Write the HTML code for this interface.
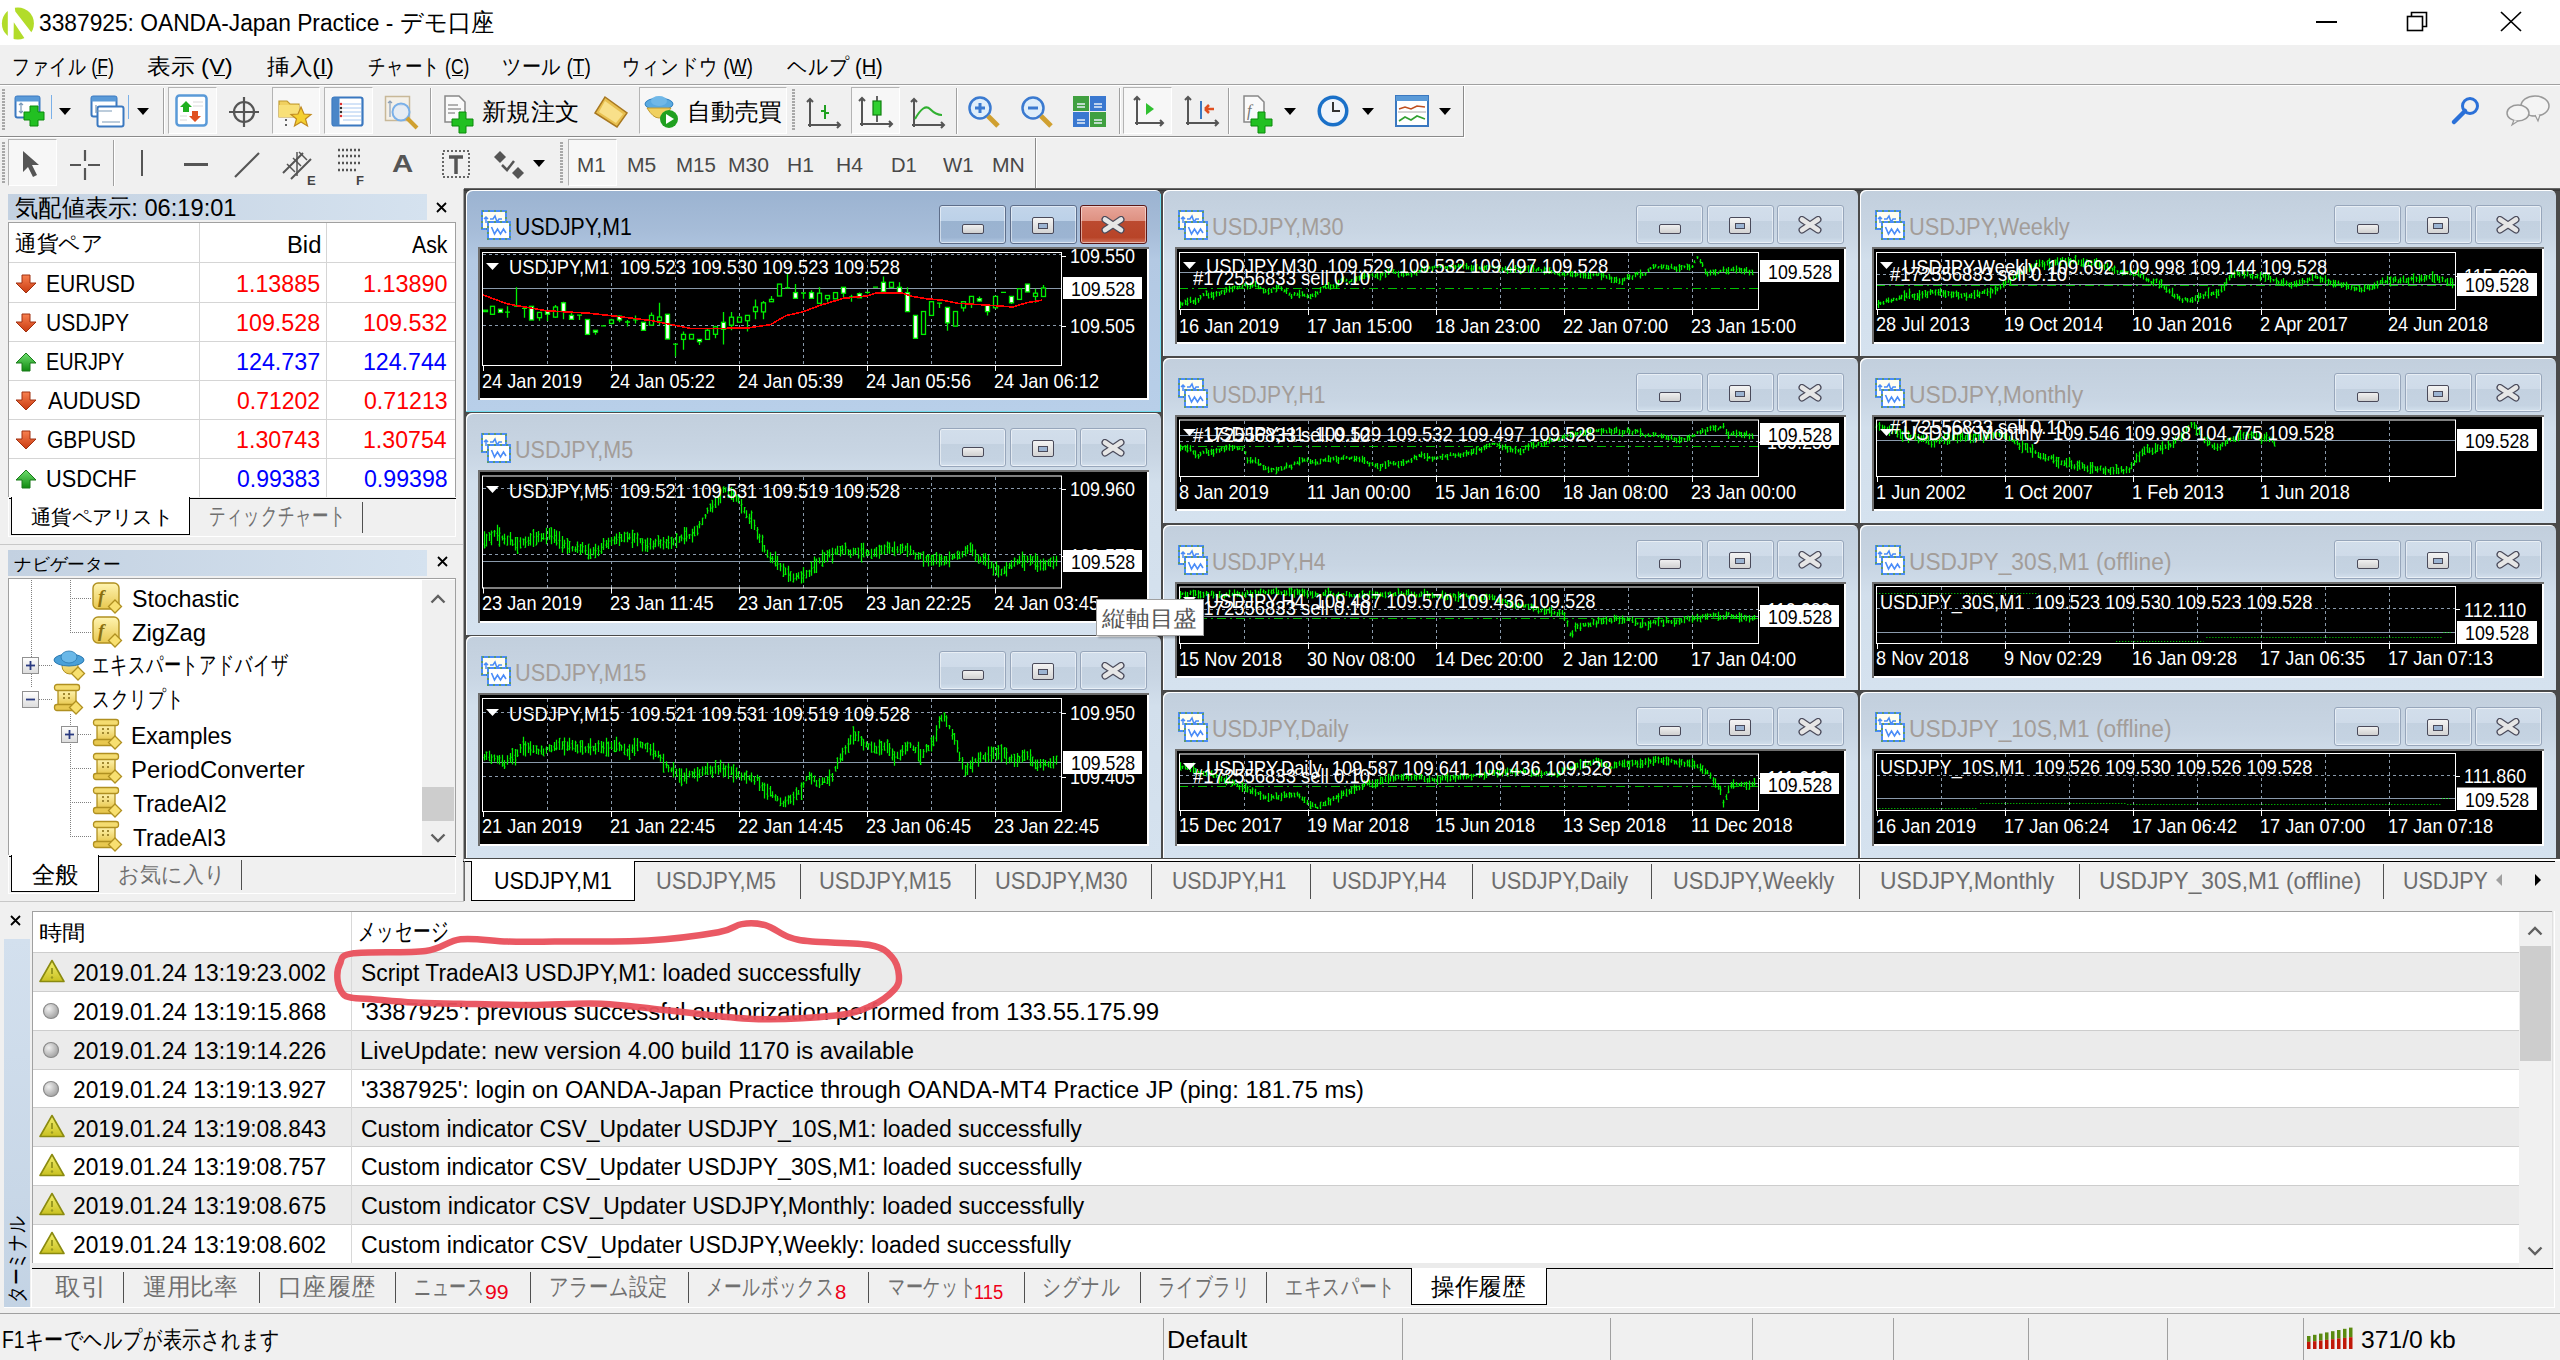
<!DOCTYPE html><html><head><meta charset="utf-8"><style>html,body{margin:0;padding:0;}body{width:2560px;height:1360px;position:relative;overflow:hidden;background:#f0f0f0;font-family:'Liberation Sans',sans-serif;}body>div,body>span,body>svg{position:absolute;}.t{position:absolute;white-space:pre;line-height:1;transform-origin:0 0;}</style></head><body><div style="left:0px;top:0px;width:2560px;height:45px;background:#fff"></div><svg style="left:0px;top:2px" width="40" height="40" viewBox="0 0 40 40"><circle cx="17.9" cy="21.4" r="16" fill="#b2dc2a"/><path d="M7.8 -1L14 -1L15.3 9.4L40 41.5L28 41.5L13.8 20.2L13.5 41L7.8 41Z" fill="#fff"/></svg><span class="t" style="left:38.77px;top:11.42px;font-size:24.56px;color:#000;transform:scaleX(0.9274);">3387925: OANDA-Japan Practice - デモ口座</span><div style="left:2316px;top:21px;width:21px;height:2px;background:#000"></div><svg style="left:2405px;top:10px" width="24" height="22" viewBox="0 0 24 22"><rect x="2.5" y="6.5" width="15" height="14" fill="none" stroke="#000" stroke-width="1.6"/><path d="M6.5 6.5V2.5H21.5V16.5H17.5" fill="none" stroke="#000" stroke-width="1.6"/></svg><svg style="left:2500px;top:11px" width="22" height="21" viewBox="0 0 22 21"><path d="M1 1L21 20M21 1L1 20" stroke="#000" stroke-width="1.7"/></svg><div style="left:0px;top:45px;width:2560px;height:39px;background:#f0f0f0"></div><div style="left:0px;top:84px;width:2560px;height:1px;background:#a0a0a0"></div><div style="left:0px;top:85px;width:2560px;height:1px;background:#fff"></div><span class="t" style="left:12.09px;top:55.52px;font-size:22.09px;color:#000;transform:scaleX(0.8073);">ファイル (F)</span><div style="left:96px;top:75px;width:11px;height:1px;background:#000"></div><span class="t" style="left:146.92px;top:55.52px;font-size:22.09px;color:#000;transform:scaleX(1.0779);">表示 (V)</span><div style="left:214px;top:75px;width:11px;height:1px;background:#000"></div><span class="t" style="left:267.00px;top:55.52px;font-size:22.09px;color:#000;transform:scaleX(1.0312);">挿入(I)</span><div style="left:316px;top:75px;width:11px;height:1px;background:#000"></div><span class="t" style="left:368.21px;top:55.52px;font-size:22.09px;color:#000;transform:scaleX(0.7937);">チャート (C)</span><div style="left:452px;top:75px;width:11px;height:1px;background:#000"></div><span class="t" style="left:502.26px;top:55.52px;font-size:22.09px;color:#000;transform:scaleX(0.8687);">ツール (T)</span><div style="left:573px;top:75px;width:11px;height:1px;background:#000"></div><span class="t" style="left:622.49px;top:55.52px;font-size:22.09px;color:#000;transform:scaleX(0.8355);">ウィンドウ (W)</span><div style="left:735px;top:75px;width:11px;height:1px;background:#000"></div><span class="t" style="left:787.00px;top:55.52px;font-size:22.09px;color:#000;transform:scaleX(0.9048);">ヘルプ (H)</span><div style="left:865px;top:75px;width:11px;height:1px;background:#000"></div><div style="left:0px;top:136px;width:1464px;height:1px;background:#8a8a8a"></div><div style="left:0px;top:137px;width:1465px;height:1px;background:#fff"></div><svg style="left:2px;top:89px" width="3" height="44"><rect x="0" y="0" width="3" height="2" fill="#a8a8a8"/><rect x="0" y="3" width="3" height="2" fill="#a8a8a8"/><rect x="0" y="6" width="3" height="2" fill="#a8a8a8"/><rect x="0" y="9" width="3" height="2" fill="#a8a8a8"/><rect x="0" y="12" width="3" height="2" fill="#a8a8a8"/><rect x="0" y="15" width="3" height="2" fill="#a8a8a8"/><rect x="0" y="18" width="3" height="2" fill="#a8a8a8"/><rect x="0" y="21" width="3" height="2" fill="#a8a8a8"/><rect x="0" y="24" width="3" height="2" fill="#a8a8a8"/><rect x="0" y="27" width="3" height="2" fill="#a8a8a8"/><rect x="0" y="30" width="3" height="2" fill="#a8a8a8"/><rect x="0" y="33" width="3" height="2" fill="#a8a8a8"/><rect x="0" y="36" width="3" height="2" fill="#a8a8a8"/><rect x="0" y="39" width="3" height="2" fill="#a8a8a8"/></svg><svg style="left:2px;top:142px" width="3" height="44"><rect x="0" y="0" width="3" height="2" fill="#a8a8a8"/><rect x="0" y="3" width="3" height="2" fill="#a8a8a8"/><rect x="0" y="6" width="3" height="2" fill="#a8a8a8"/><rect x="0" y="9" width="3" height="2" fill="#a8a8a8"/><rect x="0" y="12" width="3" height="2" fill="#a8a8a8"/><rect x="0" y="15" width="3" height="2" fill="#a8a8a8"/><rect x="0" y="18" width="3" height="2" fill="#a8a8a8"/><rect x="0" y="21" width="3" height="2" fill="#a8a8a8"/><rect x="0" y="24" width="3" height="2" fill="#a8a8a8"/><rect x="0" y="27" width="3" height="2" fill="#a8a8a8"/><rect x="0" y="30" width="3" height="2" fill="#a8a8a8"/><rect x="0" y="33" width="3" height="2" fill="#a8a8a8"/><rect x="0" y="36" width="3" height="2" fill="#a8a8a8"/><rect x="0" y="39" width="3" height="2" fill="#a8a8a8"/></svg><svg style="left:14px;top:95px" width="36" height="34" viewBox="0 0 36 34"><rect x="1.5" y="1.5" width="24" height="21" rx="2" fill="#fff" stroke="#3a78c0" stroke-width="2"/><rect x="1.5" y="1.5" width="24" height="5" fill="#5a9ad8"/><path d="M7 8V18M5 10L7 8L9 10M5 16L7 18L9 16" stroke="#7a9ab8" stroke-width="1.2" fill="none"/><path d="M16 11H24V17H30V25H24V31H16V25H10V17H16Z" fill="#22c022" stroke="#0a8a0a" stroke-width="1"/></svg><div style="left:51px;top:95px;width:1px;height:24px;background:#7ab0e8"></div><svg style="left:59px;top:108px" width="12" height="7" viewBox="0 0 12 7"><path d="M0 0H12L6 7Z" fill="#000"/></svg><svg style="left:90px;top:95px" width="36" height="36" viewBox="0 0 36 36"><rect x="1.5" y="1.5" width="25" height="20" rx="2" fill="#fff" stroke="#3a78c0" stroke-width="2"/><rect x="1.5" y="1.5" width="25" height="5" fill="#5a9ad8"/><rect x="7.5" y="11.5" width="26" height="20" rx="2" fill="#fff" stroke="#3a78c0" stroke-width="2"/><path d="M6 10V18M6 16H22M12 27H30" stroke="#7a9ab8" stroke-width="1.2"/></svg><div style="left:128px;top:95px;width:1px;height:24px;background:#7ab0e8"></div><svg style="left:137px;top:108px" width="12" height="7" viewBox="0 0 12 7"><path d="M0 0H12L6 7Z" fill="#000"/></svg><div style="left:163px;top:88px;width:1px;height:46px;background:#a0a0a0;box-shadow:1px 0 0 #fff"></div><div style="left:168px;top:87px;width:49px;height:47px;background:#f7f7f7;box-sizing:border-box;border-left:1px solid #b4b4b4;border-top:1px solid #b4b4b4;border-right:1px solid #fff;border-bottom:1px solid #fff"></div><svg style="left:175px;top:94px" width="34" height="34" viewBox="0 0 34 34"><rect x="1.5" y="1.5" width="30" height="30" rx="3" fill="#fff" stroke="#5a9ad8" stroke-width="2.5"/><path d="M8 5L14 11H11V16H5V11H2Z" fill="#20b020" transform="translate(3,2)"/><path d="M20 30L26 24H23V19H17V24H14Z" fill="#e05020" transform="translate(0,-2)"/><path d="M18 8H28M18 12H28M5 22H12M5 26H12" stroke="#d8d8d8" stroke-width="1"/></svg><svg style="left:228px;top:96px" width="32" height="32" viewBox="0 0 32 32"><circle cx="16" cy="16" r="10" fill="none" stroke="#555" stroke-width="2.2"/><path d="M16 1V31M1 16H31" stroke="#555" stroke-width="2.2"/></svg><div style="left:272px;top:87px;width:48px;height:47px;background:#f7f7f7;box-sizing:border-box;border-left:1px solid #b4b4b4;border-top:1px solid #b4b4b4;border-right:1px solid #fff;border-bottom:1px solid #fff"></div><svg style="left:277px;top:93px" width="40" height="38" viewBox="0 0 40 38"><path d="M2 8H10L13 11H22V24H2Z" fill="#f0d060" stroke="#c09a30" stroke-width="1.2"/><path d="M2 12H22V24H2Z" fill="#f8e078"/><path d="M24 14L27 21L34 21.5L28.5 26L30.5 33L24 29L17.5 33L19.5 26L14 21.5L21 21Z" fill="#f5d030" stroke="#c08a20" stroke-width="1.2"/><path d="M9 26V36" stroke="#333" stroke-width="1.5" stroke-dasharray="2 3"/></svg><div style="left:324px;top:87px;width:49px;height:47px;background:#f7f7f7;box-sizing:border-box;border-left:1px solid #b4b4b4;border-top:1px solid #b4b4b4;border-right:1px solid #fff;border-bottom:1px solid #fff"></div><svg style="left:331px;top:96px" width="34" height="32" viewBox="0 0 34 32"><rect x="1.5" y="1.5" width="30" height="28" rx="2" fill="#fff" stroke="#3a78c0" stroke-width="2.2"/><rect x="1.5" y="1.5" width="7" height="28" fill="#4a86c8"/><path d="M12 8H30M12 12H30M12 16H30M12 20H30M12 24H30" stroke="#a8c8f0" stroke-width="1"/><circle cx="10" cy="8" r="1.3" fill="#e03030"/><circle cx="10" cy="12" r="1.3" fill="#333"/><circle cx="10" cy="16" r="1.3" fill="#333"/><circle cx="10" cy="20" r="1.3" fill="#e03030"/></svg><svg style="left:384px;top:95px" width="38" height="36" viewBox="0 0 38 36"><rect x="1.5" y="1.5" width="24" height="24" fill="#f4f0e8" stroke="#c8b898" stroke-width="1.5"/><path d="M6 6V22M4 8L6 6L8 8M12 10H22" stroke="#8aa0b8" stroke-width="1.2" fill="none"/><circle cx="17" cy="17" r="8.5" fill="#dfeaf8" fill-opacity="0.7" stroke="#7ab0e8" stroke-width="2"/><path d="M23 23L33 33" stroke="#d0a030" stroke-width="4"/></svg><div style="left:430px;top:88px;width:1px;height:46px;background:#a0a0a0;box-shadow:1px 0 0 #fff"></div><svg style="left:443px;top:94px" width="40" height="40" viewBox="0 0 40 40"><path d="M2 2H16L22 8V28H2Z" fill="#fafafa" stroke="#888" stroke-width="1.5"/><path d="M5 11H15M5 15H18M5 19H12" stroke="#999" stroke-width="1.5"/><path d="M16 18H23V25H30V32H23V39H16V32H9V25H16Z" fill="#22c022" stroke="#0a8a0a" stroke-width="1"/></svg><span class="t" style="left:482.39px;top:99.50px;font-size:23.81px;color:#000;transform:scaleX(1.0108);">新規注文</span><svg style="left:593px;top:95px" width="36" height="34" viewBox="0 0 36 34"><path d="M12 2L34 18L24 32L2 18Z" fill="#e8c050" stroke="#a87820" stroke-width="1.5"/><path d="M12 6L30 19L23 28L6 17Z" fill="#f8e08a"/></svg><div style="left:639px;top:87px;width:148px;height:47px;background:#f7f7f7;box-sizing:border-box;border-left:1px solid #b4b4b4;border-top:1px solid #b4b4b4;border-right:1px solid #fff;border-bottom:1px solid #fff"></div><svg style="left:644px;top:94px" width="38" height="36" viewBox="0 0 38 36"><ellipse cx="15" cy="10" rx="14" ry="6" fill="#5aaae0" stroke="#3080c0" stroke-width="1"/><ellipse cx="15" cy="7" rx="8" ry="5" fill="#70b8e8"/><path d="M3 14Q15 34 27 14Z" fill="#f0d060" stroke="#c09a30" stroke-width="1"/><circle cx="25" cy="25" r="9" fill="#20a020"/><path d="M22 20V30L30 25Z" fill="#fff"/></svg><span class="t" style="left:686.83px;top:99.50px;font-size:23.81px;color:#000;transform:scaleX(0.9913);">自動売買</span><svg style="left:792px;top:89px" width="3" height="44"><rect x="0" y="0" width="3" height="2" fill="#a8a8a8"/><rect x="0" y="3" width="3" height="2" fill="#a8a8a8"/><rect x="0" y="6" width="3" height="2" fill="#a8a8a8"/><rect x="0" y="9" width="3" height="2" fill="#a8a8a8"/><rect x="0" y="12" width="3" height="2" fill="#a8a8a8"/><rect x="0" y="15" width="3" height="2" fill="#a8a8a8"/><rect x="0" y="18" width="3" height="2" fill="#a8a8a8"/><rect x="0" y="21" width="3" height="2" fill="#a8a8a8"/><rect x="0" y="24" width="3" height="2" fill="#a8a8a8"/><rect x="0" y="27" width="3" height="2" fill="#a8a8a8"/><rect x="0" y="30" width="3" height="2" fill="#a8a8a8"/><rect x="0" y="33" width="3" height="2" fill="#a8a8a8"/><rect x="0" y="36" width="3" height="2" fill="#a8a8a8"/><rect x="0" y="39" width="3" height="2" fill="#a8a8a8"/></svg><svg style="left:806px;top:97px" width="36" height="34" viewBox="0 0 36 34"><path d="M4 2V30M1 5L4 2L7 5M2 28H34M31 25L34 28L31 31" stroke="#555" stroke-width="2" fill="none"/><path d="M19 8V22M15 14H19M19 16H23" stroke="#20a020" stroke-width="2"/></svg><div style="left:851px;top:87px;width:49px;height:47px;background:#f7f7f7;box-sizing:border-box;border-left:1px solid #b4b4b4;border-top:1px solid #b4b4b4;border-right:1px solid #fff;border-bottom:1px solid #fff"></div><svg style="left:858px;top:94px" width="36" height="36" viewBox="0 0 36 36"><path d="M4 4V32M1 7L4 4L7 7M2 30H34M31 27L34 30L31 33" stroke="#555" stroke-width="2" fill="none"/><path d="M19 2V28" stroke="#333" stroke-width="1.5"/><rect x="15" y="7" width="8" height="14" fill="#30d030" stroke="#108010" stroke-width="1.2"/></svg><svg style="left:910px;top:97px" width="36" height="34" viewBox="0 0 36 34"><path d="M4 2V30M1 5L4 2L7 5M2 28H34M31 25L34 28L31 31" stroke="#555" stroke-width="2" fill="none"/><path d="M5 22Q14 6 20 12T32 18" stroke="#30b030" stroke-width="2" fill="none"/></svg><div style="left:956px;top:88px;width:1px;height:46px;background:#a0a0a0;box-shadow:1px 0 0 #fff"></div><svg style="left:967px;top:95px" width="34" height="34" viewBox="0 0 34 34"><circle cx="13" cy="13" r="10.5" fill="#dfeefa" stroke="#3a7ad0" stroke-width="2.5"/><path d="M21 21L31 31" stroke="#d0a030" stroke-width="5"/><path d="M8 13H18M13 8V18" stroke="#3a7ad0" stroke-width="3"/></svg><svg style="left:1020px;top:95px" width="34" height="34" viewBox="0 0 34 34"><circle cx="13" cy="13" r="10.5" fill="#dfeefa" stroke="#3a7ad0" stroke-width="2.5"/><path d="M21 21L31 31" stroke="#d0a030" stroke-width="5"/><path d="M8 13H18" stroke="#3a7ad0" stroke-width="3"/></svg><svg style="left:1072px;top:95px" width="36" height="34" viewBox="0 0 36 34"><rect x="1" y="1" width="16" height="15" fill="#40a040"/><rect x="18" y="1" width="16" height="15" fill="#3a78d0"/><rect x="1" y="17" width="16" height="15" fill="#3a78d0"/><rect x="18" y="17" width="16" height="15" fill="#40a040"/><path d="M5 9H13M5 12H13M22 9H30M22 12H30M5 25H13M5 28H13M22 25H30M22 28H30" stroke="#e8f0f8" stroke-width="1.5"/></svg><div style="left:1119px;top:88px;width:1px;height:46px;background:#a0a0a0;box-shadow:1px 0 0 #fff"></div><div style="left:1123px;top:87px;width:49px;height:47px;background:#f7f7f7;box-sizing:border-box;border-left:1px solid #b4b4b4;border-top:1px solid #b4b4b4;border-right:1px solid #fff;border-bottom:1px solid #fff"></div><svg style="left:1130px;top:95px" width="36" height="34" viewBox="0 0 36 34"><path d="M7 2V30M4 5L7 2L10 5M5 28H33M30 25L33 28L30 31" stroke="#555" stroke-width="2" fill="none"/><path d="M16 8V20L24 14Z" fill="#30c030"/></svg><svg style="left:1184px;top:95px" width="36" height="34" viewBox="0 0 36 34"><path d="M4 2V30M1 5L4 2L7 5M2 28H34M31 25L34 28L31 31" stroke="#555" stroke-width="2" fill="none"/><path d="M17 6V24" stroke="#3a78c0" stroke-width="2"/><path d="M21 14H30M21 14L25 10M21 14L25 18" stroke="#e05020" stroke-width="2.5"/></svg><div style="left:1228px;top:88px;width:1px;height:46px;background:#a0a0a0;box-shadow:1px 0 0 #fff"></div><svg style="left:1242px;top:94px" width="38" height="40" viewBox="0 0 38 40"><path d="M2 2H16L22 8V28H2Z" fill="#fafafa" stroke="#888" stroke-width="1.5"/><text x="5" y="22" font-size="16" fill="#777" font-family="Liberation Serif" font-style="italic">f</text><path d="M16 18H23V25H30V32H23V39H16V32H9V25H16Z" fill="#22c022" stroke="#0a8a0a" stroke-width="1"/></svg><svg style="left:1284px;top:108px" width="12" height="7" viewBox="0 0 12 7"><path d="M0 0H12L6 7Z" fill="#000"/></svg><svg style="left:1316px;top:94px" width="36" height="36" viewBox="0 0 36 36"><circle cx="17" cy="17" r="15.5" fill="#1a70c8"/><circle cx="17" cy="17" r="12" fill="#f0f4fa"/><path d="M17 8V17H24" stroke="#333" stroke-width="2" fill="none"/></svg><svg style="left:1362px;top:108px" width="12" height="7" viewBox="0 0 12 7"><path d="M0 0H12L6 7Z" fill="#000"/></svg><svg style="left:1395px;top:95px" width="36" height="34" viewBox="0 0 36 34"><rect x="1" y="1" width="32" height="30" fill="#fff" stroke="#3a78c0" stroke-width="2"/><rect x="1" y="1" width="32" height="5" fill="#5a9ad8"/><path d="M4 14L10 12L16 14L22 11L30 12" stroke="#c05020" stroke-width="1.6" fill="none"/><path d="M3 17H31" stroke="#aaa" stroke-width="1"/><path d="M4 26L10 22L16 25L22 21L30 24" stroke="#30a030" stroke-width="1.6" fill="none"/></svg><svg style="left:1439px;top:108px" width="12" height="7" viewBox="0 0 12 7"><path d="M0 0H12L6 7Z" fill="#000"/></svg><div style="left:1463px;top:86px;width:1px;height:51px;background:#8a8a8a"></div><div style="left:1464px;top:86px;width:1px;height:52px;background:#fff"></div><svg style="left:2450px;top:96px" width="32" height="30" viewBox="0 0 32 30"><circle cx="20" cy="10" r="7.5" fill="none" stroke="#2a70d8" stroke-width="3"/><path d="M15 15L4 26" stroke="#2a70d8" stroke-width="4.5" stroke-linecap="round"/></svg><svg style="left:2504px;top:94px" width="48" height="34" viewBox="0 0 48 34"><ellipse cx="31" cy="12" rx="14" ry="10" fill="#f4f4f4" stroke="#999" stroke-width="1.5"/><path d="M31 21L34 27L36 21" fill="#f4f4f4" stroke="#999" stroke-width="1.2"/><ellipse cx="14" cy="19" rx="11" ry="8" fill="#f4f4f4" stroke="#999" stroke-width="1.5"/><path d="M10 26L8 31L14 27" fill="#f4f4f4" stroke="#999" stroke-width="1.2"/></svg><div style="left:8px;top:139px;width:49px;height:47px;background:#f7f7f7;box-sizing:border-box;border-left:1px solid #b4b4b4;border-top:1px solid #b4b4b4;border-right:1px solid #fff;border-bottom:1px solid #fff"></div><svg style="left:20px;top:150px" width="22" height="30" viewBox="0 0 22 30"><path d="M3 1L3 22L8 17L13 27L17 25L12 15L19 15Z" fill="#555"/></svg><svg style="left:68px;top:148px" width="34" height="34" viewBox="0 0 34 34"><path d="M17 2V13M17 20V32M2 17H13M20 17H32" stroke="#555" stroke-width="2.2"/></svg><div style="left:113px;top:140px;width:1px;height:46px;background:#a0a0a0;box-shadow:1px 0 0 #fff"></div><div style="left:141px;top:150px;width:2px;height:26px;background:#555"></div><div style="left:184px;top:163px;width:24px;height:3px;background:#555"></div><svg style="left:232px;top:150px" width="30" height="30" viewBox="0 0 30 30"><path d="M3 27L27 3" stroke="#555" stroke-width="2.2"/></svg><svg style="left:281px;top:148px" width="40" height="38" viewBox="0 0 40 38"><path d="M2 25L22 5M10 31L30 11" stroke="#555" stroke-width="2"/><path d="M6 16L14 24M12 10L20 18M18 4L26 12" stroke="#555" stroke-width="1.5"/><path d="M16 4V28" stroke="#555" stroke-width="1.5"/><text x="26" y="37" font-size="13" font-weight="bold" fill="#444" font-family="Liberation Sans">E</text></svg><svg style="left:336px;top:148px" width="34" height="38" viewBox="0 0 34 38"><path d="M2 2H26M2 8H26M2 15H26M2 22H22" stroke="#555" stroke-width="2.5" stroke-dasharray="2 2"/><text x="20" y="37" font-size="13" font-weight="bold" fill="#444" font-family="Liberation Sans">F</text></svg><span class="t" style="left:392.23px;top:152.93px;font-size:23.26px;color:#555;font-weight:700;transform:scaleX(1.2667);">A</span><svg style="left:441px;top:149px" width="32" height="32" viewBox="0 0 32 32"><rect x="2" y="2" width="26" height="26" fill="none" stroke="#666" stroke-width="2" stroke-dasharray="2 2"/><path d="M8 8H22M15 8V25" stroke="#555" stroke-width="3.5"/></svg><svg style="left:492px;top:149px" width="36" height="32" viewBox="0 0 36 32"><path d="M2 8L8 2L14 8L8 14Z" fill="#555"/><path d="M20 24L26 18L32 24L26 30Z" fill="#555"/><path d="M10 16L15 21L22 12" stroke="#555" stroke-width="2.5" fill="none"/></svg><svg style="left:533px;top:160px" width="12" height="7" viewBox="0 0 12 7"><path d="M0 0H12L6 7Z" fill="#000"/></svg><svg style="left:560px;top:142px" width="3" height="44"><rect x="0" y="0" width="3" height="2" fill="#a8a8a8"/><rect x="0" y="3" width="3" height="2" fill="#a8a8a8"/><rect x="0" y="6" width="3" height="2" fill="#a8a8a8"/><rect x="0" y="9" width="3" height="2" fill="#a8a8a8"/><rect x="0" y="12" width="3" height="2" fill="#a8a8a8"/><rect x="0" y="15" width="3" height="2" fill="#a8a8a8"/><rect x="0" y="18" width="3" height="2" fill="#a8a8a8"/><rect x="0" y="21" width="3" height="2" fill="#a8a8a8"/><rect x="0" y="24" width="3" height="2" fill="#a8a8a8"/><rect x="0" y="27" width="3" height="2" fill="#a8a8a8"/><rect x="0" y="30" width="3" height="2" fill="#a8a8a8"/><rect x="0" y="33" width="3" height="2" fill="#a8a8a8"/><rect x="0" y="36" width="3" height="2" fill="#a8a8a8"/><rect x="0" y="39" width="3" height="2" fill="#a8a8a8"/></svg><div style="left:568px;top:139px;width:49px;height:47px;background:#f7f7f7;box-sizing:border-box;border-left:1px solid #b4b4b4;border-top:1px solid #b4b4b4;border-right:1px solid #fff;border-bottom:1px solid #fff"></div><span class="t" style="left:576.54px;top:154.28px;font-size:21.08px;color:#484848;transform:scaleX(0.9808);">M1</span><span class="t" style="left:627.00px;top:154.28px;font-size:21.08px;color:#484848;">M5</span><span class="t" style="left:676.05px;top:154.28px;font-size:21.08px;color:#484848;transform:scaleX(0.9737);">M15</span><span class="t" style="left:728.00px;top:154.28px;font-size:21.08px;color:#484848;">M30</span><span class="t" style="left:787.00px;top:154.28px;font-size:21.08px;color:#484848;">H1</span><span class="t" style="left:836.00px;top:154.28px;font-size:21.08px;color:#484848;">H4</span><span class="t" style="left:891.08px;top:154.28px;font-size:21.08px;color:#484848;transform:scaleX(0.9583);">D1</span><span class="t" style="left:943.00px;top:154.28px;font-size:21.08px;color:#484848;transform:scaleX(0.9677);">W1</span><span class="t" style="left:992.00px;top:154.28px;font-size:21.08px;color:#484848;">MN</span><div style="left:1035px;top:138px;width:1px;height:50px;background:#8a8a8a"></div><div style="left:1036px;top:138px;width:1px;height:50px;background:#fff"></div><svg style="left:0;top:0" width="0" height="0"><defs><linearGradient id="gu" x1="0" y1="0" x2="0" y2="1"><stop offset="0" stop-color="#70e070"/><stop offset="1" stop-color="#108a10"/></linearGradient><linearGradient id="gd" x1="0" y1="0" x2="0" y2="1"><stop offset="0" stop-color="#f88050"/><stop offset="1" stop-color="#c83a10"/></linearGradient><linearGradient id="gy" x1="0" y1="0" x2="0" y2="1"><stop offset="0" stop-color="#fff4b0"/><stop offset="1" stop-color="#e8c850"/></linearGradient><linearGradient id="gb" x1="0" y1="0" x2="0" y2="1"><stop offset="0" stop-color="#fff"/><stop offset="1" stop-color="#dcdcdc"/></linearGradient></defs></svg><div style="left:0px;top:189px;width:464px;height:712px;background:#f0f0f0"></div><div style="left:8px;top:194px;width:419px;height:26px;background:linear-gradient(90deg,#c3d1e1,#d5e2ef)"></div><span class="t" style="left:15.03px;top:195.94px;font-size:24.42px;color:#000;transform:scaleX(0.9692);">気配値表示: 06:19:01</span><svg style="left:436px;top:202px" width="11" height="11" viewBox="0 0 11 11"><path d="M1 1L10 10M10 1L1 10" stroke="#000" stroke-width="1.8"/></svg><div style="left:8px;top:222px;width:448px;height:275px;background:#fff;box-sizing:border-box;border:1px solid #a0a0a0;border-bottom:none"></div><div style="left:9px;top:262px;width:446px;height:1px;background:#d5d5d5"></div><div style="left:9px;top:302px;width:446px;height:1px;background:#d5d5d5"></div><div style="left:9px;top:341px;width:446px;height:1px;background:#d5d5d5"></div><div style="left:9px;top:380px;width:446px;height:1px;background:#d5d5d5"></div><div style="left:9px;top:419px;width:446px;height:1px;background:#d5d5d5"></div><div style="left:9px;top:458px;width:446px;height:1px;background:#d5d5d5"></div><div style="left:199px;top:223px;width:1px;height:274px;background:#d5d5d5"></div><div style="left:326px;top:223px;width:1px;height:274px;background:#d5d5d5"></div><span class="t" style="left:15.02px;top:233.00px;font-size:22.39px;color:#000;transform:scaleX(0.9837);">通貨ペア</span><span class="t" style="left:287.45px;top:232.94px;font-size:24.42px;color:#000;transform:scaleX(0.9750);">Bid</span><span class="t" style="left:412.40px;top:232.94px;font-size:24.42px;color:#000;transform:scaleX(0.8683);">Ask</span><svg style="left:15px;top:274px" width="23" height="22" viewBox="0 0 23 22"><path d="M11 19L21 9H15V1H7V9H1Z" fill="url(#gd)" stroke="#a03010" stroke-width="1"/></svg><span class="t" style="left:45.95px;top:272.19px;font-size:24.13px;color:#000;transform:scaleX(0.8737);">EURUSD</span><span class="t" style="left:236.07px;top:272.19px;font-size:24.13px;color:#ff0000;transform:scaleX(0.9643);">1.13885</span><span class="t" style="left:362.76px;top:272.19px;font-size:24.13px;color:#ff0000;transform:scaleX(0.9702);">1.13890</span><svg style="left:15px;top:313px" width="23" height="22" viewBox="0 0 23 22"><path d="M11 19L21 9H15V1H7V9H1Z" fill="url(#gd)" stroke="#a03010" stroke-width="1"/></svg><span class="t" style="left:45.95px;top:311.19px;font-size:24.13px;color:#000;transform:scaleX(0.8728);">USDJPY</span><span class="t" style="left:236.07px;top:311.19px;font-size:24.13px;color:#ff0000;transform:scaleX(0.9643);">109.528</span><span class="t" style="left:362.76px;top:311.19px;font-size:24.13px;color:#ff0000;transform:scaleX(0.9702);">109.532</span><svg style="left:15px;top:352px" width="23" height="22" viewBox="0 0 23 22"><path d="M11 1L21 11H15V19H7V11H1Z" fill="url(#gu)" stroke="#1a7a1a" stroke-width="1"/></svg><span class="t" style="left:46.05px;top:350.19px;font-size:24.13px;color:#000;transform:scaleX(0.8228);">EURJPY</span><span class="t" style="left:236.07px;top:350.19px;font-size:24.13px;color:#0000ff;transform:scaleX(0.9643);">124.737</span><span class="t" style="left:362.78px;top:350.19px;font-size:24.13px;color:#0000ff;transform:scaleX(0.9588);">124.744</span><svg style="left:15px;top:391px" width="23" height="22" viewBox="0 0 23 22"><path d="M11 19L21 9H15V1H7V9H1Z" fill="url(#gd)" stroke="#a03010" stroke-width="1"/></svg><span class="t" style="left:47.70px;top:389.19px;font-size:24.13px;color:#000;transform:scaleX(0.9099);">AUDUSD</span><span class="t" style="left:237.05px;top:389.19px;font-size:24.13px;color:#ff0000;transform:scaleX(0.9529);">0.71202</span><span class="t" style="left:363.74px;top:389.19px;font-size:24.13px;color:#ff0000;transform:scaleX(0.9588);">0.71213</span><svg style="left:15px;top:430px" width="23" height="22" viewBox="0 0 23 22"><path d="M11 19L21 9H15V1H7V9H1Z" fill="url(#gd)" stroke="#a03010" stroke-width="1"/></svg><span class="t" style="left:46.83px;top:428.19px;font-size:24.13px;color:#000;transform:scaleX(0.8710);">GBPUSD</span><span class="t" style="left:236.07px;top:428.19px;font-size:24.13px;color:#ff0000;transform:scaleX(0.9643);">1.30743</span><span class="t" style="left:362.78px;top:428.19px;font-size:24.13px;color:#ff0000;transform:scaleX(0.9588);">1.30754</span><svg style="left:15px;top:469px" width="23" height="22" viewBox="0 0 23 22"><path d="M11 1L21 11H15V19H7V11H1Z" fill="url(#gu)" stroke="#1a7a1a" stroke-width="1"/></svg><span class="t" style="left:45.90px;top:467.19px;font-size:24.13px;color:#000;transform:scaleX(0.9010);">USDCHF</span><span class="t" style="left:237.05px;top:467.19px;font-size:24.13px;color:#0000ff;transform:scaleX(0.9529);">0.99383</span><span class="t" style="left:363.74px;top:467.19px;font-size:24.13px;color:#0000ff;transform:scaleX(0.9588);">0.99398</span><div style="left:8px;top:497px;width:448px;height:40px;background:#f0f0f0;box-sizing:border-box;border-left:1px solid #fff;border-right:1px solid #fff;border-bottom:1px solid #fff"></div><div style="left:9px;top:498px;width:447px;height:1px;background:#000"></div><div style="left:11px;top:497px;width:179px;height:38px;background:#fff;box-sizing:border-box;border:1px solid #000;border-top:none"></div><span class="t" style="left:30.99px;top:507.00px;font-size:20.11px;color:#000;transform:scaleX(1.0149);">通貨ペアリスト</span><span class="t" style="left:208.63px;top:504.00px;font-size:24.13px;color:#707070;transform:scaleX(0.6868);">ティックチャート</span><div style="left:362px;top:502px;width:1px;height:31px;background:#505050"></div><div style="left:0px;top:544px;width:464px;height:1px;background:#c8c8c8"></div><div style="left:8px;top:550px;width:419px;height:26px;background:linear-gradient(90deg,#c3d1e1,#d5e2ef)"></div><span class="t" style="left:13.65px;top:555.50px;font-size:17.21px;color:#000;transform:scaleX(1.0460);">ナビゲーター</span><svg style="left:437px;top:556px" width="11" height="11" viewBox="0 0 11 11"><path d="M1 1L10 10M10 1L1 10" stroke="#000" stroke-width="1.8"/></svg><div style="left:8px;top:578px;width:448px;height:278px;background:#fff;box-sizing:border-box;border:1px solid #a0a0a0;border-bottom:none"></div><div style="left:422px;top:580px;width:33px;height:275px;background:#f0f0f0"></div><div style="left:422px;top:787px;width:32px;height:34px;background:#cdcdcd"></div><svg style="left:430px;top:594px" width="16" height="10" viewBox="0 0 16 10"><path d="M1.5 8.5L8 2L14.5 8.5" stroke="#606060" stroke-width="2.4" fill="none"/></svg><svg style="left:430px;top:833px" width="16" height="10" viewBox="0 0 16 10"><path d="M1.5 1.5L8 8L14.5 1.5" stroke="#606060" stroke-width="2.4" fill="none"/></svg><div style="left:31px;top:580px;width:1px;height:108px;background:repeating-linear-gradient(180deg,#808080 0 1px,transparent 1px 2px)"></div><div style="left:70px;top:580px;width:1px;height:52px;background:repeating-linear-gradient(180deg,#808080 0 1px,transparent 1px 2px)"></div><div style="left:70px;top:598px;width:22px;height:1px;background:repeating-linear-gradient(90deg,#808080 0 1px,transparent 1px 2px)"></div><div style="left:70px;top:632px;width:22px;height:1px;background:repeating-linear-gradient(90deg,#808080 0 1px,transparent 1px 2px)"></div><div style="left:31px;top:665px;width:22px;height:1px;background:repeating-linear-gradient(90deg,#808080 0 1px,transparent 1px 2px)"></div><div style="left:31px;top:699px;width:22px;height:1px;background:repeating-linear-gradient(90deg,#808080 0 1px,transparent 1px 2px)"></div><div style="left:70px;top:714px;width:1px;height:122px;background:repeating-linear-gradient(180deg,#808080 0 1px,transparent 1px 2px)"></div><div style="left:78px;top:734px;width:14px;height:1px;background:repeating-linear-gradient(90deg,#808080 0 1px,transparent 1px 2px)"></div><div style="left:70px;top:768px;width:22px;height:1px;background:repeating-linear-gradient(90deg,#808080 0 1px,transparent 1px 2px)"></div><div style="left:70px;top:802px;width:22px;height:1px;background:repeating-linear-gradient(90deg,#808080 0 1px,transparent 1px 2px)"></div><div style="left:70px;top:836px;width:22px;height:1px;background:repeating-linear-gradient(90deg,#808080 0 1px,transparent 1px 2px)"></div><svg style="left:92px;top:582px" width="32" height="32" viewBox="0 0 32 32"><rect x="1" y="1" width="26" height="26" rx="5" fill="url(#gy)" stroke="#b09020" stroke-width="1.4"/><text x="6" y="21" font-size="19" font-weight="bold" font-style="italic" font-family="Liberation Serif" fill="#8a7010">f</text><path d="M23 18L29.5 24.5L23 31L16.5 24.5Z" fill="#f8e070" stroke="#b09020" stroke-width="1.3"/></svg><span class="t" style="left:131.74px;top:587.19px;font-size:24.13px;color:#000;transform:scaleX(0.9636);">Stochastic</span><svg style="left:92px;top:616px" width="32" height="32" viewBox="0 0 32 32"><rect x="1" y="1" width="26" height="26" rx="5" fill="url(#gy)" stroke="#b09020" stroke-width="1.4"/><text x="6" y="21" font-size="19" font-weight="bold" font-style="italic" font-family="Liberation Serif" fill="#8a7010">f</text><path d="M23 18L29.5 24.5L23 31L16.5 24.5Z" fill="#f8e070" stroke="#b09020" stroke-width="1.3"/></svg><span class="t" style="left:131.71px;top:621.19px;font-size:24.13px;color:#000;transform:scaleX(0.9863);">ZigZag</span><svg style="left:22px;top:657px" width="18" height="18" viewBox="0 0 18 18"><rect x="0.5" y="0.5" width="16" height="16" fill="url(#gb)" stroke="#919191" stroke-width="1"/><path d="M4 8.5H13" stroke="#2a3a80" stroke-width="1.8"/><path d="M8.5 4V13" stroke="#2a3a80" stroke-width="1.8"/></svg><svg style="left:53px;top:649px" width="34" height="32" viewBox="0 0 34 32"><circle cx="17" cy="17" r="8" fill="url(#gy)" stroke="#b09020" stroke-width="1"/><ellipse cx="16" cy="11" rx="15" ry="6" fill="#4aa0d8" stroke="#2a78b0" stroke-width="1"/><ellipse cx="16" cy="8" rx="8" ry="6" fill="#6ab8e8" stroke="#2a78b0" stroke-width="0.8"/><path d="M25 18L31.5 24.5L25 31L18.5 24.5Z" fill="#f8e070" stroke="#b09020" stroke-width="1.3"/></svg><span class="t" style="left:92.36px;top:653.00px;font-size:24.13px;color:#000;transform:scaleX(0.7177);">エキスパートアドバイザ</span><svg style="left:22px;top:691px" width="18" height="18" viewBox="0 0 18 18"><rect x="0.5" y="0.5" width="16" height="16" fill="url(#gb)" stroke="#919191" stroke-width="1"/><path d="M4 8.5H13" stroke="#2a3a80" stroke-width="1.8"/></svg><svg style="left:53px;top:683px" width="32" height="32" viewBox="0 0 32 32"><path d="M5 7H23V22H5Z" fill="url(#gy)" stroke="#b09020" stroke-width="1.3"/><rect x="1.5" y="1.5" width="25" height="6" rx="2.5" fill="#f4dc70" stroke="#b09020" stroke-width="1.3"/><rect x="1.5" y="21.5" width="25" height="6" rx="2.5" fill="#e8c850" stroke="#b09020" stroke-width="1.3"/><path d="M10 11H12M15 11H17M10 15H12M15 15H17" stroke="#a08830" stroke-width="1.8"/><path d="M23 18L29.5 24.5L23 31L16.5 24.5Z" fill="#f8e070" stroke="#b09020" stroke-width="1.3"/></svg><span class="t" style="left:92.26px;top:688.00px;font-size:23.08px;color:#000;transform:scaleX(0.7721);">スクリプト</span><svg style="left:61px;top:726px" width="18" height="18" viewBox="0 0 18 18"><rect x="0.5" y="0.5" width="16" height="16" fill="url(#gb)" stroke="#919191" stroke-width="1"/><path d="M4 8.5H13" stroke="#2a3a80" stroke-width="1.8"/><path d="M8.5 4V13" stroke="#2a3a80" stroke-width="1.8"/></svg><svg style="left:92px;top:718px" width="32" height="32" viewBox="0 0 32 32"><path d="M5 7H23V22H5Z" fill="url(#gy)" stroke="#b09020" stroke-width="1.3"/><rect x="1.5" y="1.5" width="25" height="6" rx="2.5" fill="#f4dc70" stroke="#b09020" stroke-width="1.3"/><rect x="1.5" y="21.5" width="25" height="6" rx="2.5" fill="#e8c850" stroke="#b09020" stroke-width="1.3"/><path d="M10 11H12M15 11H17M10 15H12M15 15H17" stroke="#a08830" stroke-width="1.8"/><path d="M23 18L29.5 24.5L23 31L16.5 24.5Z" fill="#f8e070" stroke="#b09020" stroke-width="1.3"/></svg><span class="t" style="left:130.80px;top:724.19px;font-size:24.13px;color:#000;transform:scaleX(0.9515);">Examples</span><svg style="left:92px;top:752px" width="32" height="32" viewBox="0 0 32 32"><path d="M5 7H23V22H5Z" fill="url(#gy)" stroke="#b09020" stroke-width="1.3"/><rect x="1.5" y="1.5" width="25" height="6" rx="2.5" fill="#f4dc70" stroke="#b09020" stroke-width="1.3"/><rect x="1.5" y="21.5" width="25" height="6" rx="2.5" fill="#e8c850" stroke="#b09020" stroke-width="1.3"/><path d="M10 11H12M15 11H17M10 15H12M15 15H17" stroke="#a08830" stroke-width="1.8"/><path d="M23 18L29.5 24.5L23 31L16.5 24.5Z" fill="#f8e070" stroke="#b09020" stroke-width="1.3"/></svg><span class="t" style="left:130.72px;top:758.19px;font-size:24.13px;color:#000;transform:scaleX(0.9885);">PeriodConverter</span><svg style="left:92px;top:786px" width="32" height="32" viewBox="0 0 32 32"><path d="M5 7H23V22H5Z" fill="url(#gy)" stroke="#b09020" stroke-width="1.3"/><rect x="1.5" y="1.5" width="25" height="6" rx="2.5" fill="#f4dc70" stroke="#b09020" stroke-width="1.3"/><rect x="1.5" y="21.5" width="25" height="6" rx="2.5" fill="#e8c850" stroke="#b09020" stroke-width="1.3"/><path d="M10 11H12M15 11H17M10 15H12M15 15H17" stroke="#a08830" stroke-width="1.8"/><path d="M23 18L29.5 24.5L23 31L16.5 24.5Z" fill="#f8e070" stroke="#b09020" stroke-width="1.3"/></svg><span class="t" style="left:132.70px;top:792.19px;font-size:24.13px;color:#000;transform:scaleX(0.9536);">TradeAI2</span><svg style="left:92px;top:820px" width="32" height="32" viewBox="0 0 32 32"><path d="M5 7H23V22H5Z" fill="url(#gy)" stroke="#b09020" stroke-width="1.3"/><rect x="1.5" y="1.5" width="25" height="6" rx="2.5" fill="#f4dc70" stroke="#b09020" stroke-width="1.3"/><rect x="1.5" y="21.5" width="25" height="6" rx="2.5" fill="#e8c850" stroke="#b09020" stroke-width="1.3"/><path d="M10 11H12M15 11H17M10 15H12M15 15H17" stroke="#a08830" stroke-width="1.8"/><path d="M23 18L29.5 24.5L23 31L16.5 24.5Z" fill="#f8e070" stroke="#b09020" stroke-width="1.3"/></svg><span class="t" style="left:132.70px;top:826.19px;font-size:24.13px;color:#000;transform:scaleX(0.9439);">TradeAI3</span><div style="left:8px;top:855px;width:448px;height:39px;background:#f0f0f0;box-sizing:border-box;border-left:1px solid #fff;border-right:1px solid #fff;border-bottom:1px solid #fff"></div><div style="left:9px;top:856px;width:447px;height:1px;background:#000"></div><div style="left:11px;top:855px;width:88px;height:37px;background:#fff;box-sizing:border-box;border:1px solid #000;border-top:none"></div><span class="t" style="left:31.62px;top:862.60px;font-size:23.91px;color:#000;transform:scaleX(0.9761);">全般</span><span class="t" style="left:117.79px;top:863.60px;font-size:21.92px;color:#707070;transform:scaleX(0.9552);">お気に入り</span><div style="left:241px;top:860px;width:1px;height:30px;background:#505050"></div><div style="left:0px;top:901px;width:464px;height:1px;background:#c8c8c8"></div><div style="left:463px;top:189px;width:1px;height:712px;background:#a0a0a0"></div><div style="left:464px;top:188px;width:2096px;height:671px;background:linear-gradient(180deg,#7a7a7a 0,#555 1px,#2a2a2a 2px,#4a4a4a 3px)"></div><div style="left:466px;top:190px;width:695px;height:222px;background:linear-gradient(180deg,#9bb3d1 0px,#a6bcd8 40px,#b3c9e3 70px,#b8cfe9 100%);border-top-left-radius:6px;border-top-right-radius:6px;box-shadow:inset 1px 1px 0 #fff"></div><div style="left:1160px;top:194px;width:1px;height:218px;background:#70dcf0"></div><div style="left:466px;top:411px;width:695px;height:1px;background:#70dcf0"></div><svg style="left:481px;top:210px" width="31" height="31" viewBox="0 0 31 31"><rect x="1" y="1" width="24" height="18" fill="#fffdf0" stroke="#4a8cf8" stroke-width="2"/><rect x="1" y="1" width="24" height="18" fill="none" stroke="#5a9a70" stroke-width="2" stroke-dasharray="2 4"/><path d="M5 7V13M3 9L5 7L7 9M9 9H12L14 6L16 12L18 9H21" stroke="#4a8cf8" stroke-width="1.5" fill="none"/><rect x="7" y="12" width="22" height="17" fill="#fff" stroke="#4a8cf8" stroke-width="2"/><rect x="7" y="12" width="22" height="17" fill="none" stroke="#5a9a70" stroke-width="2" stroke-dasharray="2 4"/><path d="M10.5 17L13.5 24L16.5 19L19.5 24L22.5 19L25 23" stroke="#4a8cf8" stroke-width="1.6" fill="none"/></svg><span class="t" style="left:515.25px;top:214.94px;font-size:24.42px;color:#000;transform:scaleX(0.8725);">USDJPY,M1</span><div style="left:939px;top:205px;width:67px;height:39px;background:linear-gradient(180deg,#c2d5ea 0,#bcd1e8 40%,#9ab3d0 40%,#9cb4d2 85%,#b4cae4 100%);border:1px solid #5e6e8a;box-sizing:border-box;border-radius:3px;box-shadow:inset 0 0 0 1px rgba(255,255,255,0.5)"></div><div style="left:962px;top:224px;width:21.5px;height:9.5px;background:linear-gradient(180deg,#f0f0f0,#d0d0d0);border:1px solid #4a4a5a;box-sizing:border-box;border-radius:2px"></div><div style="left:1009.5px;top:205px;width:67px;height:39px;background:linear-gradient(180deg,#c2d5ea 0,#bcd1e8 40%,#9ab3d0 40%,#9cb4d2 85%,#b4cae4 100%);border:1px solid #5e6e8a;box-sizing:border-box;border-radius:3px;box-shadow:inset 0 0 0 1px rgba(255,255,255,0.5)"></div><div style="left:1032.0px;top:217px;width:21.5px;height:16.5px;background:linear-gradient(180deg,#f4f4f4,#d4d4d4);border:1px solid #4a4a5a;box-sizing:border-box;border-radius:2px"></div><div style="left:1038.0px;top:222.5px;width:9.5px;height:6px;background:#9cb4d2;border:1px solid #4a4a5a;box-sizing:border-box"></div><div style="left:1080px;top:205px;width:67px;height:39px;background:linear-gradient(180deg,#e8a69a 0,#de9182 40%,#bc4a30 40%,#b84428 85%,#cf6f58 100%);border:1px solid #5a1818;box-sizing:border-box;border-radius:3px;box-shadow:inset 0 0 0 1px rgba(255,255,255,0.5)"></div><svg style="left:1101px;top:215.5px" width="24" height="18" viewBox="0 0 24 18"><path d="M4 3.5L12 8.8L20 3.5M4 14L12 8.8L20 14" stroke="#4a4a5a" stroke-width="7" stroke-linecap="round" stroke-linejoin="round" fill="none"/><path d="M4 3.5L12 8.8L20 3.5M4 14L12 8.8L20 14" stroke="#e6e6e6" stroke-width="4.6" stroke-linecap="round" stroke-linejoin="round" fill="none"/></svg><div style="left:478px;top:247px;width:671px;height:153px;background:#fff;box-shadow:inset 2px 2px 0 #6e6e6e"></div><div style="left:480px;top:249px;width:667px;height:149px;background:#000"></div><svg style="left:0;top:0;clip-path:inset(175px 1413px 962px 480px)" width="2560" height="1360"><path d="M547.5 253V365" stroke="#8a9aab" stroke-width="1.2" stroke-dasharray="3 3" shape-rendering="crispEdges"/><path d="M611.5 253V365" stroke="#8a9aab" stroke-width="1.2" stroke-dasharray="3 3" shape-rendering="crispEdges"/><path d="M675.5 253V365" stroke="#8a9aab" stroke-width="1.2" stroke-dasharray="3 3" shape-rendering="crispEdges"/><path d="M739.5 253V365" stroke="#8a9aab" stroke-width="1.2" stroke-dasharray="3 3" shape-rendering="crispEdges"/><path d="M803.5 253V365" stroke="#8a9aab" stroke-width="1.2" stroke-dasharray="3 3" shape-rendering="crispEdges"/><path d="M867.5 253V365" stroke="#8a9aab" stroke-width="1.2" stroke-dasharray="3 3" shape-rendering="crispEdges"/><path d="M931.5 253V365" stroke="#8a9aab" stroke-width="1.2" stroke-dasharray="3 3" shape-rendering="crispEdges"/><path d="M995.5 253V365" stroke="#8a9aab" stroke-width="1.2" stroke-dasharray="3 3" shape-rendering="crispEdges"/><path d="M483 254.5H1061" stroke="#8a9aab" stroke-width="1.2" stroke-dasharray="3 3" shape-rendering="crispEdges"/><path d="M483 325.5H1061" stroke="#8a9aab" stroke-width="1.2" stroke-dasharray="3 3" shape-rendering="crispEdges"/><path d="M482 288.5H1061" stroke="#8a9aab" stroke-width="1.2" shape-rendering="crispEdges"/><path d="M485.5 310.2V311.5M492.5 306.3V314.3M500.5 309.2V312.4M507.5 306.3V317.7M505.0 312.2h5M516.5 287.3V307.0M514.0 306.0h5M524.5 307.0V317.7M522.0 308.3h5M531.5 306.3V320.0M539.5 312.4V320.7M547.5 309.7V321.1M555.5 305.1V317.7M563.5 301.7V319.3M571.5 312.0V319.3M579.5 315.4V320.0M577.0 315.2h5M587.5 319.5V334.4M595.5 330.3V334.8M601.0 325.9h5M611.5 318.8V324.6M619.5 315.4V322.3M627.5 320.0V326.4M625.0 322.0h5M635.5 315.4V323.4M633.0 319.8h5M643.5 322.3V330.3M651.5 312.4V325.2M659.5 302.8V325.2M667.5 314.3V339.0M675.5 344.4V356.5M673.0 344.2h5M683.5 331.4V349.7M691.5 334.4V339.0M699.5 339.4V345.1M707.5 328.0V339.4M715.5 325.7V338.3M723.5 312.0V344.4M731.5 312.0V330.3M739.5 317.2V322.3M747.5 315.4V331.4M755.5 299.4V319.3M763.5 301.0V319.3M771.5 296.0V301.7M779.5 284.1V296.0M787.5 273.6V288.7M785.0 287.8h5M795.5 284.1V298.3M803.5 292.6V298.7M801.0 293.0h5M811.5 290.3V298.3M819.5 287.3V303.3M827.5 295.5V301.7M835.5 292.6V298.7M843.5 287.3V297.1M851.5 294.8V301.7M849.0 296.9h5M859.5 292.6V297.8M867.5 291.9V293.7M865.0 292.3h5M873.0 287.1h5M883.5 276.6V291.9M891.5 282.3V287.3M899.5 282.3V293.2M907.5 287.3V311.5M915.5 315.4V338.3M923.5 311.5V334.4M931.5 301.7V315.4M939.5 303.3V307.9M937.0 303.1h5M947.5 307.4V330.7M955.5 311.5V326.2M963.5 301.7V311.5M971.5 296.4V307.9M979.5 296.4V301.7M987.5 304.7V315.4M995.5 296.4V307.9M1001.0 292.3h5M1011.5 296.4V304.0M1019.5 288.7V299.4M1027.5 284.1V291.9M1035.5 288.7V302.8M1043.5 285.0V296.4" stroke="#00f000" stroke-width="1.3"/><rect x="483.5" y="310.2" width="4" height="1.4" fill="#000" stroke="#00f000" stroke-width="1.3"/><rect x="490.5" y="306.3" width="4" height="8.0" fill="#000" stroke="#00f000" stroke-width="1.3"/><rect x="498.5" y="309.2" width="4" height="3.2" fill="#fff" stroke="#00f000" stroke-width="1.3"/><rect x="529.5" y="306.3" width="4" height="13.7" fill="#fff" stroke="#00f000" stroke-width="1.3"/><rect x="537.5" y="312.4" width="4" height="5.3" fill="#000" stroke="#00f000" stroke-width="1.3"/><rect x="545.5" y="311.5" width="4" height="2.7" fill="#fff" stroke="#00f000" stroke-width="1.3"/><rect x="553.5" y="307.0" width="4" height="10.1" fill="#000" stroke="#00f000" stroke-width="1.3"/><rect x="561.5" y="302.8" width="4" height="8.7" fill="#fff" stroke="#00f000" stroke-width="1.3"/><rect x="569.5" y="315.4" width="4" height="3.9" fill="#fff" stroke="#00f000" stroke-width="1.3"/><rect x="585.5" y="319.5" width="4" height="14.9" fill="#fff" stroke="#00f000" stroke-width="1.3"/><rect x="593.5" y="330.3" width="4" height="1.8" fill="#fff" stroke="#00f000" stroke-width="1.3"/><rect x="609.5" y="320.0" width="4" height="3.4" fill="#000" stroke="#00f000" stroke-width="1.3"/><rect x="617.5" y="316.1" width="4" height="3.9" fill="#fff" stroke="#00f000" stroke-width="1.3"/><rect x="641.5" y="322.3" width="4" height="8.0" fill="#fff" stroke="#00f000" stroke-width="1.3"/><rect x="649.5" y="315.4" width="4" height="9.8" fill="#000" stroke="#00f000" stroke-width="1.3"/><rect x="657.5" y="317.0" width="4" height="3.7" fill="#000" stroke="#00f000" stroke-width="1.3"/><rect x="665.5" y="314.3" width="4" height="24.7" fill="#fff" stroke="#00f000" stroke-width="1.3"/><rect x="681.5" y="334.4" width="4" height="5.0" fill="#000" stroke="#00f000" stroke-width="1.3"/><rect x="689.5" y="334.4" width="4" height="4.6" fill="#000" stroke="#00f000" stroke-width="1.3"/><rect x="697.5" y="339.4" width="4" height="2.3" fill="#fff" stroke="#00f000" stroke-width="1.3"/><rect x="705.5" y="330.3" width="4" height="9.1" fill="#000" stroke="#00f000" stroke-width="1.3"/><rect x="713.5" y="326.8" width="4" height="7.5" fill="#000" stroke="#00f000" stroke-width="1.3"/><rect x="721.5" y="322.3" width="4" height="6.9" fill="#fff" stroke="#00f000" stroke-width="1.3"/><rect x="729.5" y="317.2" width="4" height="8.0" fill="#000" stroke="#00f000" stroke-width="1.3"/><rect x="737.5" y="317.2" width="4" height="5.0" fill="#000" stroke="#00f000" stroke-width="1.3"/><rect x="745.5" y="315.4" width="4" height="5.3" fill="#000" stroke="#00f000" stroke-width="1.3"/><rect x="753.5" y="307.0" width="4" height="4.6" fill="#000" stroke="#00f000" stroke-width="1.3"/><rect x="761.5" y="302.8" width="4" height="9.1" fill="#000" stroke="#00f000" stroke-width="1.3"/><rect x="769.5" y="299.4" width="4" height="2.3" fill="#000" stroke="#00f000" stroke-width="1.3"/><rect x="777.5" y="284.1" width="4" height="11.9" fill="#000" stroke="#00f000" stroke-width="1.3"/><rect x="793.5" y="292.6" width="4" height="5.7" fill="#fff" stroke="#00f000" stroke-width="1.3"/><rect x="809.5" y="292.6" width="4" height="5.7" fill="#fff" stroke="#00f000" stroke-width="1.3"/><rect x="817.5" y="293.2" width="4" height="10.1" fill="#000" stroke="#00f000" stroke-width="1.3"/><rect x="825.5" y="295.5" width="4" height="3.2" fill="#000" stroke="#00f000" stroke-width="1.3"/><rect x="833.5" y="292.6" width="4" height="6.2" fill="#000" stroke="#00f000" stroke-width="1.3"/><rect x="841.5" y="287.3" width="4" height="5.9" fill="#fff" stroke="#00f000" stroke-width="1.3"/><rect x="857.5" y="293.7" width="4" height="4.1" fill="#fff" stroke="#00f000" stroke-width="1.3"/><rect x="881.5" y="282.3" width="4" height="9.6" fill="#fff" stroke="#00f000" stroke-width="1.3"/><rect x="889.5" y="282.3" width="4" height="5.0" fill="#000" stroke="#00f000" stroke-width="1.3"/><rect x="897.5" y="287.3" width="4" height="5.9" fill="#fff" stroke="#00f000" stroke-width="1.3"/><rect x="905.5" y="292.6" width="4" height="19.0" fill="#fff" stroke="#00f000" stroke-width="1.3"/><rect x="913.5" y="315.4" width="4" height="22.9" fill="#fff" stroke="#00f000" stroke-width="1.3"/><rect x="921.5" y="311.5" width="4" height="22.9" fill="#000" stroke="#00f000" stroke-width="1.3"/><rect x="929.5" y="301.7" width="4" height="13.7" fill="#000" stroke="#00f000" stroke-width="1.3"/><rect x="945.5" y="307.4" width="4" height="15.5" fill="#fff" stroke="#00f000" stroke-width="1.3"/><rect x="953.5" y="311.5" width="4" height="14.6" fill="#000" stroke="#00f000" stroke-width="1.3"/><rect x="961.5" y="301.7" width="4" height="6.2" fill="#000" stroke="#00f000" stroke-width="1.3"/><rect x="969.5" y="296.4" width="4" height="7.5" fill="#000" stroke="#00f000" stroke-width="1.3"/><rect x="977.5" y="298.7" width="4" height="2.3" fill="#fff" stroke="#00f000" stroke-width="1.3"/><rect x="985.5" y="304.7" width="4" height="6.9" fill="#fff" stroke="#00f000" stroke-width="1.3"/><rect x="993.5" y="296.4" width="4" height="11.4" fill="#000" stroke="#00f000" stroke-width="1.3"/><rect x="1009.5" y="296.4" width="4" height="6.4" fill="#fff" stroke="#00f000" stroke-width="1.3"/><rect x="1017.5" y="288.7" width="4" height="10.7" fill="#000" stroke="#00f000" stroke-width="1.3"/><rect x="1025.5" y="284.1" width="4" height="7.8" fill="#fff" stroke="#00f000" stroke-width="1.3"/><rect x="1033.5" y="293.2" width="4" height="3.2" fill="#000" stroke="#00f000" stroke-width="1.3"/><rect x="1041.5" y="288.0" width="4" height="8.5" fill="#000" stroke="#00f000" stroke-width="1.3"/><polyline points="482.6,294.8 507.7,304.0 546.6,310.8 587.7,313.1 619.7,316.6 651.7,320.7 690.5,328.4 720.2,328.4 747.7,328.0 770.5,324.6 786.5,315.4 802.5,312.0 820.8,305.1 843.6,298.3 866.5,296.0 875.6,293.2 903.0,293.2 912.2,296.4 925.9,298.7 941.9,300.1 957.9,303.3 987.6,305.1 1012.7,307.0 1026.4,302.8 1042.4,300.1" stroke="#ff0000" stroke-width="1.6" fill="none" shape-rendering="crispEdges"/><rect x="482.5" y="252.5" width="579" height="113" fill="none" stroke="#fff" stroke-width="1"/><path d="M483.5 365V371" stroke="#fff" stroke-width="1"/><path d="M611.5 365V371" stroke="#fff" stroke-width="1"/><path d="M739.5 365V371" stroke="#fff" stroke-width="1"/><path d="M867.5 365V371" stroke="#fff" stroke-width="1"/><path d="M995.5 365V371" stroke="#fff" stroke-width="1"/><path d="M1061 256.5H1066" stroke="#fff" stroke-width="1"/><path d="M1061 326.5H1066" stroke="#fff" stroke-width="1"/><rect x="1063" y="277" width="79" height="22" fill="#fff"/></svg><div style="left:0;top:0;width:2560px;height:1360px;clip-path:inset(175px 1413px 962px 480px)"><span class="t" style="left:1070.00px;top:246.43px;font-size:20.2px;color:#fff;transform:scaleX(0.8900);">109.550</span><span class="t" style="left:1070.00px;top:316.43px;font-size:20.2px;color:#fff;transform:scaleX(0.8900);">109.505</span></div><div style="left:1063px;top:277px;width:79px;height:22px;background:#fff"></div><span class="t" style="left:1071.00px;top:279.03px;font-size:20.2px;color:#000;transform:scaleX(0.8800);">109.528</span><svg style="left:486px;top:262.7px" width="14" height="8" viewBox="0 0 14 8"><path d="M0 0H13L6.5 7Z" fill="#fff"/></svg><span class="t" style="left:509.09px;top:257.23px;font-size:20.2px;color:#fff;transform:scaleX(0.9079);">USDJPY,M1  109.523 109.530 109.523 109.528</span><span class="t" style="left:482.00px;top:370.93px;font-size:20.2px;color:#fff;transform:scaleX(0.9000);">24 Jan 2019</span><span class="t" style="left:610.00px;top:370.93px;font-size:20.2px;color:#fff;transform:scaleX(0.9000);">24 Jan 05:22</span><span class="t" style="left:738.00px;top:370.93px;font-size:20.2px;color:#fff;transform:scaleX(0.9000);">24 Jan 05:39</span><span class="t" style="left:866.00px;top:370.93px;font-size:20.2px;color:#fff;transform:scaleX(0.9000);">24 Jan 05:56</span><span class="t" style="left:994.00px;top:370.93px;font-size:20.2px;color:#fff;transform:scaleX(0.9000);">24 Jan 06:12</span><div style="left:466px;top:413px;width:695px;height:222px;background:linear-gradient(180deg,#c2cfdd 0px,#c8d5e3 40px,#d2dfec 70px,#d5e2ef 100%);border-top-left-radius:6px;border-top-right-radius:6px;box-shadow:inset 1px 1px 0 #fff"></div><svg style="left:481px;top:433px" width="31" height="31" viewBox="0 0 31 31"><rect x="1" y="1" width="24" height="18" fill="#fffdf0" stroke="#4a8cf8" stroke-width="2"/><rect x="1" y="1" width="24" height="18" fill="none" stroke="#5a9a70" stroke-width="2" stroke-dasharray="2 4"/><path d="M5 7V13M3 9L5 7L7 9M9 9H12L14 6L16 12L18 9H21" stroke="#4a8cf8" stroke-width="1.5" fill="none"/><rect x="7" y="12" width="22" height="17" fill="#fff" stroke="#4a8cf8" stroke-width="2"/><rect x="7" y="12" width="22" height="17" fill="none" stroke="#5a9a70" stroke-width="2" stroke-dasharray="2 4"/><path d="M10.5 17L13.5 24L16.5 19L19.5 24L22.5 19L25 23" stroke="#4a8cf8" stroke-width="1.6" fill="none"/></svg><span class="t" style="left:515.23px;top:437.94px;font-size:24.42px;color:#a39d99;transform:scaleX(0.8832);">USDJPY,M5</span><div style="left:939px;top:428px;width:67px;height:39px;background:linear-gradient(180deg,#d2deeb 0,#cfdbe9 40%,#c3d1e0 40%,#c5d3e2 85%,#d3e0ed 100%);border:1px solid #97a6bb;box-sizing:border-box;border-radius:3px;box-shadow:inset 0 0 0 1px rgba(255,255,255,0.5)"></div><div style="left:962px;top:447px;width:21.5px;height:9.5px;background:linear-gradient(180deg,#f0f0f0,#d0d0d0);border:1px solid #4a4a5a;box-sizing:border-box;border-radius:2px"></div><div style="left:1009.5px;top:428px;width:67px;height:39px;background:linear-gradient(180deg,#d2deeb 0,#cfdbe9 40%,#c3d1e0 40%,#c5d3e2 85%,#d3e0ed 100%);border:1px solid #97a6bb;box-sizing:border-box;border-radius:3px;box-shadow:inset 0 0 0 1px rgba(255,255,255,0.5)"></div><div style="left:1032.0px;top:440px;width:21.5px;height:16.5px;background:linear-gradient(180deg,#f4f4f4,#d4d4d4);border:1px solid #4a4a5a;box-sizing:border-box;border-radius:2px"></div><div style="left:1038.0px;top:445.5px;width:9.5px;height:6px;background:#9cb4d2;border:1px solid #4a4a5a;box-sizing:border-box"></div><div style="left:1080px;top:428px;width:67px;height:39px;background:linear-gradient(180deg,#d2deeb 0,#cfdbe9 40%,#c3d1e0 40%,#c5d3e2 85%,#d3e0ed 100%);border:1px solid #97a6bb;box-sizing:border-box;border-radius:3px;box-shadow:inset 0 0 0 1px rgba(255,255,255,0.5)"></div><svg style="left:1101px;top:438.5px" width="24" height="18" viewBox="0 0 24 18"><path d="M4 3.5L12 8.8L20 3.5M4 14L12 8.8L20 14" stroke="#4a4a5a" stroke-width="7" stroke-linecap="round" stroke-linejoin="round" fill="none"/><path d="M4 3.5L12 8.8L20 3.5M4 14L12 8.8L20 14" stroke="#e6e6e6" stroke-width="4.6" stroke-linecap="round" stroke-linejoin="round" fill="none"/></svg><div style="left:478px;top:470px;width:671px;height:153px;background:#fff;box-shadow:inset 2px 2px 0 #6e6e6e"></div><div style="left:480px;top:472px;width:667px;height:149px;background:#000"></div><svg style="left:0;top:0;clip-path:inset(472px 1413px 739px 480px)" width="2560" height="1360"><path d="M547.5 476.5V587.5" stroke="#8a9aab" stroke-width="1.2" stroke-dasharray="3 3" shape-rendering="crispEdges"/><path d="M611.5 476.5V587.5" stroke="#8a9aab" stroke-width="1.2" stroke-dasharray="3 3" shape-rendering="crispEdges"/><path d="M675.5 476.5V587.5" stroke="#8a9aab" stroke-width="1.2" stroke-dasharray="3 3" shape-rendering="crispEdges"/><path d="M739.5 476.5V587.5" stroke="#8a9aab" stroke-width="1.2" stroke-dasharray="3 3" shape-rendering="crispEdges"/><path d="M803.5 476.5V587.5" stroke="#8a9aab" stroke-width="1.2" stroke-dasharray="3 3" shape-rendering="crispEdges"/><path d="M867.5 476.5V587.5" stroke="#8a9aab" stroke-width="1.2" stroke-dasharray="3 3" shape-rendering="crispEdges"/><path d="M931.5 476.5V587.5" stroke="#8a9aab" stroke-width="1.2" stroke-dasharray="3 3" shape-rendering="crispEdges"/><path d="M995.5 476.5V587.5" stroke="#8a9aab" stroke-width="1.2" stroke-dasharray="3 3" shape-rendering="crispEdges"/><path d="M483 488.5H1061" stroke="#8a9aab" stroke-width="1.2" stroke-dasharray="3 3" shape-rendering="crispEdges"/><path d="M483 554.5H1061" stroke="#8a9aab" stroke-width="1.2" stroke-dasharray="3 3" shape-rendering="crispEdges"/><path d="M482 561.5H1061" stroke="#8a9aab" stroke-width="1.2" shape-rendering="crispEdges"/><path d="M484.5 531.3V548.6M483.5 544.1h1M484.5 547.2h1M486.5 533.7V546.6M485.5 545.3h1M486.5 535.2h1M489.5 532.5V541.1M488.5 532.6h1M489.5 534.4h1M491.5 530.6V545.2M490.5 542.3h1M491.5 532.6h1M494.5 530.1V536.7M493.5 531.5h1M494.5 531.5h1M497.5 524.7V540.9M496.5 533.4h1M497.5 535.7h1M499.5 527.3V546.7M498.5 544.6h1M499.5 533.1h1M502.5 535.5V540.5M501.5 537.0h1M502.5 538.6h1M504.5 533.7V544.6M503.5 542.6h1M504.5 538.9h1M507.5 535.8V545.4M506.5 545.2h1M507.5 536.0h1M510.5 532.0V545.3M509.5 536.9h1M510.5 539.7h1M512.5 539.6V546.0M511.5 540.9h1M512.5 544.5h1M515.5 537.1V550.6M514.5 544.2h1M515.5 547.6h1M517.5 537.0V553.9M516.5 537.6h1M517.5 552.9h1M520.5 537.3V548.4M519.5 541.1h1M520.5 547.5h1M523.5 538.4V545.5M522.5 539.0h1M523.5 539.5h1M525.5 536.6V547.5M524.5 547.4h1M525.5 542.4h1M528.5 536.7V546.1M527.5 541.0h1M528.5 540.7h1M530.5 533.1V545.4M529.5 543.4h1M530.5 534.7h1M533.5 529.0V547.1M532.5 530.9h1M533.5 536.9h1M536.5 532.1V545.0M535.5 545.0h1M536.5 543.1h1M538.5 531.0V542.2M537.5 536.4h1M538.5 534.3h1M541.5 533.2V541.4M540.5 541.1h1M541.5 538.3h1M543.5 533.0V539.8M542.5 538.3h1M543.5 538.9h1M546.5 527.8V544.2M545.5 538.7h1M546.5 540.3h1M549.5 528.1V539.8M548.5 537.1h1M549.5 536.2h1M551.5 527.5V544.3M550.5 527.7h1M551.5 536.7h1M554.5 529.1V543.0M553.5 538.1h1M554.5 540.2h1M556.5 530.5V545.5M555.5 535.7h1M556.5 543.2h1M559.5 531.2V548.7M558.5 540.3h1M559.5 540.5h1M562.5 536.1V552.8M561.5 547.7h1M562.5 548.1h1M564.5 539.7V548.2M563.5 545.3h1M564.5 543.3h1M567.5 538.2V553.9M566.5 538.7h1M567.5 540.7h1M569.5 541.1V553.0M568.5 548.6h1M569.5 541.6h1M572.5 546.1V551.5M571.5 547.8h1M572.5 547.1h1M575.5 546.4V552.0M574.5 549.8h1M575.5 549.7h1M577.5 541.6V553.0M576.5 544.8h1M577.5 546.3h1M580.5 543.9V554.8M579.5 550.6h1M580.5 545.0h1M582.5 541.9V553.0M581.5 551.0h1M582.5 546.5h1M585.5 545.0V554.9M584.5 550.9h1M585.5 550.6h1M588.5 544.2V559.6M587.5 557.9h1M588.5 544.2h1M590.5 548.5V558.9M589.5 555.1h1M590.5 557.8h1M593.5 546.9V555.1M592.5 554.9h1M593.5 550.0h1M595.5 543.7V557.9M594.5 557.6h1M595.5 550.7h1M598.5 545.6V556.3M597.5 548.7h1M598.5 550.7h1M601.5 543.1V553.9M600.5 551.5h1M601.5 552.0h1M603.5 538.0V550.1M602.5 547.4h1M603.5 541.0h1M606.5 540.1V548.1M605.5 545.0h1M606.5 543.9h1M608.5 537.8V549.0M607.5 546.3h1M608.5 541.2h1M611.5 537.1V545.6M610.5 541.1h1M611.5 540.2h1M614.5 536.2V544.6M613.5 540.0h1M614.5 543.9h1M616.5 533.6V543.9M615.5 538.0h1M616.5 539.5h1M619.5 532.0V546.1M618.5 537.4h1M619.5 537.5h1M621.5 534.0V542.0M620.5 534.5h1M621.5 540.7h1M624.5 531.8V542.2M623.5 541.2h1M624.5 533.3h1M627.5 531.8V542.3M626.5 533.4h1M627.5 537.9h1M629.5 533.2V539.7M628.5 538.3h1M629.5 537.5h1M632.5 529.8V548.1M631.5 542.6h1M632.5 530.7h1M634.5 532.9V542.7M633.5 539.9h1M634.5 534.2h1M637.5 532.6V546.3M636.5 538.2h1M637.5 534.8h1M640.5 538.5V543.3M639.5 538.8h1M640.5 538.7h1M642.5 538.2V551.6M641.5 544.0h1M642.5 542.4h1M645.5 539.6V551.6M644.5 540.2h1M645.5 547.9h1M647.5 537.7V551.9M646.5 545.6h1M647.5 546.5h1M650.5 538.1V549.4M649.5 543.9h1M650.5 539.6h1M653.5 540.4V549.6M652.5 546.9h1M653.5 546.4h1M655.5 538.7V547.3M654.5 543.8h1M655.5 540.7h1M658.5 535.4V546.5M657.5 535.7h1M658.5 543.4h1M660.5 539.3V548.3M659.5 541.3h1M660.5 540.3h1M663.5 537.1V549.4M662.5 544.8h1M663.5 541.5h1M666.5 539.1V548.0M665.5 542.5h1M666.5 540.3h1M668.5 535.7V549.2M667.5 547.2h1M668.5 542.7h1M671.5 536.9V549.1M670.5 538.0h1M671.5 537.3h1M673.5 538.7V545.6M672.5 543.9h1M673.5 538.7h1M676.5 532.9V548.1M675.5 540.0h1M676.5 534.4h1M679.5 536.2V542.8M678.5 542.0h1M679.5 537.2h1M681.5 534.6V541.2M680.5 536.1h1M681.5 537.8h1M684.5 527.1V544.2M683.5 538.8h1M684.5 538.6h1M686.5 527.3V541.4M685.5 531.4h1M686.5 536.8h1M689.5 534.1V539.1M688.5 535.2h1M689.5 534.5h1M692.5 528.7V542.4M691.5 535.1h1M692.5 532.6h1M694.5 526.3V536.2M693.5 533.0h1M694.5 535.6h1M697.5 525.5V535.5M696.5 526.1h1M697.5 533.3h1M699.5 520.9V528.3M698.5 524.7h1M699.5 523.5h1M702.5 517.7V525.0M701.5 524.6h1M702.5 518.1h1M705.5 513.9V518.7M704.5 515.1h1M705.5 515.8h1M707.5 507.6V513.8M706.5 508.7h1M707.5 510.7h1M710.5 503.4V511.8M709.5 504.3h1M710.5 508.0h1M712.5 500.2V512.4M711.5 500.4h1M712.5 506.8h1M715.5 496.5V508.1M714.5 504.9h1M715.5 507.1h1M718.5 494.9V505.4M717.5 496.2h1M718.5 498.2h1M720.5 488.8V503.2M719.5 490.7h1M720.5 490.0h1M723.5 486.5V492.9M722.5 488.1h1M723.5 486.9h1M725.5 487.4V492.2M724.5 489.2h1M725.5 487.9h1M728.5 488.1V498.1M727.5 497.0h1M728.5 494.6h1M731.5 487.0V499.7M730.5 495.3h1M731.5 499.2h1M733.5 488.7V502.0M732.5 493.8h1M733.5 490.4h1M736.5 494.6V501.8M735.5 496.6h1M736.5 495.1h1M738.5 496.1V503.3M737.5 497.1h1M738.5 498.7h1M741.5 499.1V513.6M740.5 505.3h1M741.5 504.4h1M744.5 506.9V513.5M743.5 511.7h1M744.5 507.5h1M746.5 510.2V518.1M745.5 517.6h1M746.5 516.5h1M749.5 513.8V524.0M748.5 518.2h1M749.5 518.3h1M751.5 510.6V529.0M750.5 521.6h1M751.5 512.5h1M754.5 519.8V529.9M753.5 520.2h1M754.5 525.6h1M757.5 527.1V539.5M756.5 530.5h1M757.5 529.6h1M759.5 533.8V543.1M758.5 537.1h1M759.5 536.1h1M762.5 534.8V551.8M761.5 541.6h1M762.5 537.2h1M764.5 545.1V552.4M763.5 545.9h1M764.5 550.4h1M767.5 549.7V557.8M766.5 555.2h1M767.5 556.7h1M770.5 552.3V562.8M769.5 557.7h1M770.5 558.5h1M772.5 556.0V563.2M771.5 558.3h1M772.5 558.8h1M775.5 551.5V566.4M774.5 563.7h1M775.5 565.3h1M777.5 555.7V569.9M776.5 560.9h1M777.5 564.1h1M780.5 563.1V571.3M779.5 563.8h1M780.5 566.0h1M783.5 563.4V577.0M782.5 576.1h1M783.5 567.1h1M785.5 567.5V574.9M784.5 574.6h1M785.5 574.1h1M788.5 565.7V582.0M787.5 569.1h1M788.5 574.1h1M790.5 571.5V581.3M789.5 575.4h1M790.5 571.5h1M793.5 573.4V582.5M792.5 581.6h1M793.5 578.9h1M796.5 573.1V580.5M795.5 578.4h1M796.5 575.9h1M798.5 572.3V578.8M797.5 576.3h1M798.5 578.1h1M801.5 571.3V583.4M800.5 572.1h1M801.5 578.2h1M803.5 567.1V582.7M802.5 573.8h1M803.5 575.4h1M806.5 569.9V578.2M805.5 577.9h1M806.5 571.4h1M809.5 569.7V577.0M808.5 571.1h1M809.5 571.1h1M811.5 561.4V575.8M810.5 562.3h1M811.5 568.4h1M814.5 556.6V573.2M813.5 567.3h1M814.5 572.0h1M816.5 558.6V573.1M815.5 560.1h1M816.5 561.4h1M819.5 557.5V563.5M818.5 558.1h1M819.5 562.0h1M822.5 549.7V566.7M821.5 565.4h1M822.5 566.0h1M824.5 552.2V562.9M823.5 552.9h1M824.5 554.4h1M827.5 550.2V562.3M826.5 551.2h1M827.5 555.1h1M829.5 549.2V557.6M828.5 552.3h1M829.5 554.9h1M832.5 547.8V563.5M831.5 559.7h1M832.5 559.1h1M835.5 548.4V554.8M834.5 553.1h1M835.5 554.3h1M837.5 545.8V555.1M836.5 553.2h1M837.5 551.2h1M840.5 546.1V556.5M839.5 546.6h1M840.5 550.5h1M842.5 545.3V554.5M841.5 546.2h1M842.5 549.7h1M845.5 542.5V555.1M844.5 543.6h1M845.5 547.0h1M848.5 549.5V555.5M847.5 549.6h1M848.5 551.0h1M850.5 549.6V557.6M849.5 551.4h1M850.5 557.4h1M853.5 547.8V555.6M852.5 555.2h1M853.5 553.1h1M855.5 547.9V554.5M854.5 550.7h1M855.5 551.8h1M858.5 547.7V558.4M857.5 548.0h1M858.5 555.9h1M861.5 542.9V562.0M860.5 550.2h1M861.5 562.0h1M863.5 542.8V557.3M862.5 548.9h1M863.5 556.9h1M866.5 549.3V556.2M865.5 552.5h1M866.5 551.3h1M868.5 550.2V556.1M867.5 550.7h1M868.5 552.5h1M871.5 548.7V558.8M870.5 557.1h1M871.5 558.4h1M874.5 549.0V556.5M873.5 556.0h1M874.5 549.2h1M876.5 547.0V557.2M875.5 550.8h1M876.5 554.9h1M879.5 544.8V558.8M878.5 546.1h1M879.5 546.4h1M881.5 545.2V554.1M880.5 550.4h1M881.5 553.8h1M884.5 544.5V555.1M883.5 552.3h1M884.5 545.9h1M887.5 541.6V553.4M886.5 546.6h1M887.5 547.6h1M889.5 542.6V554.0M888.5 543.0h1M889.5 547.0h1M892.5 547.0V552.3M891.5 550.5h1M892.5 551.9h1M894.5 541.6V555.6M893.5 554.9h1M894.5 555.5h1M897.5 546.2V553.6M896.5 549.5h1M897.5 551.6h1M900.5 544.0V554.5M899.5 549.8h1M900.5 552.7h1M902.5 543.4V552.9M901.5 545.4h1M902.5 547.7h1M905.5 545.6V550.7M904.5 550.6h1M905.5 546.9h1M907.5 543.1V556.9M906.5 554.6h1M907.5 551.7h1M910.5 545.5V555.3M909.5 554.1h1M910.5 549.8h1M913.5 550.1V555.1M912.5 553.8h1M913.5 552.9h1M915.5 552.8V559.6M914.5 558.8h1M915.5 553.1h1M918.5 552.0V559.7M917.5 556.7h1M918.5 553.7h1M920.5 552.9V558.9M919.5 553.4h1M920.5 553.3h1M923.5 551.3V566.7M922.5 552.4h1M923.5 561.2h1M926.5 555.5V562.4M925.5 557.6h1M926.5 555.5h1M928.5 554.0V566.6M927.5 556.0h1M928.5 556.8h1M931.5 554.7V565.8M930.5 558.6h1M931.5 555.6h1M933.5 554.3V565.6M932.5 555.9h1M933.5 559.8h1M936.5 551.9V564.2M935.5 553.7h1M936.5 555.2h1M939.5 553.8V567.0M938.5 562.5h1M939.5 559.3h1M941.5 554.7V565.6M940.5 557.5h1M941.5 558.6h1M944.5 556.0V565.2M943.5 564.8h1M944.5 557.1h1M946.5 556.1V564.2M945.5 562.9h1M946.5 560.8h1M949.5 551.5V567.3M948.5 562.9h1M949.5 555.6h1M952.5 554.1V560.1M951.5 558.4h1M952.5 556.5h1M954.5 553.5V558.4M953.5 558.1h1M954.5 557.4h1M957.5 551.0V559.7M956.5 552.9h1M957.5 551.2h1M959.5 551.4V558.7M958.5 558.2h1M959.5 558.3h1M962.5 551.0V557.4M961.5 554.4h1M962.5 551.5h1M965.5 546.2V556.1M964.5 551.7h1M965.5 555.9h1M967.5 544.9V554.0M966.5 548.3h1M967.5 550.6h1M970.5 542.5V552.7M969.5 544.0h1M970.5 543.1h1M972.5 544.2V556.2M971.5 551.1h1M972.5 550.2h1M975.5 549.6V561.5M974.5 558.6h1M975.5 556.8h1M978.5 554.3V563.3M977.5 555.2h1M978.5 563.3h1M980.5 556.4V562.4M979.5 560.1h1M980.5 561.5h1M983.5 553.5V564.8M982.5 556.4h1M983.5 557.5h1M985.5 553.3V565.8M984.5 557.5h1M985.5 560.7h1M988.5 554.8V568.9M987.5 558.8h1M988.5 559.5h1M991.5 561.4V567.9M990.5 567.8h1M991.5 562.3h1M993.5 563.5V575.5M992.5 574.8h1M993.5 567.2h1M996.5 561.2V574.9M995.5 570.5h1M996.5 565.9h1M998.5 565.2V577.5M997.5 575.0h1M998.5 567.2h1M1001.5 568.9V575.8M1000.5 574.7h1M1001.5 569.2h1M1004.5 566.2V573.9M1003.5 573.7h1M1004.5 572.7h1M1006.5 562.0V576.4M1005.5 571.3h1M1006.5 565.3h1M1009.5 562.8V569.1M1008.5 567.5h1M1009.5 566.0h1M1011.5 559.9V569.1M1010.5 565.4h1M1011.5 566.9h1M1014.5 557.4V566.7M1013.5 565.2h1M1014.5 558.8h1M1017.5 559.2V564.7M1016.5 561.7h1M1017.5 561.6h1M1019.5 555.4V564.0M1018.5 562.2h1M1019.5 562.0h1M1022.5 551.6V567.7M1021.5 565.3h1M1022.5 561.5h1M1024.5 555.2V571.1M1023.5 556.3h1M1024.5 560.6h1M1027.5 556.1V562.9M1026.5 556.1h1M1027.5 559.0h1M1030.5 554.7V565.6M1029.5 565.1h1M1030.5 564.4h1M1032.5 556.5V563.8M1031.5 559.5h1M1032.5 556.6h1M1035.5 553.2V569.8M1034.5 564.6h1M1035.5 565.9h1M1037.5 555.5V571.9M1036.5 566.3h1M1037.5 566.3h1M1040.5 559.4V570.5M1039.5 563.1h1M1040.5 562.2h1M1043.5 558.5V570.7M1042.5 568.7h1M1043.5 563.0h1M1045.5 560.6V570.2M1044.5 563.4h1M1045.5 560.7h1M1048.5 559.5V566.0M1047.5 563.1h1M1048.5 565.7h1M1050.5 558.1V567.1M1049.5 559.5h1M1050.5 558.2h1M1053.5 556.2V569.2M1052.5 566.7h1M1053.5 562.1h1M1056.5 555.7V566.2M1055.5 560.2h1M1056.5 560.3h1" stroke="#00f000" stroke-width="1.25" fill="none"/><rect x="482.5" y="476.0" width="579" height="112.0" fill="none" stroke="#fff" stroke-width="1"/><path d="M483.5 587.5V593.5" stroke="#fff" stroke-width="1"/><path d="M611.5 587.5V593.5" stroke="#fff" stroke-width="1"/><path d="M739.5 587.5V593.5" stroke="#fff" stroke-width="1"/><path d="M867.5 587.5V593.5" stroke="#fff" stroke-width="1"/><path d="M995.5 587.5V593.5" stroke="#fff" stroke-width="1"/><path d="M1061 489.5H1066" stroke="#fff" stroke-width="1"/><path d="M1061 556.5H1066" stroke="#fff" stroke-width="1"/><rect x="1063" y="550" width="79" height="22" fill="#fff"/></svg><div style="left:0;top:0;width:2560px;height:1360px;clip-path:inset(472px 1413px 739px 480px)"><span class="t" style="left:1070.00px;top:479.43px;font-size:20.2px;color:#fff;transform:scaleX(0.8900);">109.960</span><span class="t" style="left:1070.00px;top:546.43px;font-size:20.2px;color:#fff;transform:scaleX(0.8900);">109.575</span></div><div style="left:1063px;top:550px;width:79px;height:22px;background:#fff"></div><span class="t" style="left:1071.00px;top:552.03px;font-size:20.2px;color:#000;transform:scaleX(0.8800);">109.528</span><svg style="left:486px;top:486.4px" width="14" height="8" viewBox="0 0 14 8"><path d="M0 0H13L6.5 7Z" fill="#fff"/></svg><span class="t" style="left:509.09px;top:480.93px;font-size:20.2px;color:#fff;transform:scaleX(0.9079);">USDJPY,M5  109.521 109.531 109.519 109.528</span><span class="t" style="left:482.00px;top:593.23px;font-size:20.2px;color:#fff;transform:scaleX(0.9000);">23 Jan 2019</span><span class="t" style="left:610.00px;top:593.23px;font-size:20.2px;color:#fff;transform:scaleX(0.9000);">23 Jan 11:45</span><span class="t" style="left:738.00px;top:593.23px;font-size:20.2px;color:#fff;transform:scaleX(0.9000);">23 Jan 17:05</span><span class="t" style="left:866.00px;top:593.23px;font-size:20.2px;color:#fff;transform:scaleX(0.9000);">23 Jan 22:25</span><span class="t" style="left:994.00px;top:593.23px;font-size:20.2px;color:#fff;transform:scaleX(0.9000);">24 Jan 03:45</span><div style="left:466px;top:636px;width:695px;height:222px;background:linear-gradient(180deg,#c2cfdd 0px,#c8d5e3 40px,#d2dfec 70px,#d5e2ef 100%);border-top-left-radius:6px;border-top-right-radius:6px;box-shadow:inset 1px 1px 0 #fff"></div><svg style="left:481px;top:656px" width="31" height="31" viewBox="0 0 31 31"><rect x="1" y="1" width="24" height="18" fill="#fffdf0" stroke="#4a8cf8" stroke-width="2"/><rect x="1" y="1" width="24" height="18" fill="none" stroke="#5a9a70" stroke-width="2" stroke-dasharray="2 4"/><path d="M5 7V13M3 9L5 7L7 9M9 9H12L14 6L16 12L18 9H21" stroke="#4a8cf8" stroke-width="1.5" fill="none"/><rect x="7" y="12" width="22" height="17" fill="#fff" stroke="#4a8cf8" stroke-width="2"/><rect x="7" y="12" width="22" height="17" fill="none" stroke="#5a9a70" stroke-width="2" stroke-dasharray="2 4"/><path d="M10.5 17L13.5 24L16.5 19L19.5 24L22.5 19L25 23" stroke="#4a8cf8" stroke-width="1.6" fill="none"/></svg><span class="t" style="left:515.22px;top:660.94px;font-size:24.42px;color:#a39d99;transform:scaleX(0.8917);">USDJPY,M15</span><div style="left:939px;top:651px;width:67px;height:39px;background:linear-gradient(180deg,#d2deeb 0,#cfdbe9 40%,#c3d1e0 40%,#c5d3e2 85%,#d3e0ed 100%);border:1px solid #97a6bb;box-sizing:border-box;border-radius:3px;box-shadow:inset 0 0 0 1px rgba(255,255,255,0.5)"></div><div style="left:962px;top:670px;width:21.5px;height:9.5px;background:linear-gradient(180deg,#f0f0f0,#d0d0d0);border:1px solid #4a4a5a;box-sizing:border-box;border-radius:2px"></div><div style="left:1009.5px;top:651px;width:67px;height:39px;background:linear-gradient(180deg,#d2deeb 0,#cfdbe9 40%,#c3d1e0 40%,#c5d3e2 85%,#d3e0ed 100%);border:1px solid #97a6bb;box-sizing:border-box;border-radius:3px;box-shadow:inset 0 0 0 1px rgba(255,255,255,0.5)"></div><div style="left:1032.0px;top:663px;width:21.5px;height:16.5px;background:linear-gradient(180deg,#f4f4f4,#d4d4d4);border:1px solid #4a4a5a;box-sizing:border-box;border-radius:2px"></div><div style="left:1038.0px;top:668.5px;width:9.5px;height:6px;background:#9cb4d2;border:1px solid #4a4a5a;box-sizing:border-box"></div><div style="left:1080px;top:651px;width:67px;height:39px;background:linear-gradient(180deg,#d2deeb 0,#cfdbe9 40%,#c3d1e0 40%,#c5d3e2 85%,#d3e0ed 100%);border:1px solid #97a6bb;box-sizing:border-box;border-radius:3px;box-shadow:inset 0 0 0 1px rgba(255,255,255,0.5)"></div><svg style="left:1101px;top:661.5px" width="24" height="18" viewBox="0 0 24 18"><path d="M4 3.5L12 8.8L20 3.5M4 14L12 8.8L20 14" stroke="#4a4a5a" stroke-width="7" stroke-linecap="round" stroke-linejoin="round" fill="none"/><path d="M4 3.5L12 8.8L20 3.5M4 14L12 8.8L20 14" stroke="#e6e6e6" stroke-width="4.6" stroke-linecap="round" stroke-linejoin="round" fill="none"/></svg><div style="left:478px;top:693px;width:671px;height:153px;background:#fff;box-shadow:inset 2px 2px 0 #6e6e6e"></div><div style="left:480px;top:695px;width:667px;height:149px;background:#000"></div><svg style="left:0;top:0;clip-path:inset(695px 1413px 516px 480px)" width="2560" height="1360"><path d="M547.5 699V811" stroke="#8a9aab" stroke-width="1.2" stroke-dasharray="3 3" shape-rendering="crispEdges"/><path d="M611.5 699V811" stroke="#8a9aab" stroke-width="1.2" stroke-dasharray="3 3" shape-rendering="crispEdges"/><path d="M675.5 699V811" stroke="#8a9aab" stroke-width="1.2" stroke-dasharray="3 3" shape-rendering="crispEdges"/><path d="M739.5 699V811" stroke="#8a9aab" stroke-width="1.2" stroke-dasharray="3 3" shape-rendering="crispEdges"/><path d="M803.5 699V811" stroke="#8a9aab" stroke-width="1.2" stroke-dasharray="3 3" shape-rendering="crispEdges"/><path d="M867.5 699V811" stroke="#8a9aab" stroke-width="1.2" stroke-dasharray="3 3" shape-rendering="crispEdges"/><path d="M931.5 699V811" stroke="#8a9aab" stroke-width="1.2" stroke-dasharray="3 3" shape-rendering="crispEdges"/><path d="M995.5 699V811" stroke="#8a9aab" stroke-width="1.2" stroke-dasharray="3 3" shape-rendering="crispEdges"/><path d="M483 712.5H1061" stroke="#8a9aab" stroke-width="1.2" stroke-dasharray="3 3" shape-rendering="crispEdges"/><path d="M483 776.5H1061" stroke="#8a9aab" stroke-width="1.2" stroke-dasharray="3 3" shape-rendering="crispEdges"/><path d="M482 762.5H1061" stroke="#8a9aab" stroke-width="1.2" shape-rendering="crispEdges"/><path d="M484.5 754.1V760.5M483.5 757.5h1M484.5 756.4h1M486.5 751.5V760.1M485.5 752.1h1M486.5 752.3h1M489.5 750.7V761.2M488.5 757.3h1M489.5 760.6h1M491.5 754.2V764.1M490.5 762.7h1M491.5 757.1h1M494.5 754.5V761.6M493.5 755.8h1M494.5 758.6h1M497.5 755.5V763.5M496.5 756.0h1M497.5 757.1h1M499.5 754.9V764.5M498.5 759.2h1M499.5 757.8h1M502.5 754.8V766.7M501.5 761.1h1M502.5 765.3h1M504.5 760.1V769.0M503.5 763.8h1M504.5 766.9h1M507.5 755.2V764.7M506.5 762.5h1M507.5 760.6h1M510.5 752.9V762.8M509.5 758.7h1M510.5 757.4h1M512.5 748.1V764.4M511.5 749.1h1M512.5 759.6h1M515.5 748.9V765.5M514.5 755.3h1M515.5 760.0h1M517.5 749.6V757.0M516.5 750.0h1M517.5 755.3h1M520.5 743.9V752.9M519.5 744.6h1M520.5 747.9h1M523.5 736.7V755.5M522.5 741.9h1M523.5 744.5h1M525.5 741.2V756.6M524.5 743.9h1M525.5 744.8h1M528.5 743.0V753.0M527.5 743.1h1M528.5 747.2h1M530.5 741.2V755.6M529.5 748.6h1M530.5 750.1h1M533.5 745.1V752.9M532.5 751.9h1M533.5 751.3h1M536.5 745.4V754.1M535.5 745.9h1M536.5 746.0h1M538.5 749.1V754.7M537.5 749.1h1M538.5 750.0h1M541.5 745.6V754.6M540.5 751.1h1M541.5 746.9h1M543.5 748.5V755.8M542.5 754.7h1M543.5 755.8h1M546.5 746.5V753.7M545.5 749.0h1M546.5 748.4h1M549.5 744.3V751.5M548.5 748.1h1M549.5 745.4h1M551.5 745.1V752.2M550.5 751.2h1M551.5 750.0h1M554.5 741.9V751.1M553.5 746.8h1M554.5 749.1h1M556.5 739.7V750.2M555.5 748.7h1M556.5 748.2h1M559.5 737.9V749.9M558.5 742.2h1M559.5 738.3h1M562.5 741.2V749.6M561.5 749.2h1M562.5 745.0h1M564.5 737.6V755.5M563.5 741.6h1M564.5 741.7h1M567.5 741.6V750.9M566.5 749.4h1M567.5 746.0h1M569.5 737.8V750.3M568.5 749.2h1M569.5 747.6h1M572.5 740.0V750.4M571.5 743.5h1M572.5 748.4h1M575.5 740.8V751.9M574.5 748.8h1M575.5 742.7h1M577.5 744.2V753.4M576.5 745.5h1M577.5 751.8h1M580.5 740.5V752.4M579.5 742.0h1M580.5 740.6h1M582.5 740.2V754.8M581.5 746.6h1M582.5 753.0h1M585.5 746.3V752.7M584.5 747.8h1M585.5 750.0h1M588.5 743.2V753.3M587.5 746.7h1M588.5 747.8h1M590.5 738.3V755.3M589.5 746.8h1M590.5 747.3h1M593.5 746.3V751.2M592.5 746.3h1M593.5 750.2h1M595.5 742.9V754.6M594.5 746.7h1M595.5 749.0h1M598.5 740.2V752.1M597.5 743.2h1M598.5 743.5h1M601.5 741.0V753.3M600.5 752.2h1M601.5 746.5h1M603.5 741.8V753.5M602.5 747.1h1M603.5 748.1h1M606.5 737.7V756.6M605.5 755.5h1M606.5 742.6h1M608.5 741.4V756.7M607.5 743.3h1M608.5 748.2h1M611.5 741.9V749.2M610.5 747.6h1M611.5 748.4h1M614.5 740.0V752.0M613.5 750.6h1M614.5 751.6h1M616.5 736.7V751.5M615.5 751.3h1M616.5 749.0h1M619.5 741.8V751.3M618.5 743.6h1M619.5 744.8h1M621.5 745.1V750.8M620.5 745.2h1M621.5 747.0h1M624.5 743.7V754.8M623.5 752.5h1M624.5 754.5h1M627.5 748.5V756.2M626.5 750.6h1M627.5 749.5h1M629.5 744.3V759.9M628.5 746.7h1M629.5 758.6h1M632.5 744.6V753.0M631.5 750.4h1M632.5 748.2h1M634.5 737.8V755.9M633.5 739.3h1M634.5 753.3h1M637.5 737.9V751.3M636.5 745.3h1M637.5 750.3h1M640.5 741.3V747.6M639.5 742.0h1M640.5 742.3h1M642.5 742.1V748.6M641.5 747.1h1M642.5 744.0h1M645.5 743.7V749.2M644.5 745.0h1M645.5 743.7h1M647.5 742.5V752.3M646.5 751.7h1M647.5 743.6h1M650.5 744.1V755.5M649.5 748.6h1M650.5 749.9h1M653.5 742.7V759.6M652.5 754.6h1M653.5 753.4h1M655.5 750.8V757.0M654.5 751.2h1M655.5 755.4h1M658.5 750.7V757.8M657.5 756.9h1M658.5 755.5h1M660.5 754.5V761.8M659.5 755.6h1M660.5 757.7h1M663.5 753.8V772.6M662.5 758.4h1M663.5 772.0h1M666.5 761.2V768.2M665.5 764.5h1M666.5 764.7h1M668.5 764.7V772.3M667.5 765.4h1M668.5 767.7h1M671.5 767.5V772.2M670.5 770.2h1M671.5 770.0h1M673.5 762.0V777.4M672.5 768.0h1M673.5 767.0h1M676.5 768.9V777.1M675.5 769.2h1M676.5 775.7h1M679.5 768.0V782.8M678.5 770.1h1M679.5 775.8h1M681.5 768.4V786.3M680.5 778.9h1M681.5 784.4h1M684.5 772.6V781.6M683.5 773.8h1M684.5 775.9h1M686.5 768.3V783.7M685.5 778.0h1M686.5 778.8h1M689.5 770.7V777.5M688.5 774.1h1M689.5 774.4h1M692.5 771.2V777.4M691.5 771.7h1M692.5 772.8h1M694.5 768.5V778.4M693.5 773.4h1M694.5 772.3h1M697.5 766.9V781.6M696.5 776.4h1M697.5 768.1h1M699.5 769.5V777.9M698.5 774.3h1M699.5 769.6h1M702.5 766.4V776.0M701.5 772.9h1M702.5 769.2h1M705.5 766.1V774.8M704.5 773.9h1M705.5 767.8h1M707.5 762.6V774.7M706.5 772.5h1M707.5 774.3h1M710.5 765.6V774.6M709.5 767.5h1M710.5 770.8h1M712.5 766.5V777.9M711.5 775.8h1M712.5 772.3h1M715.5 760.1V773.7M714.5 766.7h1M715.5 760.5h1M718.5 765.1V774.8M717.5 766.5h1M718.5 768.5h1M720.5 759.7V772.6M719.5 770.6h1M720.5 761.3h1M723.5 763.4V777.4M722.5 768.6h1M723.5 768.9h1M725.5 765.6V776.3M724.5 768.5h1M725.5 766.1h1M728.5 763.3V778.9M727.5 767.2h1M728.5 767.4h1M731.5 766.4V775.0M730.5 774.0h1M731.5 773.4h1M733.5 764.3V782.4M732.5 777.3h1M733.5 765.2h1M736.5 767.4V779.3M735.5 770.8h1M736.5 768.0h1M738.5 771.3V777.7M737.5 773.2h1M738.5 776.0h1M741.5 772.5V780.7M740.5 777.0h1M741.5 775.7h1M744.5 772.6V780.2M743.5 776.4h1M744.5 774.3h1M746.5 770.5V783.8M745.5 773.0h1M746.5 771.7h1M749.5 775.3V780.5M748.5 778.3h1M749.5 779.9h1M751.5 772.5V782.2M750.5 776.2h1M751.5 775.8h1M754.5 775.9V784.7M753.5 780.3h1M754.5 781.5h1M757.5 774.8V781.1M756.5 777.3h1M757.5 777.6h1M759.5 777.3V791.1M758.5 777.8h1M759.5 787.1h1M762.5 782.3V791.1M761.5 785.7h1M762.5 790.4h1M764.5 782.8V798.5M763.5 784.5h1M764.5 785.2h1M767.5 783.8V799.8M766.5 794.1h1M767.5 796.0h1M770.5 786.0V796.5M769.5 788.5h1M770.5 795.7h1M772.5 791.3V797.9M771.5 795.5h1M772.5 795.9h1M775.5 794.2V800.8M774.5 796.8h1M775.5 795.7h1M777.5 795.9V801.1M776.5 800.9h1M777.5 799.2h1M780.5 797.6V806.0M779.5 805.6h1M780.5 803.5h1M783.5 800.8V807.0M782.5 803.4h1M783.5 802.4h1M785.5 796.4V807.2M784.5 800.1h1M785.5 800.9h1M788.5 795.3V804.6M787.5 800.0h1M788.5 797.2h1M790.5 794.8V803.8M789.5 796.8h1M790.5 801.7h1M793.5 791.7V805.2M792.5 794.7h1M793.5 797.3h1M796.5 787.2V799.8M795.5 789.9h1M796.5 799.5h1M798.5 789.9V794.7M797.5 794.2h1M798.5 794.1h1M801.5 782.5V800.1M800.5 785.8h1M801.5 799.0h1M803.5 781.7V787.8M802.5 784.0h1M803.5 783.7h1M806.5 776.0V780.8M805.5 780.6h1M806.5 776.6h1M809.5 771.7V780.1M808.5 778.6h1M809.5 775.3h1M811.5 772.7V784.5M810.5 775.0h1M811.5 777.0h1M814.5 775.8V782.2M813.5 780.7h1M814.5 776.1h1M816.5 780.0V786.7M815.5 785.0h1M816.5 786.0h1M819.5 777.7V788.1M818.5 780.5h1M819.5 785.2h1M822.5 777.3V784.9M821.5 784.3h1M822.5 782.1h1M824.5 777.4V782.6M823.5 782.4h1M824.5 782.4h1M827.5 776.1V784.0M826.5 783.4h1M827.5 777.5h1M829.5 769.5V785.9M828.5 779.5h1M829.5 774.9h1M832.5 772.9V781.7M831.5 774.6h1M832.5 779.5h1M835.5 766.0V771.2M834.5 767.7h1M835.5 771.1h1M837.5 757.3V769.0M836.5 758.4h1M837.5 763.2h1M840.5 753.4V762.2M839.5 758.9h1M840.5 759.4h1M842.5 747.7V760.9M841.5 758.8h1M842.5 751.6h1M845.5 745.3V754.5M844.5 747.6h1M845.5 747.6h1M848.5 738.3V752.5M847.5 743.9h1M848.5 752.4h1M850.5 734.8V744.3M849.5 744.2h1M850.5 735.8h1M853.5 726.2V744.6M852.5 726.9h1M853.5 731.6h1M855.5 731.6V740.9M854.5 740.2h1M855.5 735.1h1M858.5 730.9V741.3M857.5 740.8h1M858.5 732.0h1M861.5 736.0V746.1M860.5 737.4h1M861.5 738.1h1M863.5 739.2V750.4M862.5 739.3h1M863.5 742.9h1M866.5 741.5V747.6M865.5 746.3h1M866.5 744.8h1M868.5 743.2V749.7M867.5 747.3h1M868.5 743.8h1M871.5 741.5V752.7M870.5 744.9h1M871.5 752.2h1M874.5 742.4V752.9M873.5 751.5h1M874.5 752.8h1M876.5 746.4V753.8M875.5 746.4h1M876.5 753.1h1M879.5 739.6V755.4M878.5 746.9h1M879.5 742.2h1M881.5 741.0V754.8M880.5 742.2h1M881.5 749.6h1M884.5 742.4V750.7M883.5 746.7h1M884.5 750.1h1M887.5 739.3V753.3M886.5 742.1h1M887.5 741.1h1M889.5 743.0V755.9M888.5 754.9h1M889.5 748.0h1M892.5 748.5V760.5M891.5 757.9h1M892.5 751.2h1M894.5 751.3V765.8M893.5 754.5h1M894.5 757.1h1M897.5 751.8V759.0M896.5 757.0h1M897.5 758.3h1M900.5 749.8V760.4M899.5 758.7h1M900.5 751.1h1M902.5 745.1V756.1M901.5 749.7h1M902.5 751.5h1M905.5 742.6V754.5M904.5 742.9h1M905.5 750.0h1M907.5 741.5V751.3M906.5 746.0h1M907.5 743.2h1M910.5 742.4V748.0M909.5 742.9h1M910.5 744.9h1M913.5 745.6V750.9M912.5 749.5h1M913.5 749.8h1M915.5 746.9V752.8M914.5 752.5h1M915.5 747.7h1M918.5 741.7V761.2M917.5 745.5h1M918.5 760.8h1M920.5 749.0V765.1M919.5 761.7h1M920.5 764.0h1M923.5 749.0V757.9M922.5 757.0h1M923.5 751.4h1M926.5 744.1V752.4M925.5 745.8h1M926.5 746.3h1M928.5 744.9V751.0M927.5 745.9h1M928.5 750.6h1M931.5 737.0V751.6M930.5 738.7h1M931.5 744.7h1M933.5 735.4V746.3M932.5 741.7h1M933.5 745.0h1M936.5 725.3V741.4M935.5 738.1h1M936.5 729.6h1M939.5 716.2V728.4M938.5 721.6h1M939.5 718.4h1M941.5 714.8V721.1M940.5 718.8h1M941.5 721.0h1M944.5 712.5V721.6M943.5 712.8h1M944.5 713.9h1M946.5 715.2V726.9M945.5 716.7h1M946.5 717.8h1M949.5 725.0V729.3M948.5 725.5h1M949.5 726.6h1M952.5 729.0V739.8M951.5 735.7h1M952.5 734.1h1M954.5 733.1V744.8M953.5 734.2h1M954.5 740.5h1M957.5 740.5V752.4M956.5 740.7h1M957.5 748.2h1M959.5 751.7V761.3M958.5 760.7h1M959.5 758.7h1M962.5 756.9V769.4M961.5 762.0h1M962.5 759.9h1M965.5 765.0V776.3M964.5 775.7h1M965.5 766.6h1M967.5 762.4V775.0M966.5 772.7h1M967.5 764.6h1M970.5 760.5V769.0M969.5 767.1h1M970.5 766.5h1M972.5 756.8V772.4M971.5 768.3h1M972.5 763.8h1M975.5 758.2V763.0M974.5 759.8h1M975.5 761.8h1M978.5 752.5V766.8M977.5 760.4h1M978.5 758.7h1M980.5 751.8V762.4M979.5 762.1h1M980.5 754.1h1M983.5 754.9V759.5M982.5 758.3h1M983.5 759.2h1M985.5 752.3V762.1M984.5 754.7h1M985.5 761.2h1M988.5 746.4V762.5M987.5 754.0h1M988.5 759.9h1M991.5 746.5V761.9M990.5 755.3h1M991.5 751.2h1M993.5 747.1V759.1M992.5 748.8h1M993.5 747.4h1M996.5 748.2V760.4M995.5 748.6h1M996.5 748.7h1M998.5 745.3V759.6M997.5 746.2h1M998.5 753.7h1M1001.5 744.3V762.4M1000.5 745.5h1M1001.5 760.0h1M1004.5 747.3V758.5M1003.5 748.6h1M1004.5 747.7h1M1006.5 747.8V764.4M1005.5 758.3h1M1006.5 752.5h1M1009.5 756.7V763.2M1008.5 758.8h1M1009.5 759.5h1M1011.5 754.5V762.8M1010.5 757.5h1M1011.5 757.1h1M1014.5 754.0V766.9M1013.5 754.4h1M1014.5 759.3h1M1017.5 753.1V767.0M1016.5 760.6h1M1017.5 756.1h1M1019.5 756.3V762.8M1018.5 756.3h1M1019.5 757.6h1M1022.5 750.0V762.6M1021.5 756.2h1M1022.5 760.0h1M1024.5 749.4V760.9M1023.5 752.4h1M1024.5 760.2h1M1027.5 751.3V759.7M1026.5 752.2h1M1027.5 756.7h1M1030.5 749.3V765.8M1029.5 759.7h1M1030.5 755.2h1M1032.5 756.8V766.5M1031.5 765.4h1M1032.5 757.1h1M1035.5 759.5V769.2M1034.5 763.2h1M1035.5 768.1h1M1037.5 759.5V771.1M1036.5 768.2h1M1037.5 767.0h1M1040.5 759.1V768.1M1039.5 765.1h1M1040.5 765.8h1M1043.5 759.0V770.6M1042.5 760.4h1M1043.5 764.3h1M1045.5 759.9V766.3M1044.5 764.4h1M1045.5 765.3h1M1048.5 761.3V767.3M1047.5 764.5h1M1048.5 762.3h1M1050.5 758.2V767.9M1049.5 759.2h1M1050.5 767.5h1M1053.5 755.9V768.5M1052.5 765.1h1M1053.5 761.4h1M1056.5 755.7V764.5M1055.5 759.1h1M1056.5 756.0h1" stroke="#00f000" stroke-width="1.25" fill="none"/><rect x="482.5" y="698.5" width="579" height="113" fill="none" stroke="#fff" stroke-width="1"/><path d="M483.5 811V817" stroke="#fff" stroke-width="1"/><path d="M611.5 811V817" stroke="#fff" stroke-width="1"/><path d="M739.5 811V817" stroke="#fff" stroke-width="1"/><path d="M867.5 811V817" stroke="#fff" stroke-width="1"/><path d="M995.5 811V817" stroke="#fff" stroke-width="1"/><path d="M1061 713.5H1066" stroke="#fff" stroke-width="1"/><path d="M1061 777.5H1066" stroke="#fff" stroke-width="1"/><rect x="1063" y="751" width="79" height="23" fill="#fff"/></svg><div style="left:0;top:0;width:2560px;height:1360px;clip-path:inset(695px 1413px 516px 480px)"><span class="t" style="left:1070.00px;top:703.13px;font-size:20.2px;color:#fff;transform:scaleX(0.8900);">109.950</span><span class="t" style="left:1070.00px;top:767.43px;font-size:20.2px;color:#fff;transform:scaleX(0.8900);">109.405</span></div><div style="left:1063px;top:751px;width:79px;height:23px;background:#fff"></div><span class="t" style="left:1071.00px;top:753.03px;font-size:20.2px;color:#000;transform:scaleX(0.8800);">109.528</span><svg style="left:486px;top:709.4px" width="14" height="8" viewBox="0 0 14 8"><path d="M0 0H13L6.5 7Z" fill="#fff"/></svg><span class="t" style="left:509.09px;top:703.93px;font-size:20.2px;color:#fff;transform:scaleX(0.9073);">USDJPY,M15  109.521 109.531 109.519 109.528</span><span class="t" style="left:482.00px;top:816.23px;font-size:20.2px;color:#fff;transform:scaleX(0.9000);">21 Jan 2019</span><span class="t" style="left:610.00px;top:816.23px;font-size:20.2px;color:#fff;transform:scaleX(0.9000);">21 Jan 22:45</span><span class="t" style="left:738.00px;top:816.23px;font-size:20.2px;color:#fff;transform:scaleX(0.9000);">22 Jan 14:45</span><span class="t" style="left:866.00px;top:816.23px;font-size:20.2px;color:#fff;transform:scaleX(0.9000);">23 Jan 06:45</span><span class="t" style="left:994.00px;top:816.23px;font-size:20.2px;color:#fff;transform:scaleX(0.9000);">23 Jan 22:45</span><div style="left:1163px;top:190px;width:695px;height:166px;background:linear-gradient(180deg,#c2cfdd 0px,#c8d5e3 40px,#d2dfec 70px,#d5e2ef 100%);border-top-left-radius:6px;border-top-right-radius:6px;box-shadow:inset 1px 1px 0 #fff"></div><svg style="left:1178px;top:210px" width="31" height="31" viewBox="0 0 31 31"><rect x="1" y="1" width="24" height="18" fill="#fffdf0" stroke="#4a8cf8" stroke-width="2"/><rect x="1" y="1" width="24" height="18" fill="none" stroke="#5a9a70" stroke-width="2" stroke-dasharray="2 4"/><path d="M5 7V13M3 9L5 7L7 9M9 9H12L14 6L16 12L18 9H21" stroke="#4a8cf8" stroke-width="1.5" fill="none"/><rect x="7" y="12" width="22" height="17" fill="#fff" stroke="#4a8cf8" stroke-width="2"/><rect x="7" y="12" width="22" height="17" fill="none" stroke="#5a9a70" stroke-width="2" stroke-dasharray="2 4"/><path d="M10.5 17L13.5 24L16.5 19L19.5 24L22.5 19L25 23" stroke="#4a8cf8" stroke-width="1.6" fill="none"/></svg><span class="t" style="left:1212.22px;top:214.94px;font-size:24.42px;color:#a39d99;transform:scaleX(0.8924);">USDJPY,M30</span><div style="left:1636px;top:205px;width:67px;height:39px;background:linear-gradient(180deg,#d2deeb 0,#cfdbe9 40%,#c3d1e0 40%,#c5d3e2 85%,#d3e0ed 100%);border:1px solid #97a6bb;box-sizing:border-box;border-radius:3px;box-shadow:inset 0 0 0 1px rgba(255,255,255,0.5)"></div><div style="left:1659px;top:224px;width:21.5px;height:9.5px;background:linear-gradient(180deg,#f0f0f0,#d0d0d0);border:1px solid #4a4a5a;box-sizing:border-box;border-radius:2px"></div><div style="left:1706.5px;top:205px;width:67px;height:39px;background:linear-gradient(180deg,#d2deeb 0,#cfdbe9 40%,#c3d1e0 40%,#c5d3e2 85%,#d3e0ed 100%);border:1px solid #97a6bb;box-sizing:border-box;border-radius:3px;box-shadow:inset 0 0 0 1px rgba(255,255,255,0.5)"></div><div style="left:1729.0px;top:217px;width:21.5px;height:16.5px;background:linear-gradient(180deg,#f4f4f4,#d4d4d4);border:1px solid #4a4a5a;box-sizing:border-box;border-radius:2px"></div><div style="left:1735.0px;top:222.5px;width:9.5px;height:6px;background:#9cb4d2;border:1px solid #4a4a5a;box-sizing:border-box"></div><div style="left:1777px;top:205px;width:67px;height:39px;background:linear-gradient(180deg,#d2deeb 0,#cfdbe9 40%,#c3d1e0 40%,#c5d3e2 85%,#d3e0ed 100%);border:1px solid #97a6bb;box-sizing:border-box;border-radius:3px;box-shadow:inset 0 0 0 1px rgba(255,255,255,0.5)"></div><svg style="left:1798px;top:215.5px" width="24" height="18" viewBox="0 0 24 18"><path d="M4 3.5L12 8.8L20 3.5M4 14L12 8.8L20 14" stroke="#4a4a5a" stroke-width="7" stroke-linecap="round" stroke-linejoin="round" fill="none"/><path d="M4 3.5L12 8.8L20 3.5M4 14L12 8.8L20 14" stroke="#e6e6e6" stroke-width="4.6" stroke-linecap="round" stroke-linejoin="round" fill="none"/></svg><div style="left:1175px;top:247px;width:671px;height:97px;background:#fff;box-shadow:inset 2px 2px 0 #6e6e6e"></div><div style="left:1177px;top:249px;width:667px;height:93px;background:#000"></div><svg style="left:0;top:0;clip-path:inset(249px 716px 1018px 1177px)" width="2560" height="1360"><path d="M1244.5 253V309" stroke="#8a9aab" stroke-width="1.2" stroke-dasharray="3 3" shape-rendering="crispEdges"/><path d="M1308.5 253V309" stroke="#8a9aab" stroke-width="1.2" stroke-dasharray="3 3" shape-rendering="crispEdges"/><path d="M1372.5 253V309" stroke="#8a9aab" stroke-width="1.2" stroke-dasharray="3 3" shape-rendering="crispEdges"/><path d="M1436.5 253V309" stroke="#8a9aab" stroke-width="1.2" stroke-dasharray="3 3" shape-rendering="crispEdges"/><path d="M1500.5 253V309" stroke="#8a9aab" stroke-width="1.2" stroke-dasharray="3 3" shape-rendering="crispEdges"/><path d="M1564.5 253V309" stroke="#8a9aab" stroke-width="1.2" stroke-dasharray="3 3" shape-rendering="crispEdges"/><path d="M1628.5 253V309" stroke="#8a9aab" stroke-width="1.2" stroke-dasharray="3 3" shape-rendering="crispEdges"/><path d="M1692.5 253V309" stroke="#8a9aab" stroke-width="1.2" stroke-dasharray="3 3" shape-rendering="crispEdges"/><path d="M1180 272.5H1758" stroke="#8a9aab" stroke-width="1.2" stroke-dasharray="3 3" shape-rendering="crispEdges"/><path d="M1179 272.5H1758" stroke="#8a9aab" stroke-width="1.2" shape-rendering="crispEdges"/><path d="M1179 288.5H1758" stroke="#00c000" stroke-width="1" stroke-dasharray="9 4 2 4"/><path d="M1180.5 301.6V308.0M1179.5 302.8h1M1180.5 303.1h1M1182.5 302.5V305.8M1181.5 304.3h1M1182.5 303.2h1M1185.5 299.9V305.1M1184.5 300.0h1M1185.5 301.4h1M1187.5 297.7V305.7M1186.5 304.3h1M1187.5 303.6h1M1190.5 296.7V303.0M1189.5 299.8h1M1190.5 301.5h1M1193.5 300.0V304.0M1192.5 301.2h1M1193.5 300.4h1M1195.5 297.4V305.1M1194.5 301.6h1M1195.5 303.1h1M1198.5 298.1V302.8M1197.5 299.0h1M1198.5 300.5h1M1200.5 295.0V299.5M1199.5 295.5h1M1200.5 297.2h1M1203.5 293.3V296.2M1202.5 293.5h1M1203.5 295.2h1M1206.5 290.6V295.9M1205.5 290.8h1M1206.5 291.3h1M1208.5 292.8V298.6M1207.5 295.2h1M1208.5 297.8h1M1211.5 291.7V298.0M1210.5 294.1h1M1211.5 296.2h1M1213.5 292.1V299.8M1212.5 293.7h1M1213.5 296.9h1M1216.5 291.1V296.4M1215.5 292.9h1M1216.5 292.6h1M1219.5 292.0V296.0M1218.5 292.2h1M1219.5 294.6h1M1221.5 290.4V294.3M1220.5 291.7h1M1221.5 290.7h1M1224.5 289.5V294.9M1223.5 291.0h1M1224.5 292.7h1M1226.5 287.4V292.4M1225.5 287.4h1M1226.5 289.1h1M1229.5 285.6V292.4M1228.5 290.2h1M1229.5 287.6h1M1232.5 286.2V292.2M1231.5 287.8h1M1232.5 290.3h1M1234.5 285.6V289.2M1233.5 286.5h1M1234.5 286.6h1M1237.5 286.3V289.4M1236.5 286.5h1M1237.5 288.6h1M1239.5 285.4V287.8M1238.5 286.6h1M1239.5 286.7h1M1242.5 284.7V287.8M1241.5 287.4h1M1242.5 285.0h1M1245.5 283.5V286.6M1244.5 283.6h1M1245.5 283.9h1M1247.5 283.5V289.5M1246.5 283.8h1M1247.5 286.7h1M1250.5 282.2V288.9M1249.5 285.8h1M1250.5 283.1h1M1252.5 284.1V287.7M1251.5 285.9h1M1252.5 285.5h1M1255.5 281.1V287.0M1254.5 285.0h1M1255.5 286.6h1M1258.5 282.6V289.3M1257.5 286.7h1M1258.5 288.2h1M1260.5 286.4V289.0M1259.5 288.5h1M1260.5 287.8h1M1263.5 288.3V293.4M1262.5 288.5h1M1263.5 288.4h1M1265.5 288.9V292.5M1264.5 292.5h1M1265.5 291.8h1M1268.5 288.4V294.8M1267.5 290.3h1M1268.5 293.3h1M1271.5 288.4V293.0M1270.5 289.6h1M1271.5 292.0h1M1273.5 287.3V289.0M1272.5 287.9h1M1273.5 288.9h1M1276.5 284.8V291.8M1275.5 291.8h1M1276.5 290.2h1M1278.5 284.7V288.8M1277.5 286.9h1M1278.5 285.5h1M1281.5 286.6V290.8M1280.5 286.8h1M1281.5 290.1h1M1284.5 289.3V292.1M1283.5 291.8h1M1284.5 290.7h1M1286.5 287.8V293.9M1285.5 291.8h1M1286.5 290.4h1M1289.5 292.8V295.4M1288.5 295.0h1M1289.5 293.2h1M1291.5 294.0V299.0M1290.5 296.4h1M1291.5 297.0h1M1294.5 292.0V295.8M1293.5 294.9h1M1294.5 293.3h1M1297.5 292.8V295.6M1296.5 295.4h1M1297.5 294.9h1M1299.5 289.7V298.3M1298.5 296.9h1M1299.5 295.6h1M1302.5 291.3V296.4M1301.5 292.0h1M1302.5 295.0h1M1304.5 293.7V296.7M1303.5 295.2h1M1304.5 296.0h1M1307.5 293.8V298.5M1306.5 296.5h1M1307.5 295.7h1M1310.5 294.1V299.1M1309.5 297.5h1M1310.5 298.7h1M1312.5 293.6V297.0M1311.5 295.0h1M1312.5 296.4h1M1315.5 290.9V297.4M1314.5 294.6h1M1315.5 295.8h1M1317.5 291.5V294.2M1316.5 292.3h1M1317.5 294.1h1M1320.5 287.1V292.4M1319.5 292.3h1M1320.5 287.6h1M1323.5 286.1V288.5M1322.5 286.6h1M1323.5 286.5h1M1325.5 284.0V288.1M1324.5 286.3h1M1325.5 287.6h1M1328.5 282.0V288.8M1327.5 287.8h1M1328.5 283.0h1M1330.5 284.3V289.7M1329.5 288.5h1M1330.5 285.2h1M1333.5 284.3V288.1M1332.5 285.4h1M1333.5 286.5h1M1336.5 282.5V289.1M1335.5 283.2h1M1336.5 286.8h1M1338.5 279.7V286.6M1337.5 285.2h1M1338.5 281.2h1M1341.5 278.2V280.6M1340.5 279.9h1M1341.5 279.6h1M1343.5 277.2V281.9M1342.5 278.9h1M1343.5 277.2h1M1346.5 278.8V281.6M1345.5 281.1h1M1346.5 280.1h1M1349.5 281.2V283.7M1348.5 281.9h1M1349.5 281.6h1M1351.5 279.3V282.0M1350.5 281.3h1M1351.5 279.6h1M1354.5 277.0V283.1M1353.5 281.9h1M1354.5 280.7h1M1356.5 276.0V281.4M1355.5 279.4h1M1356.5 278.0h1M1359.5 275.4V280.8M1358.5 276.9h1M1359.5 278.4h1M1362.5 272.7V279.3M1361.5 277.9h1M1362.5 275.6h1M1364.5 272.2V279.2M1363.5 278.4h1M1364.5 276.1h1M1367.5 274.3V277.2M1366.5 275.8h1M1367.5 276.9h1M1369.5 274.1V278.4M1368.5 277.8h1M1369.5 274.8h1M1372.5 273.1V276.8M1371.5 274.6h1M1372.5 276.1h1M1375.5 274.1V278.1M1374.5 276.9h1M1375.5 275.9h1M1377.5 272.9V278.7M1376.5 273.7h1M1377.5 278.5h1M1380.5 273.3V280.2M1379.5 279.8h1M1380.5 276.8h1M1382.5 272.6V275.8M1381.5 273.4h1M1382.5 273.0h1M1385.5 270.1V277.7M1384.5 270.4h1M1385.5 276.4h1M1388.5 268.3V275.1M1387.5 269.3h1M1388.5 273.7h1M1390.5 269.4V271.8M1389.5 271.1h1M1390.5 271.7h1M1393.5 269.2V273.6M1392.5 271.3h1M1393.5 269.7h1M1395.5 271.6V274.0M1394.5 273.0h1M1395.5 271.8h1M1398.5 270.7V277.3M1397.5 275.1h1M1398.5 277.2h1M1401.5 271.4V276.3M1400.5 272.1h1M1401.5 272.6h1M1403.5 270.5V277.2M1402.5 271.0h1M1403.5 275.4h1M1406.5 272.8V275.9M1405.5 273.8h1M1406.5 274.2h1M1408.5 272.8V275.4M1407.5 274.5h1M1408.5 274.9h1M1411.5 272.2V277.2M1410.5 273.6h1M1411.5 274.9h1M1414.5 269.8V274.5M1413.5 272.5h1M1414.5 271.8h1M1416.5 271.4V275.8M1415.5 272.0h1M1416.5 275.2h1M1419.5 269.9V272.7M1418.5 270.9h1M1419.5 271.6h1M1421.5 266.1V271.9M1420.5 271.2h1M1421.5 268.8h1M1424.5 265.8V271.6M1423.5 267.7h1M1424.5 270.0h1M1427.5 264.0V272.1M1426.5 271.1h1M1427.5 268.9h1M1429.5 266.3V269.0M1428.5 267.8h1M1429.5 268.1h1M1432.5 266.2V271.4M1431.5 267.2h1M1432.5 269.2h1M1434.5 265.4V268.3M1433.5 266.8h1M1434.5 267.4h1M1437.5 265.6V268.2M1436.5 265.9h1M1437.5 267.2h1M1440.5 265.6V268.1M1439.5 266.0h1M1440.5 266.4h1M1442.5 264.2V270.4M1441.5 269.9h1M1442.5 265.0h1M1445.5 266.0V268.5M1444.5 268.0h1M1445.5 267.7h1M1447.5 266.0V271.6M1446.5 266.5h1M1447.5 271.6h1M1450.5 264.6V268.4M1449.5 267.7h1M1450.5 267.8h1M1453.5 264.8V267.2M1452.5 267.1h1M1453.5 267.1h1M1455.5 265.0V269.2M1454.5 268.7h1M1455.5 266.8h1M1458.5 263.8V267.7M1457.5 266.4h1M1458.5 267.2h1M1460.5 264.0V268.7M1459.5 265.6h1M1460.5 264.8h1M1463.5 264.3V268.8M1462.5 266.6h1M1463.5 264.8h1M1466.5 263.1V269.6M1465.5 265.7h1M1466.5 265.5h1M1468.5 266.3V269.6M1467.5 267.9h1M1468.5 266.5h1M1471.5 264.7V271.5M1470.5 268.9h1M1471.5 268.9h1M1473.5 265.5V270.5M1472.5 270.2h1M1473.5 266.0h1M1476.5 264.1V272.6M1475.5 271.4h1M1476.5 264.9h1M1479.5 266.3V269.6M1478.5 267.9h1M1479.5 268.0h1M1481.5 266.5V272.1M1480.5 269.0h1M1481.5 268.6h1M1484.5 265.5V270.4M1483.5 267.3h1M1484.5 266.9h1M1486.5 265.0V270.0M1485.5 266.6h1M1486.5 265.5h1M1489.5 265.1V269.4M1488.5 266.2h1M1489.5 266.3h1M1492.5 265.4V267.7M1491.5 266.5h1M1492.5 266.2h1M1494.5 266.8V268.7M1493.5 267.2h1M1494.5 266.9h1M1497.5 266.8V269.0M1496.5 267.3h1M1497.5 268.4h1M1499.5 265.5V272.0M1498.5 268.3h1M1499.5 266.0h1M1502.5 267.0V272.6M1501.5 269.5h1M1502.5 268.7h1M1505.5 266.0V271.4M1504.5 268.6h1M1505.5 269.2h1M1507.5 267.2V274.0M1506.5 269.7h1M1507.5 272.4h1M1510.5 266.8V272.8M1509.5 269.3h1M1510.5 268.7h1M1512.5 268.5V272.2M1511.5 268.8h1M1512.5 269.3h1M1515.5 265.1V272.7M1514.5 267.3h1M1515.5 268.4h1M1518.5 267.1V270.8M1517.5 268.9h1M1518.5 269.0h1M1520.5 267.0V274.1M1519.5 273.2h1M1520.5 273.5h1M1523.5 269.0V273.1M1522.5 270.0h1M1523.5 272.2h1M1525.5 266.5V270.4M1524.5 270.3h1M1525.5 266.5h1M1528.5 264.9V272.5M1527.5 267.1h1M1528.5 267.2h1M1531.5 264.5V269.9M1530.5 265.1h1M1531.5 266.6h1M1533.5 265.0V272.3M1532.5 271.4h1M1533.5 268.8h1M1536.5 269.1V272.1M1535.5 270.7h1M1536.5 269.2h1M1538.5 267.0V271.1M1537.5 268.5h1M1538.5 267.9h1M1541.5 269.4V272.1M1540.5 269.5h1M1541.5 271.8h1M1544.5 266.6V274.7M1543.5 270.4h1M1544.5 268.7h1M1546.5 267.4V273.5M1545.5 272.9h1M1546.5 268.0h1M1549.5 267.6V273.7M1548.5 273.3h1M1549.5 267.7h1M1551.5 269.9V273.4M1550.5 271.3h1M1551.5 271.1h1M1554.5 270.8V274.0M1553.5 272.3h1M1554.5 274.0h1M1557.5 271.7V274.5M1556.5 272.6h1M1557.5 274.5h1M1559.5 272.8V275.9M1558.5 274.4h1M1559.5 275.8h1M1562.5 271.9V275.6M1561.5 274.7h1M1562.5 273.7h1M1564.5 271.9V276.7M1563.5 274.7h1M1564.5 275.3h1M1567.5 272.3V275.0M1566.5 274.8h1M1567.5 274.2h1M1570.5 270.6V276.5M1569.5 272.1h1M1570.5 275.5h1M1572.5 271.2V277.3M1571.5 271.5h1M1572.5 272.5h1M1575.5 272.2V277.2M1574.5 275.5h1M1575.5 273.7h1M1577.5 273.0V275.8M1576.5 275.5h1M1577.5 274.5h1M1580.5 272.3V278.0M1579.5 274.1h1M1580.5 273.1h1M1583.5 271.6V278.5M1582.5 273.8h1M1583.5 272.8h1M1585.5 273.0V278.5M1584.5 275.2h1M1585.5 275.1h1M1588.5 272.1V279.0M1587.5 278.2h1M1588.5 278.4h1M1590.5 272.5V278.4M1589.5 275.4h1M1590.5 278.3h1M1593.5 273.2V276.3M1592.5 274.7h1M1593.5 274.6h1M1596.5 273.3V275.6M1595.5 274.5h1M1596.5 275.6h1M1598.5 273.1V276.1M1597.5 274.9h1M1598.5 273.6h1M1601.5 272.4V280.2M1600.5 274.1h1M1601.5 273.8h1M1603.5 272.9V277.7M1602.5 275.6h1M1603.5 275.3h1M1606.5 275.5V278.6M1605.5 275.7h1M1606.5 278.1h1M1609.5 274.3V279.8M1608.5 274.4h1M1609.5 278.7h1M1611.5 276.7V283.0M1610.5 277.0h1M1611.5 278.2h1M1614.5 276.9V282.8M1613.5 282.5h1M1614.5 281.1h1M1616.5 276.7V282.9M1615.5 278.0h1M1616.5 280.1h1M1619.5 278.3V283.7M1618.5 283.7h1M1619.5 282.1h1M1622.5 278.2V284.9M1621.5 284.1h1M1622.5 278.9h1M1624.5 277.6V281.0M1623.5 280.8h1M1624.5 278.1h1M1627.5 273.9V278.9M1626.5 278.5h1M1627.5 275.6h1M1629.5 274.2V279.8M1628.5 277.8h1M1629.5 276.2h1M1632.5 275.7V280.0M1631.5 278.1h1M1632.5 275.7h1M1635.5 272.3V277.3M1634.5 273.5h1M1635.5 273.7h1M1637.5 271.8V275.2M1636.5 273.0h1M1637.5 273.8h1M1640.5 269.5V278.5M1639.5 276.6h1M1640.5 272.7h1M1642.5 273.3V276.0M1641.5 273.7h1M1642.5 275.0h1M1645.5 272.6V275.8M1644.5 274.2h1M1645.5 273.5h1M1648.5 268.6V271.9M1647.5 269.6h1M1648.5 271.3h1M1650.5 267.1V269.4M1649.5 268.2h1M1650.5 268.4h1M1653.5 264.1V268.9M1652.5 265.3h1M1653.5 268.1h1M1655.5 264.2V267.2M1654.5 267.1h1M1655.5 265.0h1M1658.5 266.2V268.6M1657.5 267.8h1M1658.5 266.6h1M1661.5 264.3V268.9M1660.5 266.7h1M1661.5 268.8h1M1663.5 264.7V268.3M1662.5 267.5h1M1663.5 265.2h1M1666.5 264.8V269.3M1665.5 268.9h1M1666.5 265.6h1M1668.5 265.5V270.0M1667.5 268.5h1M1668.5 268.9h1M1671.5 263.7V268.7M1670.5 266.8h1M1671.5 268.1h1M1674.5 266.3V269.9M1673.5 268.4h1M1674.5 267.4h1M1676.5 266.6V272.1M1675.5 269.1h1M1676.5 270.2h1M1679.5 263.9V271.9M1678.5 265.8h1M1679.5 270.7h1M1681.5 264.9V270.1M1680.5 266.3h1M1681.5 265.7h1M1684.5 265.4V268.2M1683.5 266.0h1M1684.5 266.5h1M1687.5 264.0V270.0M1686.5 264.2h1M1687.5 265.2h1M1689.5 264.3V270.6M1688.5 266.5h1M1689.5 268.4h1M1692.5 265.0V268.0M1691.5 266.8h1M1692.5 266.6h1M1694.5 260.2V262.8M1693.5 262.2h1M1694.5 262.5h1M1697.5 256.2V259.1M1696.5 256.8h1M1697.5 257.0h1M1700.5 259.1V263.5M1699.5 261.3h1M1700.5 262.4h1M1702.5 262.4V267.0M1701.5 262.6h1M1702.5 265.2h1M1705.5 268.7V274.2M1704.5 269.0h1M1705.5 273.9h1M1707.5 271.5V276.5M1706.5 272.0h1M1707.5 275.1h1M1710.5 269.8V275.5M1709.5 271.4h1M1710.5 271.7h1M1713.5 269.8V274.8M1712.5 270.1h1M1713.5 271.2h1M1715.5 269.1V275.8M1714.5 273.7h1M1715.5 270.3h1M1718.5 271.7V273.8M1717.5 273.6h1M1718.5 272.0h1M1720.5 269.7V272.1M1719.5 270.6h1M1720.5 270.9h1M1723.5 266.4V271.9M1722.5 270.1h1M1723.5 269.6h1M1726.5 268.6V274.3M1725.5 273.4h1M1726.5 272.4h1M1728.5 267.1V274.6M1727.5 270.7h1M1728.5 273.3h1M1731.5 268.5V271.1M1730.5 270.2h1M1731.5 270.2h1M1733.5 266.8V271.4M1732.5 267.8h1M1733.5 269.5h1M1736.5 265.6V273.4M1735.5 271.5h1M1736.5 269.6h1M1739.5 267.6V272.2M1738.5 268.2h1M1739.5 269.6h1M1741.5 267.9V273.4M1740.5 268.5h1M1741.5 273.2h1M1744.5 268.3V274.4M1743.5 270.0h1M1744.5 270.5h1M1746.5 267.0V272.5M1745.5 269.7h1M1746.5 271.5h1M1749.5 269.8V275.5M1748.5 271.1h1M1749.5 271.4h1M1752.5 270.1V274.8M1751.5 270.2h1M1752.5 274.7h1" stroke="#00f000" stroke-width="1.25" fill="none"/><rect x="1179.5" y="252.5" width="579" height="57" fill="none" stroke="#fff" stroke-width="1"/><path d="M1180.5 309V315" stroke="#fff" stroke-width="1"/><path d="M1308.5 309V315" stroke="#fff" stroke-width="1"/><path d="M1436.5 309V315" stroke="#fff" stroke-width="1"/><path d="M1564.5 309V315" stroke="#fff" stroke-width="1"/><path d="M1692.5 309V315" stroke="#fff" stroke-width="1"/><rect x="1760" y="260" width="79" height="22" fill="#fff"/></svg><div style="left:0;top:0;width:2560px;height:1360px;clip-path:inset(249px 716px 1018px 1177px)"></div><div style="left:1760px;top:260px;width:79px;height:22px;background:#fff"></div><span class="t" style="left:1768.00px;top:262.03px;font-size:20.2px;color:#000;transform:scaleX(0.8800);">109.528</span><svg style="left:1183px;top:261.5px" width="14" height="8" viewBox="0 0 14 8"><path d="M0 0H13L6.5 7Z" fill="#fff"/></svg><span class="t" style="left:1205.59px;top:256.03px;font-size:20.2px;color:#fff;transform:scaleX(0.9102);">USDJPY,M30  109.529 109.532 109.497 109.528</span><span class="t" style="left:1192.80px;top:267.53px;font-size:20.2px;color:#fff;transform:scaleX(0.9167);">#172556833 sell 0.10</span><span class="t" style="left:1179.00px;top:315.53px;font-size:20.2px;color:#fff;transform:scaleX(0.9000);">16 Jan 2019</span><span class="t" style="left:1307.00px;top:315.53px;font-size:20.2px;color:#fff;transform:scaleX(0.9000);">17 Jan 15:00</span><span class="t" style="left:1435.00px;top:315.53px;font-size:20.2px;color:#fff;transform:scaleX(0.9000);">18 Jan 23:00</span><span class="t" style="left:1563.00px;top:315.53px;font-size:20.2px;color:#fff;transform:scaleX(0.9000);">22 Jan 07:00</span><span class="t" style="left:1691.00px;top:315.53px;font-size:20.2px;color:#fff;transform:scaleX(0.9000);">23 Jan 15:00</span><div style="left:1163px;top:358px;width:695px;height:165px;background:linear-gradient(180deg,#c2cfdd 0px,#c8d5e3 40px,#d2dfec 70px,#d5e2ef 100%);border-top-left-radius:6px;border-top-right-radius:6px;box-shadow:inset 1px 1px 0 #fff"></div><svg style="left:1178px;top:378px" width="31" height="31" viewBox="0 0 31 31"><rect x="1" y="1" width="24" height="18" fill="#fffdf0" stroke="#4a8cf8" stroke-width="2"/><rect x="1" y="1" width="24" height="18" fill="none" stroke="#5a9a70" stroke-width="2" stroke-dasharray="2 4"/><path d="M5 7V13M3 9L5 7L7 9M9 9H12L14 6L16 12L18 9H21" stroke="#4a8cf8" stroke-width="1.5" fill="none"/><rect x="7" y="12" width="22" height="17" fill="#fff" stroke="#4a8cf8" stroke-width="2"/><rect x="7" y="12" width="22" height="17" fill="none" stroke="#5a9a70" stroke-width="2" stroke-dasharray="2 4"/><path d="M10.5 17L13.5 24L16.5 19L19.5 24L22.5 19L25 23" stroke="#4a8cf8" stroke-width="1.6" fill="none"/></svg><span class="t" style="left:1212.27px;top:382.94px;font-size:24.42px;color:#a39d99;transform:scaleX(0.8648);">USDJPY,H1</span><div style="left:1636px;top:373px;width:67px;height:39px;background:linear-gradient(180deg,#d2deeb 0,#cfdbe9 40%,#c3d1e0 40%,#c5d3e2 85%,#d3e0ed 100%);border:1px solid #97a6bb;box-sizing:border-box;border-radius:3px;box-shadow:inset 0 0 0 1px rgba(255,255,255,0.5)"></div><div style="left:1659px;top:392px;width:21.5px;height:9.5px;background:linear-gradient(180deg,#f0f0f0,#d0d0d0);border:1px solid #4a4a5a;box-sizing:border-box;border-radius:2px"></div><div style="left:1706.5px;top:373px;width:67px;height:39px;background:linear-gradient(180deg,#d2deeb 0,#cfdbe9 40%,#c3d1e0 40%,#c5d3e2 85%,#d3e0ed 100%);border:1px solid #97a6bb;box-sizing:border-box;border-radius:3px;box-shadow:inset 0 0 0 1px rgba(255,255,255,0.5)"></div><div style="left:1729.0px;top:385px;width:21.5px;height:16.5px;background:linear-gradient(180deg,#f4f4f4,#d4d4d4);border:1px solid #4a4a5a;box-sizing:border-box;border-radius:2px"></div><div style="left:1735.0px;top:390.5px;width:9.5px;height:6px;background:#9cb4d2;border:1px solid #4a4a5a;box-sizing:border-box"></div><div style="left:1777px;top:373px;width:67px;height:39px;background:linear-gradient(180deg,#d2deeb 0,#cfdbe9 40%,#c3d1e0 40%,#c5d3e2 85%,#d3e0ed 100%);border:1px solid #97a6bb;box-sizing:border-box;border-radius:3px;box-shadow:inset 0 0 0 1px rgba(255,255,255,0.5)"></div><svg style="left:1798px;top:383.5px" width="24" height="18" viewBox="0 0 24 18"><path d="M4 3.5L12 8.8L20 3.5M4 14L12 8.8L20 14" stroke="#4a4a5a" stroke-width="7" stroke-linecap="round" stroke-linejoin="round" fill="none"/><path d="M4 3.5L12 8.8L20 3.5M4 14L12 8.8L20 14" stroke="#e6e6e6" stroke-width="4.6" stroke-linecap="round" stroke-linejoin="round" fill="none"/></svg><div style="left:1175px;top:415px;width:671px;height:96px;background:#fff;box-shadow:inset 2px 2px 0 #6e6e6e"></div><div style="left:1177px;top:417px;width:667px;height:92px;background:#000"></div><svg style="left:0;top:0;clip-path:inset(417px 716px 851px 1177px)" width="2560" height="1360"><path d="M1244.5 420.5V476" stroke="#8a9aab" stroke-width="1.2" stroke-dasharray="3 3" shape-rendering="crispEdges"/><path d="M1308.5 420.5V476" stroke="#8a9aab" stroke-width="1.2" stroke-dasharray="3 3" shape-rendering="crispEdges"/><path d="M1372.5 420.5V476" stroke="#8a9aab" stroke-width="1.2" stroke-dasharray="3 3" shape-rendering="crispEdges"/><path d="M1436.5 420.5V476" stroke="#8a9aab" stroke-width="1.2" stroke-dasharray="3 3" shape-rendering="crispEdges"/><path d="M1500.5 420.5V476" stroke="#8a9aab" stroke-width="1.2" stroke-dasharray="3 3" shape-rendering="crispEdges"/><path d="M1564.5 420.5V476" stroke="#8a9aab" stroke-width="1.2" stroke-dasharray="3 3" shape-rendering="crispEdges"/><path d="M1628.5 420.5V476" stroke="#8a9aab" stroke-width="1.2" stroke-dasharray="3 3" shape-rendering="crispEdges"/><path d="M1692.5 420.5V476" stroke="#8a9aab" stroke-width="1.2" stroke-dasharray="3 3" shape-rendering="crispEdges"/><path d="M1180 441.5H1758" stroke="#8a9aab" stroke-width="1.2" stroke-dasharray="3 3" shape-rendering="crispEdges"/><path d="M1179 435.5H1758" stroke="#8a9aab" stroke-width="1.2" shape-rendering="crispEdges"/><path d="M1179 446.5H1758" stroke="#00c000" stroke-width="1" stroke-dasharray="9 4 2 4"/><path d="M1180.5 444.6V451.3M1179.5 445.8h1M1180.5 446.1h1M1182.5 446.8V450.1M1181.5 448.6h1M1182.5 447.5h1M1185.5 445.5V450.7M1184.5 445.6h1M1185.5 447.0h1M1187.5 444.6V452.6M1186.5 451.2h1M1187.5 450.5h1M1190.5 445.2V451.5M1189.5 448.3h1M1190.5 450.0h1M1193.5 450.4V454.5M1192.5 451.7h1M1193.5 450.9h1M1195.5 450.4V458.2M1194.5 454.7h1M1195.5 456.2h1M1198.5 454.0V458.7M1197.5 455.0h1M1198.5 456.5h1M1200.5 451.7V456.3M1199.5 452.3h1M1200.5 454.0h1M1203.5 450.9V453.8M1202.5 451.1h1M1203.5 452.8h1M1206.5 448.4V453.8M1205.5 448.7h1M1206.5 449.2h1M1208.5 450.1V455.9M1207.5 452.5h1M1208.5 455.1h1M1211.5 448.7V455.0M1210.5 451.1h1M1211.5 453.2h1M1213.5 449.0V456.8M1212.5 450.7h1M1213.5 453.8h1M1216.5 447.9V453.2M1215.5 449.7h1M1216.5 449.5h1M1219.5 448.7V452.8M1218.5 449.0h1M1219.5 451.4h1M1221.5 447.2V451.1M1220.5 448.5h1M1221.5 447.6h1M1224.5 446.8V452.2M1223.5 448.3h1M1224.5 450.0h1M1226.5 445.3V450.2M1225.5 445.3h1M1226.5 446.9h1M1229.5 443.9V450.8M1228.5 448.5h1M1229.5 446.0h1M1232.5 445.1V451.1M1231.5 446.7h1M1232.5 449.2h1M1234.5 445.4V449.0M1233.5 446.3h1M1234.5 446.5h1M1237.5 447.1V450.3M1236.5 447.4h1M1237.5 449.5h1M1239.5 447.3V449.7M1238.5 448.5h1M1239.5 448.6h1M1242.5 447.6V450.7M1241.5 450.3h1M1242.5 448.0h1M1245.5 451.6V454.6M1244.5 451.7h1M1245.5 452.0h1M1247.5 457.5V463.5M1246.5 457.8h1M1247.5 460.7h1M1250.5 456.9V463.6M1249.5 460.6h1M1250.5 457.8h1M1252.5 459.6V463.2M1251.5 461.3h1M1252.5 460.9h1M1255.5 457.2V463.2M1254.5 461.2h1M1255.5 462.8h1M1258.5 459.0V465.7M1257.5 463.1h1M1258.5 464.6h1M1260.5 463.0V465.6M1259.5 465.1h1M1260.5 464.4h1M1263.5 465.2V470.3M1262.5 465.5h1M1263.5 465.3h1M1265.5 466.0V469.7M1264.5 469.7h1M1265.5 469.0h1M1268.5 466.4V472.9M1267.5 468.3h1M1268.5 471.4h1M1271.5 467.7V472.3M1270.5 469.0h1M1271.5 471.3h1M1273.5 467.9V469.7M1272.5 468.5h1M1273.5 469.6h1M1276.5 466.8V473.8M1275.5 473.8h1M1276.5 472.1h1M1278.5 467.1V471.3M1277.5 469.4h1M1278.5 467.9h1M1281.5 466.5V470.7M1280.5 466.6h1M1281.5 469.9h1M1284.5 466.6V469.4M1283.5 469.1h1M1284.5 468.0h1M1286.5 462.4V468.6M1285.5 466.4h1M1286.5 465.1h1M1289.5 464.9V467.4M1288.5 467.0h1M1289.5 465.3h1M1291.5 464.6V469.7M1290.5 467.1h1M1291.5 467.7h1M1294.5 461.5V465.3M1293.5 464.4h1M1294.5 462.8h1M1297.5 461.2V464.0M1296.5 463.7h1M1297.5 463.2h1M1299.5 457.0V465.6M1298.5 464.1h1M1299.5 462.8h1M1302.5 457.4V462.5M1301.5 458.0h1M1302.5 461.1h1M1304.5 458.6V461.6M1303.5 460.2h1M1304.5 461.0h1M1307.5 457.6V462.3M1306.5 460.3h1M1307.5 459.5h1M1310.5 459.0V464.0M1309.5 462.3h1M1310.5 463.5h1M1312.5 460.1V463.5M1311.5 461.5h1M1312.5 462.9h1M1315.5 459.1V465.6M1314.5 462.8h1M1315.5 464.0h1M1317.5 461.4V464.1M1316.5 462.2h1M1317.5 464.0h1M1320.5 458.7V464.0M1319.5 463.9h1M1320.5 459.1h1M1323.5 459.4V461.7M1322.5 459.9h1M1323.5 459.8h1M1325.5 457.7V461.7M1324.5 459.9h1M1325.5 461.2h1M1328.5 455.2V462.0M1327.5 461.0h1M1328.5 456.3h1M1330.5 457.2V462.5M1329.5 461.4h1M1330.5 458.1h1M1333.5 456.8V460.6M1332.5 457.9h1M1333.5 459.0h1M1336.5 455.7V462.3M1335.5 456.4h1M1336.5 460.0h1M1338.5 457.0V463.9M1337.5 462.6h1M1338.5 458.6h1M1341.5 457.3V459.7M1340.5 459.0h1M1341.5 458.7h1M1343.5 455.4V460.1M1342.5 457.1h1M1343.5 455.4h1M1346.5 456.0V458.7M1345.5 458.2h1M1346.5 457.2h1M1349.5 457.4V459.9M1348.5 458.0h1M1349.5 457.8h1M1351.5 456.7V459.3M1350.5 458.7h1M1351.5 457.0h1M1354.5 455.7V461.8M1353.5 460.6h1M1354.5 459.4h1M1356.5 456.0V461.4M1355.5 459.3h1M1356.5 458.0h1M1359.5 456.8V462.3M1358.5 458.4h1M1359.5 459.9h1M1362.5 455.8V462.5M1361.5 461.0h1M1362.5 458.8h1M1364.5 457.0V464.0M1363.5 463.2h1M1364.5 460.9h1M1367.5 460.9V463.7M1366.5 462.3h1M1367.5 463.5h1M1369.5 462.2V466.6M1368.5 465.9h1M1369.5 462.9h1M1372.5 461.9V465.7M1371.5 463.4h1M1372.5 464.9h1M1375.5 463.6V467.6M1374.5 466.4h1M1375.5 465.4h1M1377.5 463.0V468.8M1376.5 463.8h1M1377.5 468.6h1M1380.5 464.0V471.0M1379.5 470.6h1M1380.5 467.6h1M1382.5 463.8V467.0M1381.5 464.6h1M1382.5 464.2h1M1385.5 461.5V469.1M1384.5 461.8h1M1385.5 467.8h1M1388.5 460.0V466.8M1387.5 461.0h1M1388.5 465.4h1M1390.5 461.4V463.7M1389.5 463.0h1M1390.5 463.6h1M1393.5 461.1V465.6M1392.5 463.2h1M1393.5 461.7h1M1395.5 462.8V465.2M1394.5 464.1h1M1395.5 462.9h1M1398.5 461.1V467.6M1397.5 465.5h1M1398.5 467.6h1M1401.5 461.0V465.9M1400.5 461.7h1M1401.5 462.2h1M1403.5 459.3V466.0M1402.5 459.8h1M1403.5 464.2h1M1406.5 460.7V463.7M1405.5 461.6h1M1406.5 462.1h1M1408.5 459.7V462.3M1407.5 461.4h1M1408.5 461.8h1M1411.5 458.1V463.1M1410.5 459.5h1M1411.5 460.8h1M1414.5 454.8V459.5M1413.5 457.5h1M1414.5 456.8h1M1416.5 455.7V460.1M1415.5 456.4h1M1416.5 459.6h1M1419.5 454.1V456.9M1418.5 455.1h1M1419.5 455.8h1M1421.5 451.5V457.4M1420.5 456.7h1M1421.5 454.3h1M1424.5 453.1V458.9M1423.5 455.0h1M1424.5 457.4h1M1427.5 453.1V461.2M1426.5 460.2h1M1427.5 457.9h1M1429.5 456.0V458.7M1428.5 457.6h1M1429.5 457.9h1M1432.5 456.6V461.8M1431.5 457.7h1M1432.5 459.7h1M1434.5 456.5V459.5M1433.5 457.9h1M1434.5 458.5h1M1437.5 456.6V459.2M1436.5 456.9h1M1437.5 458.2h1M1440.5 455.9V458.4M1439.5 456.3h1M1440.5 456.7h1M1442.5 453.8V460.0M1441.5 459.4h1M1442.5 454.6h1M1445.5 454.8V457.4M1444.5 456.8h1M1445.5 456.5h1M1447.5 454.0V459.7M1446.5 454.6h1M1447.5 459.7h1M1450.5 452.3V456.1M1449.5 455.4h1M1450.5 455.5h1M1453.5 452.9V455.3M1452.5 455.2h1M1453.5 455.2h1M1455.5 453.4V457.7M1454.5 457.1h1M1455.5 455.3h1M1458.5 452.6V456.6M1457.5 455.2h1M1458.5 456.1h1M1460.5 453.2V457.9M1459.5 454.8h1M1460.5 454.0h1M1463.5 452.4V456.9M1462.5 454.7h1M1463.5 452.9h1M1466.5 449.9V456.4M1465.5 452.5h1M1466.5 452.3h1M1468.5 451.8V455.0M1467.5 453.3h1M1468.5 452.0h1M1471.5 448.9V455.6M1470.5 453.0h1M1471.5 453.1h1M1473.5 448.6V453.6M1472.5 453.3h1M1473.5 449.1h1M1476.5 446.3V454.8M1475.5 453.7h1M1476.5 447.2h1M1479.5 447.8V451.1M1478.5 449.4h1M1479.5 449.5h1M1481.5 447.1V452.8M1480.5 449.6h1M1481.5 449.2h1M1484.5 445.2V450.2M1483.5 447.1h1M1484.5 446.7h1M1486.5 444.0V448.9M1485.5 445.5h1M1486.5 444.4h1M1489.5 443.1V447.5M1488.5 444.3h1M1489.5 444.4h1M1492.5 442.7V444.9M1491.5 443.7h1M1492.5 443.5h1M1494.5 443.2V445.1M1493.5 443.6h1M1494.5 443.3h1M1497.5 443.4V445.5M1496.5 443.8h1M1497.5 445.0h1M1499.5 442.5V449.0M1498.5 445.3h1M1499.5 443.1h1M1502.5 444.6V450.2M1501.5 447.1h1M1502.5 446.2h1M1505.5 444.1V449.4M1504.5 446.6h1M1505.5 447.3h1M1507.5 445.9V452.7M1506.5 448.3h1M1507.5 451.1h1M1510.5 446.3V452.3M1509.5 448.8h1M1510.5 448.2h1M1512.5 448.7V452.5M1511.5 449.0h1M1512.5 449.5h1M1515.5 446.1V453.7M1514.5 448.4h1M1515.5 449.4h1M1518.5 448.9V452.6M1517.5 450.7h1M1518.5 450.8h1M1520.5 448.0V455.1M1519.5 454.2h1M1520.5 454.5h1M1523.5 449.1V453.2M1522.5 450.1h1M1523.5 452.3h1M1525.5 445.7V449.6M1524.5 449.5h1M1525.5 445.7h1M1528.5 443.2V450.8M1527.5 445.4h1M1528.5 445.4h1M1531.5 441.9V447.3M1530.5 442.5h1M1531.5 444.0h1M1533.5 441.4V448.7M1532.5 447.9h1M1533.5 445.2h1M1536.5 444.7V447.6M1535.5 446.2h1M1536.5 444.8h1M1538.5 441.7V445.8M1537.5 443.2h1M1538.5 442.6h1M1541.5 443.0V445.8M1540.5 443.1h1M1541.5 445.5h1M1544.5 439.0V447.1M1543.5 442.8h1M1544.5 441.0h1M1546.5 438.5V444.5M1545.5 444.0h1M1546.5 439.1h1M1549.5 437.4V443.5M1548.5 443.0h1M1549.5 437.5h1M1551.5 438.4V441.9M1550.5 439.8h1M1551.5 439.6h1M1554.5 438.0V441.2M1553.5 439.5h1M1554.5 441.2h1M1557.5 437.5V440.4M1556.5 438.5h1M1557.5 440.4h1M1559.5 437.4V440.5M1558.5 439.0h1M1559.5 440.3h1M1562.5 435.1V438.9M1561.5 437.9h1M1562.5 437.0h1M1564.5 434.1V438.9M1563.5 436.9h1M1564.5 437.5h1M1567.5 433.8V436.6M1566.5 436.4h1M1567.5 435.7h1M1570.5 431.5V437.5M1569.5 433.1h1M1570.5 436.5h1M1572.5 431.4V437.6M1571.5 431.7h1M1572.5 432.8h1M1575.5 431.8V436.8M1574.5 435.1h1M1575.5 433.3h1M1577.5 432.0V434.8M1576.5 434.4h1M1577.5 433.4h1M1580.5 430.6V436.3M1579.5 432.4h1M1580.5 431.4h1M1583.5 429.2V436.2M1582.5 431.4h1M1583.5 430.5h1M1585.5 430.0V435.6M1584.5 432.2h1M1585.5 432.1h1M1588.5 428.7V435.6M1587.5 434.8h1M1588.5 435.0h1M1590.5 428.9V434.8M1589.5 431.9h1M1590.5 434.7h1M1593.5 429.5V432.5M1592.5 430.9h1M1593.5 430.8h1M1596.5 429.3V431.7M1595.5 430.5h1M1596.5 431.6h1M1598.5 428.9V431.9M1597.5 430.7h1M1598.5 429.4h1M1601.5 428.0V435.8M1600.5 429.7h1M1601.5 429.4h1M1603.5 428.3V433.2M1602.5 431.0h1M1603.5 430.7h1M1606.5 430.2V433.3M1605.5 430.4h1M1606.5 432.8h1M1609.5 427.8V433.3M1608.5 428.0h1M1609.5 432.3h1M1611.5 429.0V435.3M1610.5 429.3h1M1611.5 430.5h1M1614.5 427.9V433.8M1613.5 433.5h1M1614.5 432.1h1M1616.5 426.7V432.9M1615.5 428.0h1M1616.5 430.1h1M1619.5 429.2V434.7M1618.5 434.6h1M1619.5 433.0h1M1622.5 430.0V436.8M1621.5 436.0h1M1622.5 430.7h1M1624.5 430.4V433.8M1623.5 433.6h1M1624.5 430.9h1M1627.5 427.6V432.6M1626.5 432.2h1M1627.5 429.3h1M1629.5 428.8V434.4M1628.5 432.4h1M1629.5 430.8h1M1632.5 431.2V435.5M1631.5 433.7h1M1632.5 431.3h1M1635.5 428.9V433.9M1634.5 430.1h1M1635.5 430.3h1M1637.5 429.4V432.8M1636.5 430.6h1M1637.5 431.4h1M1640.5 428.2V437.1M1639.5 435.3h1M1640.5 431.4h1M1642.5 433.0V435.7M1641.5 433.4h1M1642.5 434.7h1M1645.5 434.4V437.6M1644.5 436.0h1M1645.5 435.3h1M1648.5 433.3V436.5M1647.5 434.3h1M1648.5 436.0h1M1650.5 434.7V437.0M1649.5 435.8h1M1650.5 435.9h1M1653.5 432.0V436.8M1652.5 433.2h1M1653.5 436.0h1M1655.5 432.5V435.4M1654.5 435.3h1M1655.5 433.3h1M1658.5 435.0V437.3M1657.5 436.6h1M1658.5 435.3h1M1661.5 433.5V438.1M1660.5 435.9h1M1661.5 438.0h1M1663.5 434.4V438.0M1662.5 437.2h1M1663.5 434.9h1M1666.5 435.0V439.5M1665.5 439.2h1M1666.5 435.8h1M1668.5 436.0V440.5M1667.5 439.0h1M1668.5 439.5h1M1671.5 434.5V439.4M1670.5 437.6h1M1671.5 438.9h1M1674.5 437.3V440.9M1673.5 439.4h1M1674.5 438.4h1M1676.5 437.8V443.3M1675.5 440.4h1M1676.5 441.4h1M1679.5 435.4V443.5M1678.5 437.4h1M1679.5 442.3h1M1681.5 436.9V442.2M1680.5 438.4h1M1681.5 437.8h1M1684.5 438.0V440.8M1683.5 438.6h1M1684.5 439.1h1M1687.5 435.6V441.5M1686.5 435.8h1M1687.5 436.8h1M1689.5 434.4V440.7M1688.5 436.6h1M1689.5 438.5h1M1692.5 434.4V437.3M1691.5 436.1h1M1692.5 435.9h1M1694.5 433.9V436.5M1693.5 435.9h1M1694.5 436.2h1M1697.5 431.2V434.1M1696.5 431.8h1M1697.5 431.9h1M1700.5 429.9V434.4M1699.5 432.2h1M1700.5 433.3h1M1702.5 428.4V433.1M1701.5 428.6h1M1702.5 431.2h1M1705.5 429.5V435.0M1704.5 429.8h1M1705.5 434.7h1M1707.5 427.0V432.0M1706.5 427.5h1M1707.5 430.6h1M1710.5 425.4V431.0M1709.5 427.0h1M1710.5 427.3h1M1713.5 425.6V430.6M1712.5 425.9h1M1713.5 427.0h1M1715.5 425.1V431.8M1714.5 429.7h1M1715.5 426.3h1M1718.5 427.9V430.0M1717.5 429.9h1M1718.5 428.2h1M1720.5 426.1V428.5M1719.5 427.1h1M1720.5 427.3h1M1723.5 423.0V428.5M1722.5 426.8h1M1723.5 426.3h1M1726.5 428.9V434.6M1725.5 433.7h1M1726.5 432.7h1M1728.5 431.4V439.0M1727.5 435.0h1M1728.5 437.7h1M1731.5 432.8V435.4M1730.5 434.5h1M1731.5 434.5h1M1733.5 431.0V435.6M1732.5 432.0h1M1733.5 433.7h1M1736.5 429.7V437.5M1735.5 435.6h1M1736.5 433.7h1M1739.5 431.6V436.2M1738.5 432.2h1M1739.5 433.6h1M1741.5 431.9V437.3M1740.5 432.5h1M1741.5 437.1h1M1744.5 432.2V438.2M1743.5 433.8h1M1744.5 434.4h1M1746.5 430.8V436.3M1745.5 433.5h1M1746.5 435.3h1M1749.5 433.6V439.2M1748.5 434.8h1M1749.5 435.1h1M1752.5 433.7V438.4M1751.5 433.8h1M1752.5 438.4h1" stroke="#00f000" stroke-width="1.25" fill="none"/><rect x="1179.5" y="420.0" width="579" height="56.5" fill="none" stroke="#fff" stroke-width="1"/><path d="M1180.5 476V482" stroke="#fff" stroke-width="1"/><path d="M1308.5 476V482" stroke="#fff" stroke-width="1"/><path d="M1436.5 476V482" stroke="#fff" stroke-width="1"/><path d="M1564.5 476V482" stroke="#fff" stroke-width="1"/><path d="M1692.5 476V482" stroke="#fff" stroke-width="1"/><path d="M1758 442.5H1763" stroke="#fff" stroke-width="1"/><rect x="1760" y="423" width="79" height="22" fill="#fff"/></svg><div style="left:0;top:0;width:2560px;height:1360px;clip-path:inset(417px 716px 851px 1177px)"><span class="t" style="left:1767.00px;top:432.43px;font-size:20.2px;color:#fff;transform:scaleX(0.8900);">109.250</span></div><div style="left:1760px;top:423px;width:79px;height:22px;background:#fff"></div><span class="t" style="left:1768.00px;top:425.03px;font-size:20.2px;color:#000;transform:scaleX(0.8800);">109.528</span><svg style="left:1183px;top:429px" width="14" height="8" viewBox="0 0 14 8"><path d="M0 0H13L6.5 7Z" fill="#fff"/></svg><span class="t" style="left:1205.59px;top:423.53px;font-size:20.2px;color:#fff;transform:scaleX(0.9094);">USDJPY,H1  109.529 109.532 109.497 109.528</span><span class="t" style="left:1192.80px;top:425.03px;font-size:20.2px;color:#fff;transform:scaleX(0.9167);">#172556833 sell 0.10</span><span class="t" style="left:1179.00px;top:481.53px;font-size:20.2px;color:#fff;transform:scaleX(0.9000);">8 Jan 2019</span><span class="t" style="left:1307.00px;top:481.53px;font-size:20.2px;color:#fff;transform:scaleX(0.9000);">11 Jan 00:00</span><span class="t" style="left:1435.00px;top:481.53px;font-size:20.2px;color:#fff;transform:scaleX(0.9000);">15 Jan 16:00</span><span class="t" style="left:1563.00px;top:481.53px;font-size:20.2px;color:#fff;transform:scaleX(0.9000);">18 Jan 08:00</span><span class="t" style="left:1691.00px;top:481.53px;font-size:20.2px;color:#fff;transform:scaleX(0.9000);">23 Jan 00:00</span><div style="left:1163px;top:525px;width:695px;height:165px;background:linear-gradient(180deg,#c2cfdd 0px,#c8d5e3 40px,#d2dfec 70px,#d5e2ef 100%);border-top-left-radius:6px;border-top-right-radius:6px;box-shadow:inset 1px 1px 0 #fff"></div><svg style="left:1178px;top:545px" width="31" height="31" viewBox="0 0 31 31"><rect x="1" y="1" width="24" height="18" fill="#fffdf0" stroke="#4a8cf8" stroke-width="2"/><rect x="1" y="1" width="24" height="18" fill="none" stroke="#5a9a70" stroke-width="2" stroke-dasharray="2 4"/><path d="M5 7V13M3 9L5 7L7 9M9 9H12L14 6L16 12L18 9H21" stroke="#4a8cf8" stroke-width="1.5" fill="none"/><rect x="7" y="12" width="22" height="17" fill="#fff" stroke="#4a8cf8" stroke-width="2"/><rect x="7" y="12" width="22" height="17" fill="none" stroke="#5a9a70" stroke-width="2" stroke-dasharray="2 4"/><path d="M10.5 17L13.5 24L16.5 19L19.5 24L22.5 19L25 23" stroke="#4a8cf8" stroke-width="1.6" fill="none"/></svg><span class="t" style="left:1212.27px;top:549.94px;font-size:24.42px;color:#a39d99;transform:scaleX(0.8659);">USDJPY,H4</span><div style="left:1636px;top:540px;width:67px;height:39px;background:linear-gradient(180deg,#d2deeb 0,#cfdbe9 40%,#c3d1e0 40%,#c5d3e2 85%,#d3e0ed 100%);border:1px solid #97a6bb;box-sizing:border-box;border-radius:3px;box-shadow:inset 0 0 0 1px rgba(255,255,255,0.5)"></div><div style="left:1659px;top:559px;width:21.5px;height:9.5px;background:linear-gradient(180deg,#f0f0f0,#d0d0d0);border:1px solid #4a4a5a;box-sizing:border-box;border-radius:2px"></div><div style="left:1706.5px;top:540px;width:67px;height:39px;background:linear-gradient(180deg,#d2deeb 0,#cfdbe9 40%,#c3d1e0 40%,#c5d3e2 85%,#d3e0ed 100%);border:1px solid #97a6bb;box-sizing:border-box;border-radius:3px;box-shadow:inset 0 0 0 1px rgba(255,255,255,0.5)"></div><div style="left:1729.0px;top:552px;width:21.5px;height:16.5px;background:linear-gradient(180deg,#f4f4f4,#d4d4d4);border:1px solid #4a4a5a;box-sizing:border-box;border-radius:2px"></div><div style="left:1735.0px;top:557.5px;width:9.5px;height:6px;background:#9cb4d2;border:1px solid #4a4a5a;box-sizing:border-box"></div><div style="left:1777px;top:540px;width:67px;height:39px;background:linear-gradient(180deg,#d2deeb 0,#cfdbe9 40%,#c3d1e0 40%,#c5d3e2 85%,#d3e0ed 100%);border:1px solid #97a6bb;box-sizing:border-box;border-radius:3px;box-shadow:inset 0 0 0 1px rgba(255,255,255,0.5)"></div><svg style="left:1798px;top:550.5px" width="24" height="18" viewBox="0 0 24 18"><path d="M4 3.5L12 8.8L20 3.5M4 14L12 8.8L20 14" stroke="#4a4a5a" stroke-width="7" stroke-linecap="round" stroke-linejoin="round" fill="none"/><path d="M4 3.5L12 8.8L20 3.5M4 14L12 8.8L20 14" stroke="#e6e6e6" stroke-width="4.6" stroke-linecap="round" stroke-linejoin="round" fill="none"/></svg><div style="left:1175px;top:582px;width:671px;height:96px;background:#fff;box-shadow:inset 2px 2px 0 #6e6e6e"></div><div style="left:1177px;top:584px;width:667px;height:92px;background:#000"></div><svg style="left:0;top:0;clip-path:inset(584px 716px 684px 1177px)" width="2560" height="1360"><path d="M1244.5 587.5V643" stroke="#8a9aab" stroke-width="1.2" stroke-dasharray="3 3" shape-rendering="crispEdges"/><path d="M1308.5 587.5V643" stroke="#8a9aab" stroke-width="1.2" stroke-dasharray="3 3" shape-rendering="crispEdges"/><path d="M1372.5 587.5V643" stroke="#8a9aab" stroke-width="1.2" stroke-dasharray="3 3" shape-rendering="crispEdges"/><path d="M1436.5 587.5V643" stroke="#8a9aab" stroke-width="1.2" stroke-dasharray="3 3" shape-rendering="crispEdges"/><path d="M1500.5 587.5V643" stroke="#8a9aab" stroke-width="1.2" stroke-dasharray="3 3" shape-rendering="crispEdges"/><path d="M1564.5 587.5V643" stroke="#8a9aab" stroke-width="1.2" stroke-dasharray="3 3" shape-rendering="crispEdges"/><path d="M1628.5 587.5V643" stroke="#8a9aab" stroke-width="1.2" stroke-dasharray="3 3" shape-rendering="crispEdges"/><path d="M1692.5 587.5V643" stroke="#8a9aab" stroke-width="1.2" stroke-dasharray="3 3" shape-rendering="crispEdges"/><path d="M1180 609.5H1758" stroke="#8a9aab" stroke-width="1.2" stroke-dasharray="3 3" shape-rendering="crispEdges"/><path d="M1179 616.5H1758" stroke="#8a9aab" stroke-width="1.2" shape-rendering="crispEdges"/><path d="M1179 618.5H1758" stroke="#00c000" stroke-width="1" stroke-dasharray="9 4 2 4"/><path d="M1180.5 590.9V598.6M1179.5 596.8h1M1180.5 596.3h1M1182.5 592.5V595.0M1181.5 594.4h1M1182.5 593.1h1M1185.5 591.5V597.4M1184.5 593.9h1M1185.5 597.4h1M1187.5 591.9V599.0M1186.5 596.9h1M1187.5 595.9h1M1190.5 590.6V595.1M1189.5 593.5h1M1190.5 592.0h1M1193.5 589.7V598.8M1192.5 591.0h1M1193.5 597.1h1M1195.5 590.2V595.9M1194.5 590.5h1M1195.5 594.5h1M1198.5 590.2V598.5M1197.5 597.4h1M1198.5 592.2h1M1200.5 591.0V598.4M1199.5 593.0h1M1200.5 596.9h1M1203.5 591.7V597.9M1202.5 592.5h1M1203.5 595.8h1M1206.5 591.0V595.9M1205.5 593.8h1M1206.5 592.3h1M1208.5 592.4V598.6M1207.5 594.1h1M1208.5 596.3h1M1211.5 590.9V595.5M1210.5 595.1h1M1211.5 591.0h1M1213.5 591.4V598.2M1212.5 597.9h1M1213.5 595.4h1M1216.5 594.0V596.9M1215.5 594.3h1M1216.5 594.6h1M1219.5 591.1V598.3M1218.5 597.0h1M1219.5 591.5h1M1221.5 593.8V597.8M1220.5 596.4h1M1221.5 595.4h1M1224.5 595.4V598.5M1223.5 597.0h1M1224.5 596.2h1M1226.5 592.4V597.1M1225.5 594.2h1M1226.5 594.7h1M1229.5 589.7V596.1M1228.5 594.5h1M1229.5 591.2h1M1232.5 592.8V595.7M1231.5 595.0h1M1232.5 594.5h1M1234.5 589.6V596.8M1233.5 596.3h1M1234.5 593.6h1M1237.5 590.7V596.9M1236.5 592.6h1M1237.5 592.9h1M1239.5 592.0V596.9M1238.5 594.8h1M1239.5 595.5h1M1242.5 591.7V596.8M1241.5 594.4h1M1242.5 594.1h1M1245.5 592.3V597.8M1244.5 594.9h1M1245.5 596.4h1M1247.5 590.6V595.1M1246.5 590.7h1M1247.5 592.7h1M1250.5 590.3V596.5M1249.5 596.0h1M1250.5 595.5h1M1252.5 591.9V597.4M1251.5 595.5h1M1252.5 596.6h1M1255.5 589.8V594.0M1254.5 590.6h1M1255.5 592.1h1M1258.5 590.7V596.0M1257.5 595.9h1M1258.5 592.9h1M1260.5 588.7V595.7M1259.5 594.5h1M1260.5 589.0h1M1263.5 589.6V593.3M1262.5 591.6h1M1263.5 590.5h1M1265.5 591.0V594.3M1264.5 593.2h1M1265.5 592.0h1M1268.5 589.5V594.6M1267.5 593.5h1M1268.5 590.3h1M1271.5 589.6V594.5M1270.5 592.2h1M1271.5 593.3h1M1273.5 588.7V593.7M1272.5 590.3h1M1273.5 592.7h1M1276.5 587.5V594.6M1275.5 588.7h1M1276.5 592.5h1M1278.5 589.7V594.9M1277.5 593.6h1M1278.5 593.8h1M1281.5 591.9V595.0M1280.5 591.9h1M1281.5 592.3h1M1284.5 590.1V595.7M1283.5 591.1h1M1284.5 595.3h1M1286.5 590.5V595.3M1285.5 595.1h1M1286.5 594.1h1M1289.5 587.7V596.2M1288.5 588.9h1M1289.5 588.6h1M1291.5 587.5V595.6M1290.5 593.9h1M1291.5 589.4h1M1294.5 589.6V597.7M1293.5 591.8h1M1294.5 590.2h1M1297.5 589.0V595.1M1296.5 589.2h1M1297.5 592.5h1M1299.5 589.4V595.5M1298.5 591.0h1M1299.5 591.2h1M1302.5 588.5V596.1M1301.5 590.1h1M1302.5 591.2h1M1304.5 589.2V596.5M1303.5 591.9h1M1304.5 592.5h1M1307.5 590.2V598.6M1306.5 594.3h1M1307.5 593.9h1M1310.5 591.2V595.6M1309.5 592.2h1M1310.5 593.0h1M1312.5 591.1V598.1M1311.5 597.8h1M1312.5 597.6h1M1315.5 591.4V596.5M1314.5 596.4h1M1315.5 593.9h1M1317.5 593.2V596.2M1316.5 593.8h1M1317.5 593.9h1M1320.5 594.9V597.7M1319.5 595.7h1M1320.5 596.6h1M1323.5 592.1V595.9M1322.5 594.2h1M1323.5 595.1h1M1325.5 589.6V596.2M1324.5 594.3h1M1325.5 591.4h1M1328.5 587.8V597.5M1327.5 588.9h1M1328.5 591.4h1M1330.5 591.3V596.3M1329.5 596.2h1M1330.5 591.4h1M1333.5 592.7V595.7M1332.5 593.8h1M1333.5 594.5h1M1336.5 594.1V596.5M1335.5 595.9h1M1336.5 594.5h1M1338.5 591.8V598.6M1337.5 593.7h1M1338.5 598.6h1M1341.5 593.5V596.5M1340.5 595.5h1M1341.5 594.4h1M1343.5 592.9V594.7M1342.5 593.8h1M1343.5 594.5h1M1346.5 591.1V596.0M1345.5 595.4h1M1346.5 591.6h1M1349.5 591.9V597.4M1348.5 595.2h1M1349.5 595.6h1M1351.5 594.3V596.6M1350.5 594.6h1M1351.5 596.5h1M1354.5 594.2V597.6M1353.5 594.5h1M1354.5 597.0h1M1356.5 594.4V597.4M1355.5 596.7h1M1356.5 595.2h1M1359.5 593.2V597.6M1358.5 596.5h1M1359.5 597.0h1M1362.5 590.4V597.3M1361.5 591.9h1M1362.5 591.1h1M1364.5 592.9V597.6M1363.5 596.7h1M1364.5 595.8h1M1367.5 593.2V595.4M1366.5 593.8h1M1367.5 594.8h1M1369.5 591.1V595.1M1368.5 594.9h1M1369.5 591.1h1M1372.5 590.7V598.5M1371.5 597.0h1M1372.5 595.9h1M1375.5 591.4V598.9M1374.5 595.9h1M1375.5 597.6h1M1377.5 591.7V596.6M1376.5 592.4h1M1377.5 594.2h1M1380.5 592.2V596.7M1379.5 593.9h1M1380.5 595.2h1M1382.5 592.6V596.7M1381.5 595.1h1M1382.5 596.5h1M1385.5 591.5V598.2M1384.5 593.2h1M1385.5 596.4h1M1388.5 592.3V595.1M1387.5 593.2h1M1388.5 593.1h1M1390.5 591.9V595.9M1389.5 591.9h1M1390.5 595.2h1M1393.5 593.4V596.6M1392.5 593.5h1M1393.5 593.7h1M1395.5 592.1V595.9M1394.5 592.7h1M1395.5 595.3h1M1398.5 588.6V594.4M1397.5 588.8h1M1398.5 593.1h1M1401.5 590.9V595.6M1400.5 593.6h1M1401.5 594.9h1M1403.5 592.8V596.0M1402.5 594.6h1M1403.5 594.0h1M1406.5 589.7V595.4M1405.5 594.0h1M1406.5 594.9h1M1408.5 588.9V595.1M1407.5 591.7h1M1408.5 594.0h1M1411.5 591.4V597.3M1410.5 594.7h1M1411.5 593.9h1M1414.5 591.8V596.5M1413.5 595.1h1M1414.5 595.5h1M1416.5 594.1V597.6M1415.5 596.7h1M1416.5 595.2h1M1419.5 593.6V597.0M1418.5 596.9h1M1419.5 596.4h1M1421.5 591.4V596.6M1420.5 592.1h1M1421.5 593.7h1M1424.5 588.7V597.8M1423.5 592.5h1M1424.5 595.8h1M1427.5 591.1V597.8M1426.5 591.6h1M1427.5 595.0h1M1429.5 593.2V598.8M1428.5 594.0h1M1429.5 595.0h1M1432.5 592.6V598.2M1431.5 594.1h1M1432.5 595.1h1M1434.5 594.7V597.7M1433.5 596.7h1M1434.5 594.7h1M1437.5 594.8V597.8M1436.5 596.7h1M1437.5 595.9h1M1440.5 594.6V598.4M1439.5 595.6h1M1440.5 596.5h1M1442.5 590.5V598.6M1441.5 593.3h1M1442.5 597.2h1M1445.5 592.5V600.6M1444.5 599.7h1M1445.5 594.8h1M1447.5 595.1V599.9M1446.5 596.3h1M1447.5 598.1h1M1450.5 593.2V600.4M1449.5 594.1h1M1450.5 596.4h1M1453.5 593.2V597.4M1452.5 594.8h1M1453.5 594.1h1M1455.5 594.4V601.3M1454.5 594.5h1M1455.5 597.3h1M1458.5 591.6V602.1M1457.5 601.2h1M1458.5 594.5h1M1460.5 593.1V599.0M1459.5 594.4h1M1460.5 594.0h1M1463.5 592.6V599.1M1462.5 596.8h1M1463.5 594.6h1M1466.5 593.4V596.7M1465.5 594.6h1M1466.5 596.4h1M1468.5 595.3V599.1M1467.5 597.0h1M1468.5 598.0h1M1471.5 595.5V599.2M1470.5 598.1h1M1471.5 595.5h1M1473.5 596.6V600.3M1472.5 596.7h1M1473.5 597.8h1M1476.5 595.0V599.5M1475.5 597.7h1M1476.5 596.8h1M1479.5 596.2V599.8M1478.5 597.0h1M1479.5 597.1h1M1481.5 596.9V602.6M1480.5 599.8h1M1481.5 602.0h1M1484.5 594.6V599.6M1483.5 599.3h1M1484.5 599.3h1M1486.5 593.8V598.4M1485.5 594.9h1M1486.5 595.1h1M1489.5 593.9V600.0M1488.5 596.4h1M1489.5 597.2h1M1492.5 594.2V600.3M1491.5 596.4h1M1492.5 599.5h1M1494.5 595.5V600.3M1493.5 598.6h1M1494.5 596.3h1M1497.5 598.8V602.8M1496.5 599.5h1M1497.5 601.0h1M1499.5 596.8V602.8M1498.5 600.9h1M1499.5 601.9h1M1502.5 598.4V604.5M1501.5 604.2h1M1502.5 599.9h1M1505.5 599.0V602.8M1504.5 600.3h1M1505.5 602.6h1M1507.5 600.1V607.7M1506.5 602.6h1M1507.5 603.3h1M1510.5 601.8V605.9M1509.5 603.6h1M1510.5 602.1h1M1512.5 600.7V608.2M1511.5 603.3h1M1512.5 606.7h1M1515.5 603.0V608.8M1514.5 604.6h1M1515.5 603.2h1M1518.5 602.8V608.5M1517.5 608.0h1M1518.5 604.6h1M1520.5 604.4V608.1M1519.5 606.0h1M1520.5 607.3h1M1523.5 604.2V607.4M1522.5 604.3h1M1523.5 607.0h1M1525.5 604.4V607.6M1524.5 606.1h1M1525.5 604.5h1M1528.5 603.8V609.4M1527.5 604.6h1M1528.5 608.1h1M1531.5 603.4V609.0M1530.5 604.6h1M1531.5 605.2h1M1533.5 604.4V611.5M1532.5 609.1h1M1533.5 605.8h1M1536.5 606.3V609.7M1535.5 609.7h1M1536.5 607.7h1M1538.5 607.3V613.7M1537.5 611.5h1M1538.5 611.6h1M1541.5 609.0V612.1M1540.5 611.8h1M1541.5 609.1h1M1544.5 606.5V615.1M1543.5 607.8h1M1544.5 609.5h1M1546.5 609.2V614.0M1545.5 613.9h1M1546.5 610.4h1M1549.5 607.3V613.4M1548.5 610.4h1M1549.5 612.2h1M1551.5 606.7V616.7M1550.5 616.1h1M1551.5 613.2h1M1554.5 611.1V614.5M1553.5 613.7h1M1554.5 612.7h1M1557.5 611.9V615.7M1556.5 615.3h1M1557.5 613.1h1M1559.5 610.0V616.5M1558.5 610.6h1M1559.5 613.4h1M1562.5 610.1V614.9M1561.5 613.2h1M1562.5 613.8h1M1564.5 612.4V620.8M1563.5 619.2h1M1564.5 613.4h1M1567.5 620.3V626.7M1566.5 622.4h1M1567.5 621.3h1M1570.5 632.6V636.2M1569.5 635.0h1M1570.5 633.8h1M1572.5 630.3V637.6M1571.5 631.8h1M1572.5 634.8h1M1575.5 622.4V631.3M1574.5 626.5h1M1575.5 631.2h1M1577.5 623.6V628.9M1576.5 624.4h1M1577.5 625.6h1M1580.5 622.8V630.9M1579.5 628.0h1M1580.5 628.1h1M1583.5 623.0V626.4M1582.5 623.9h1M1583.5 626.2h1M1585.5 622.7V626.4M1584.5 625.9h1M1585.5 625.0h1M1588.5 622.4V627.3M1587.5 623.2h1M1588.5 624.7h1M1590.5 622.5V626.8M1589.5 623.9h1M1590.5 626.4h1M1593.5 618.8V625.2M1592.5 623.1h1M1593.5 619.9h1M1596.5 620.4V627.4M1595.5 623.9h1M1596.5 623.9h1M1598.5 616.9V623.8M1597.5 622.6h1M1598.5 619.5h1M1601.5 618.6V624.2M1600.5 619.9h1M1601.5 623.9h1M1603.5 617.4V623.9M1602.5 619.2h1M1603.5 621.7h1M1606.5 616.2V624.6M1605.5 617.9h1M1606.5 619.7h1M1609.5 617.9V622.1M1608.5 620.4h1M1609.5 618.5h1M1611.5 618.8V623.4M1610.5 621.0h1M1611.5 621.9h1M1614.5 614.8V622.1M1613.5 617.8h1M1614.5 618.2h1M1616.5 615.4V621.1M1615.5 618.8h1M1616.5 618.5h1M1619.5 616.2V623.8M1618.5 623.5h1M1619.5 618.2h1M1622.5 615.6V623.7M1621.5 623.3h1M1622.5 619.7h1M1624.5 618.1V623.2M1623.5 618.1h1M1624.5 618.9h1M1627.5 616.7V621.0M1626.5 620.1h1M1627.5 619.2h1M1629.5 617.6V621.2M1628.5 619.0h1M1629.5 618.6h1M1632.5 616.7V623.0M1631.5 620.4h1M1632.5 622.1h1M1635.5 618.3V625.9M1634.5 625.1h1M1635.5 621.3h1M1637.5 622.6V624.8M1636.5 623.3h1M1637.5 623.1h1M1640.5 622.2V627.5M1639.5 627.0h1M1640.5 627.5h1M1642.5 619.0V627.4M1641.5 626.8h1M1642.5 623.1h1M1645.5 622.4V625.8M1644.5 622.8h1M1645.5 625.1h1M1648.5 621.1V629.9M1647.5 629.8h1M1648.5 622.5h1M1650.5 620.2V627.7M1649.5 623.3h1M1650.5 623.3h1M1653.5 620.2V623.4M1652.5 622.5h1M1653.5 620.4h1M1655.5 620.2V624.4M1654.5 622.4h1M1655.5 621.8h1M1658.5 617.2V626.3M1657.5 619.8h1M1658.5 617.7h1M1661.5 620.3V622.4M1660.5 620.8h1M1661.5 620.4h1M1663.5 619.4V626.9M1662.5 625.9h1M1663.5 625.4h1M1666.5 616.2V623.2M1665.5 616.9h1M1666.5 620.3h1M1668.5 620.0V623.3M1667.5 621.5h1M1668.5 620.6h1M1671.5 619.9V624.1M1670.5 621.6h1M1671.5 622.5h1M1674.5 617.8V626.7M1673.5 621.1h1M1674.5 623.2h1M1676.5 619.5V624.2M1675.5 623.6h1M1676.5 620.0h1M1679.5 617.8V624.7M1678.5 621.1h1M1679.5 623.2h1M1681.5 618.7V622.8M1680.5 619.9h1M1681.5 621.8h1M1684.5 615.9V623.2M1683.5 616.5h1M1684.5 618.1h1M1687.5 616.2V619.7M1686.5 618.1h1M1687.5 616.2h1M1689.5 616.9V621.4M1688.5 620.7h1M1689.5 617.5h1M1692.5 615.1V622.7M1691.5 619.9h1M1692.5 619.8h1M1694.5 616.1V620.3M1693.5 618.4h1M1694.5 618.1h1M1697.5 613.7V621.4M1696.5 615.1h1M1697.5 618.0h1M1700.5 615.8V622.1M1699.5 618.2h1M1700.5 621.9h1M1702.5 614.4V618.7M1701.5 616.7h1M1702.5 614.9h1M1705.5 613.8V619.8M1704.5 616.1h1M1705.5 618.7h1M1707.5 613.3V619.8M1706.5 615.8h1M1707.5 614.5h1M1710.5 613.9V616.8M1709.5 614.4h1M1710.5 614.9h1M1713.5 612.6V617.5M1712.5 616.3h1M1713.5 614.1h1M1715.5 613.4V616.3M1714.5 616.3h1M1715.5 613.8h1M1718.5 611.8V620.6M1717.5 620.3h1M1718.5 616.3h1M1720.5 614.9V619.6M1719.5 619.0h1M1720.5 618.9h1M1723.5 615.0V619.8M1722.5 615.8h1M1723.5 617.7h1M1726.5 611.5V619.3M1725.5 615.3h1M1726.5 617.2h1M1728.5 612.2V615.6M1727.5 615.2h1M1728.5 613.2h1M1731.5 614.1V617.8M1730.5 616.8h1M1731.5 615.5h1M1733.5 614.8V618.2M1732.5 616.0h1M1733.5 617.4h1M1736.5 614.5V619.1M1735.5 617.5h1M1736.5 618.3h1M1739.5 612.3V622.4M1738.5 614.1h1M1739.5 619.2h1M1741.5 613.2V621.4M1740.5 614.8h1M1741.5 621.1h1M1744.5 615.1V619.7M1743.5 617.5h1M1744.5 615.3h1M1746.5 615.4V620.8M1745.5 620.7h1M1746.5 617.5h1M1749.5 615.0V622.6M1748.5 616.9h1M1749.5 619.7h1M1752.5 615.9V620.5M1751.5 618.6h1M1752.5 620.2h1M1754.5 615.1V619.8M1753.5 616.1h1M1754.5 616.3h1" stroke="#00f000" stroke-width="1.25" fill="none"/><rect x="1179.5" y="587.0" width="579" height="56.5" fill="none" stroke="#fff" stroke-width="1"/><path d="M1180.5 643V649" stroke="#fff" stroke-width="1"/><path d="M1308.5 643V649" stroke="#fff" stroke-width="1"/><path d="M1436.5 643V649" stroke="#fff" stroke-width="1"/><path d="M1564.5 643V649" stroke="#fff" stroke-width="1"/><path d="M1692.5 643V649" stroke="#fff" stroke-width="1"/><path d="M1758 610.5H1763" stroke="#fff" stroke-width="1"/><rect x="1760" y="605" width="79" height="22" fill="#fff"/></svg><div style="left:0;top:0;width:2560px;height:1360px;clip-path:inset(584px 716px 684px 1177px)"><span class="t" style="left:1767.00px;top:600.43px;font-size:20.2px;color:#fff;transform:scaleX(0.8900);">110.280</span></div><div style="left:1760px;top:605px;width:79px;height:22px;background:#fff"></div><span class="t" style="left:1768.00px;top:607.03px;font-size:20.2px;color:#000;transform:scaleX(0.8800);">109.528</span><svg style="left:1183px;top:596.5px" width="14" height="8" viewBox="0 0 14 8"><path d="M0 0H13L6.5 7Z" fill="#fff"/></svg><span class="t" style="left:1205.59px;top:591.03px;font-size:20.2px;color:#fff;transform:scaleX(0.9094);">USDJPY,H4  109.487 109.570 109.436 109.528</span><span class="t" style="left:1192.80px;top:597.83px;font-size:20.2px;color:#fff;transform:scaleX(0.9167);">#172556833 sell 0.10</span><span class="t" style="left:1179.00px;top:648.53px;font-size:20.2px;color:#fff;transform:scaleX(0.9000);">15 Nov 2018</span><span class="t" style="left:1307.00px;top:648.53px;font-size:20.2px;color:#fff;transform:scaleX(0.9000);">30 Nov 08:00</span><span class="t" style="left:1435.00px;top:648.53px;font-size:20.2px;color:#fff;transform:scaleX(0.9000);">14 Dec 20:00</span><span class="t" style="left:1563.00px;top:648.53px;font-size:20.2px;color:#fff;transform:scaleX(0.9000);">2 Jan 12:00</span><span class="t" style="left:1691.00px;top:648.53px;font-size:20.2px;color:#fff;transform:scaleX(0.9000);">17 Jan 04:00</span><div style="left:1163px;top:692px;width:695px;height:166px;background:linear-gradient(180deg,#c2cfdd 0px,#c8d5e3 40px,#d2dfec 70px,#d5e2ef 100%);border-top-left-radius:6px;border-top-right-radius:6px;box-shadow:inset 1px 1px 0 #fff"></div><svg style="left:1178px;top:712px" width="31" height="31" viewBox="0 0 31 31"><rect x="1" y="1" width="24" height="18" fill="#fffdf0" stroke="#4a8cf8" stroke-width="2"/><rect x="1" y="1" width="24" height="18" fill="none" stroke="#5a9a70" stroke-width="2" stroke-dasharray="2 4"/><path d="M5 7V13M3 9L5 7L7 9M9 9H12L14 6L16 12L18 9H21" stroke="#4a8cf8" stroke-width="1.5" fill="none"/><rect x="7" y="12" width="22" height="17" fill="#fff" stroke="#4a8cf8" stroke-width="2"/><rect x="7" y="12" width="22" height="17" fill="none" stroke="#5a9a70" stroke-width="2" stroke-dasharray="2 4"/><path d="M10.5 17L13.5 24L16.5 19L19.5 24L22.5 19L25 23" stroke="#4a8cf8" stroke-width="1.6" fill="none"/></svg><span class="t" style="left:1212.23px;top:716.94px;font-size:24.42px;color:#a39d99;transform:scaleX(0.8862);">USDJPY,Daily</span><div style="left:1636px;top:707px;width:67px;height:39px;background:linear-gradient(180deg,#d2deeb 0,#cfdbe9 40%,#c3d1e0 40%,#c5d3e2 85%,#d3e0ed 100%);border:1px solid #97a6bb;box-sizing:border-box;border-radius:3px;box-shadow:inset 0 0 0 1px rgba(255,255,255,0.5)"></div><div style="left:1659px;top:726px;width:21.5px;height:9.5px;background:linear-gradient(180deg,#f0f0f0,#d0d0d0);border:1px solid #4a4a5a;box-sizing:border-box;border-radius:2px"></div><div style="left:1706.5px;top:707px;width:67px;height:39px;background:linear-gradient(180deg,#d2deeb 0,#cfdbe9 40%,#c3d1e0 40%,#c5d3e2 85%,#d3e0ed 100%);border:1px solid #97a6bb;box-sizing:border-box;border-radius:3px;box-shadow:inset 0 0 0 1px rgba(255,255,255,0.5)"></div><div style="left:1729.0px;top:719px;width:21.5px;height:16.5px;background:linear-gradient(180deg,#f4f4f4,#d4d4d4);border:1px solid #4a4a5a;box-sizing:border-box;border-radius:2px"></div><div style="left:1735.0px;top:724.5px;width:9.5px;height:6px;background:#9cb4d2;border:1px solid #4a4a5a;box-sizing:border-box"></div><div style="left:1777px;top:707px;width:67px;height:39px;background:linear-gradient(180deg,#d2deeb 0,#cfdbe9 40%,#c3d1e0 40%,#c5d3e2 85%,#d3e0ed 100%);border:1px solid #97a6bb;box-sizing:border-box;border-radius:3px;box-shadow:inset 0 0 0 1px rgba(255,255,255,0.5)"></div><svg style="left:1798px;top:717.5px" width="24" height="18" viewBox="0 0 24 18"><path d="M4 3.5L12 8.8L20 3.5M4 14L12 8.8L20 14" stroke="#4a4a5a" stroke-width="7" stroke-linecap="round" stroke-linejoin="round" fill="none"/><path d="M4 3.5L12 8.8L20 3.5M4 14L12 8.8L20 14" stroke="#e6e6e6" stroke-width="4.6" stroke-linecap="round" stroke-linejoin="round" fill="none"/></svg><div style="left:1175px;top:749px;width:671px;height:97px;background:#fff;box-shadow:inset 2px 2px 0 #6e6e6e"></div><div style="left:1177px;top:751px;width:667px;height:93px;background:#000"></div><svg style="left:0;top:0;clip-path:inset(751px 716px 516px 1177px)" width="2560" height="1360"><path d="M1244.5 754.5V810" stroke="#8a9aab" stroke-width="1.2" stroke-dasharray="3 3" shape-rendering="crispEdges"/><path d="M1308.5 754.5V810" stroke="#8a9aab" stroke-width="1.2" stroke-dasharray="3 3" shape-rendering="crispEdges"/><path d="M1372.5 754.5V810" stroke="#8a9aab" stroke-width="1.2" stroke-dasharray="3 3" shape-rendering="crispEdges"/><path d="M1436.5 754.5V810" stroke="#8a9aab" stroke-width="1.2" stroke-dasharray="3 3" shape-rendering="crispEdges"/><path d="M1500.5 754.5V810" stroke="#8a9aab" stroke-width="1.2" stroke-dasharray="3 3" shape-rendering="crispEdges"/><path d="M1564.5 754.5V810" stroke="#8a9aab" stroke-width="1.2" stroke-dasharray="3 3" shape-rendering="crispEdges"/><path d="M1628.5 754.5V810" stroke="#8a9aab" stroke-width="1.2" stroke-dasharray="3 3" shape-rendering="crispEdges"/><path d="M1692.5 754.5V810" stroke="#8a9aab" stroke-width="1.2" stroke-dasharray="3 3" shape-rendering="crispEdges"/><path d="M1180 775.5H1758" stroke="#8a9aab" stroke-width="1.2" stroke-dasharray="3 3" shape-rendering="crispEdges"/><path d="M1179 783.5H1758" stroke="#8a9aab" stroke-width="1.2" shape-rendering="crispEdges"/><path d="M1179 786.5H1758" stroke="#00c000" stroke-width="1" stroke-dasharray="9 4 2 4"/><path d="M1180.5 762.2V770.0M1179.5 765.3h1M1180.5 770.0h1M1182.5 765.8V769.1M1181.5 766.9h1M1182.5 766.7h1M1185.5 764.7V769.6M1184.5 765.7h1M1185.5 765.1h1M1187.5 763.4V770.1M1186.5 768.7h1M1187.5 766.2h1M1190.5 764.2V772.1M1189.5 769.4h1M1190.5 766.6h1M1193.5 762.5V772.9M1192.5 764.9h1M1193.5 768.1h1M1195.5 768.1V774.5M1194.5 772.1h1M1195.5 768.8h1M1198.5 770.9V774.0M1197.5 771.2h1M1198.5 772.4h1M1200.5 770.2V777.1M1199.5 776.3h1M1200.5 771.9h1M1203.5 770.9V775.9M1202.5 772.2h1M1203.5 771.5h1M1206.5 770.5V776.4M1205.5 772.3h1M1206.5 774.5h1M1208.5 771.1V776.3M1207.5 771.6h1M1208.5 771.5h1M1211.5 770.4V775.9M1210.5 771.9h1M1211.5 770.9h1M1213.5 773.7V777.7M1212.5 776.2h1M1213.5 777.3h1M1216.5 773.9V777.8M1215.5 773.9h1M1216.5 775.4h1M1219.5 773.5V784.0M1218.5 779.7h1M1219.5 783.6h1M1221.5 776.1V781.8M1220.5 779.8h1M1221.5 777.3h1M1224.5 777.7V783.7M1223.5 779.7h1M1224.5 780.8h1M1226.5 774.7V785.3M1225.5 781.5h1M1226.5 781.9h1M1229.5 778.3V784.1M1228.5 778.6h1M1229.5 783.3h1M1232.5 779.3V786.2M1231.5 785.3h1M1232.5 781.1h1M1234.5 780.5V785.2M1233.5 782.6h1M1234.5 784.5h1M1237.5 782.7V786.7M1236.5 784.4h1M1237.5 782.9h1M1239.5 784.9V789.8M1238.5 786.7h1M1239.5 786.4h1M1242.5 781.9V792.0M1241.5 783.5h1M1242.5 788.6h1M1245.5 783.6V792.0M1244.5 788.6h1M1245.5 784.0h1M1247.5 785.8V792.5M1246.5 791.4h1M1247.5 787.7h1M1250.5 789.2V794.1M1249.5 789.6h1M1250.5 791.4h1M1252.5 787.3V794.2M1251.5 792.0h1M1252.5 789.1h1M1255.5 788.8V796.2M1254.5 791.0h1M1255.5 793.1h1M1258.5 792.3V795.0M1257.5 792.7h1M1258.5 793.7h1M1260.5 791.3V799.9M1259.5 791.6h1M1260.5 793.3h1M1263.5 794.4V799.4M1262.5 795.1h1M1263.5 797.1h1M1265.5 795.5V799.2M1264.5 798.3h1M1265.5 797.2h1M1268.5 792.9V802.0M1267.5 800.5h1M1268.5 801.4h1M1271.5 794.0V800.3M1270.5 800.1h1M1271.5 796.6h1M1273.5 795.5V798.3M1272.5 797.2h1M1273.5 798.3h1M1276.5 792.4V799.2M1275.5 792.8h1M1276.5 798.8h1M1278.5 795.3V799.8M1277.5 797.7h1M1278.5 795.6h1M1281.5 792.8V800.7M1280.5 800.6h1M1281.5 795.0h1M1284.5 791.2V798.0M1283.5 792.4h1M1284.5 795.5h1M1286.5 793.2V797.3M1285.5 797.2h1M1286.5 796.4h1M1289.5 791.9V798.2M1288.5 793.9h1M1289.5 793.2h1M1291.5 792.7V797.4M1290.5 793.8h1M1291.5 795.5h1M1294.5 792.9V797.2M1293.5 793.2h1M1294.5 796.9h1M1297.5 791.8V796.6M1296.5 793.8h1M1297.5 794.4h1M1299.5 793.5V798.6M1298.5 796.1h1M1299.5 796.7h1M1302.5 796.4V800.7M1301.5 799.3h1M1302.5 800.0h1M1304.5 797.0V803.0M1303.5 802.4h1M1304.5 797.4h1M1307.5 799.8V804.9M1306.5 803.2h1M1307.5 802.1h1M1310.5 800.9V809.0M1309.5 807.2h1M1310.5 808.3h1M1312.5 802.2V806.7M1311.5 806.0h1M1312.5 806.5h1M1315.5 803.7V807.9M1314.5 804.6h1M1315.5 807.4h1M1317.5 806.8V809.0M1316.5 807.7h1M1317.5 808.2h1M1320.5 802.0V809.0M1319.5 805.8h1M1320.5 802.1h1M1323.5 802.0V805.9M1322.5 805.7h1M1323.5 802.5h1M1325.5 800.8V805.7M1324.5 805.6h1M1325.5 805.3h1M1328.5 797.3V805.3M1327.5 798.9h1M1328.5 798.6h1M1330.5 798.7V805.4M1329.5 800.7h1M1330.5 799.2h1M1333.5 796.1V800.9M1332.5 798.0h1M1333.5 798.3h1M1336.5 795.3V799.3M1335.5 798.5h1M1336.5 795.9h1M1338.5 793.2V802.5M1337.5 796.7h1M1338.5 796.4h1M1341.5 790.4V798.8M1340.5 798.0h1M1341.5 795.7h1M1343.5 790.4V796.0M1342.5 793.2h1M1343.5 793.3h1M1346.5 788.7V796.6M1345.5 795.2h1M1346.5 796.2h1M1349.5 789.0V794.6M1348.5 790.7h1M1349.5 792.1h1M1351.5 787.0V794.1M1350.5 791.7h1M1351.5 788.2h1M1354.5 784.6V794.0M1353.5 787.6h1M1354.5 787.2h1M1356.5 785.5V790.7M1355.5 787.1h1M1356.5 789.8h1M1359.5 785.5V790.3M1358.5 786.1h1M1359.5 787.6h1M1362.5 784.1V789.9M1361.5 785.7h1M1362.5 787.9h1M1364.5 780.0V785.9M1363.5 784.7h1M1364.5 782.5h1M1367.5 780.4V785.4M1366.5 782.9h1M1367.5 780.7h1M1369.5 779.6V785.4M1368.5 783.6h1M1369.5 782.2h1M1372.5 780.6V787.6M1371.5 786.1h1M1372.5 787.2h1M1375.5 779.3V788.6M1374.5 786.3h1M1375.5 780.3h1M1377.5 779.0V786.7M1376.5 785.1h1M1377.5 780.1h1M1380.5 776.4V784.4M1379.5 782.4h1M1380.5 783.3h1M1382.5 777.3V784.2M1381.5 777.4h1M1382.5 782.9h1M1385.5 775.5V782.0M1384.5 779.6h1M1385.5 781.4h1M1388.5 773.7V783.9M1387.5 783.7h1M1388.5 774.6h1M1390.5 776.0V781.5M1389.5 779.2h1M1390.5 777.9h1M1393.5 775.6V781.7M1392.5 776.7h1M1393.5 778.9h1M1395.5 774.3V780.7M1394.5 777.3h1M1395.5 778.8h1M1398.5 774.7V779.2M1397.5 774.8h1M1398.5 775.8h1M1401.5 774.1V780.4M1400.5 776.3h1M1401.5 776.8h1M1403.5 773.5V780.8M1402.5 779.2h1M1403.5 774.9h1M1406.5 774.6V779.1M1405.5 778.3h1M1406.5 777.0h1M1408.5 775.6V781.0M1407.5 776.2h1M1408.5 778.2h1M1411.5 774.9V780.8M1410.5 775.4h1M1411.5 777.2h1M1414.5 774.4V779.7M1413.5 774.7h1M1414.5 778.0h1M1416.5 774.9V780.7M1415.5 775.5h1M1416.5 776.1h1M1419.5 773.3V779.6M1418.5 775.0h1M1419.5 773.9h1M1421.5 773.8V779.5M1420.5 778.0h1M1421.5 775.5h1M1424.5 776.1V782.1M1423.5 779.3h1M1424.5 781.4h1M1427.5 778.0V782.8M1426.5 779.3h1M1427.5 778.9h1M1429.5 775.2V782.5M1428.5 781.0h1M1429.5 781.2h1M1432.5 777.5V780.9M1431.5 778.2h1M1432.5 779.6h1M1434.5 778.1V782.6M1433.5 780.6h1M1434.5 779.7h1M1437.5 775.1V785.0M1436.5 779.4h1M1437.5 776.5h1M1440.5 776.6V783.1M1439.5 777.3h1M1440.5 779.0h1M1442.5 775.3V780.4M1441.5 775.9h1M1442.5 777.0h1M1445.5 775.2V780.6M1444.5 775.9h1M1445.5 777.3h1M1447.5 772.0V782.3M1446.5 775.2h1M1447.5 775.8h1M1450.5 775.1V781.4M1449.5 780.1h1M1450.5 779.6h1M1453.5 774.8V779.8M1452.5 776.6h1M1453.5 777.7h1M1455.5 774.2V782.1M1454.5 776.6h1M1455.5 776.6h1M1458.5 774.9V779.8M1457.5 777.8h1M1458.5 775.9h1M1460.5 773.3V779.6M1459.5 777.0h1M1460.5 775.3h1M1463.5 772.5V779.5M1462.5 776.6h1M1463.5 776.1h1M1466.5 774.8V779.3M1465.5 775.4h1M1466.5 774.8h1M1468.5 773.7V778.3M1467.5 776.6h1M1468.5 776.3h1M1471.5 773.8V780.5M1470.5 774.7h1M1471.5 779.4h1M1473.5 773.7V777.3M1472.5 775.8h1M1473.5 774.7h1M1476.5 774.0V776.4M1475.5 775.3h1M1476.5 775.3h1M1479.5 770.5V777.9M1478.5 771.8h1M1479.5 773.5h1M1481.5 773.5V777.3M1480.5 776.3h1M1481.5 773.7h1M1484.5 771.7V779.6M1483.5 779.0h1M1484.5 773.1h1M1486.5 771.8V778.0M1485.5 775.1h1M1486.5 775.1h1M1489.5 769.5V775.5M1488.5 773.4h1M1489.5 770.3h1M1492.5 769.2V775.3M1491.5 770.9h1M1492.5 773.2h1M1494.5 769.9V775.6M1493.5 772.8h1M1494.5 773.0h1M1497.5 769.1V777.5M1496.5 773.5h1M1497.5 775.9h1M1499.5 769.4V774.8M1498.5 774.4h1M1499.5 770.4h1M1502.5 770.9V776.4M1501.5 772.9h1M1502.5 772.6h1M1505.5 769.2V774.8M1504.5 772.0h1M1505.5 773.5h1M1507.5 767.5V776.5M1506.5 772.4h1M1507.5 776.2h1M1510.5 769.0V773.8M1509.5 769.4h1M1510.5 769.9h1M1512.5 769.7V774.3M1511.5 770.2h1M1512.5 770.4h1M1515.5 768.4V776.6M1514.5 772.8h1M1515.5 768.5h1M1518.5 770.5V773.8M1517.5 771.9h1M1518.5 772.0h1M1520.5 770.3V773.1M1519.5 772.6h1M1520.5 771.7h1M1523.5 768.1V773.4M1522.5 772.7h1M1523.5 770.6h1M1525.5 769.9V773.4M1524.5 771.5h1M1525.5 773.1h1M1528.5 769.3V772.9M1527.5 772.0h1M1528.5 770.5h1M1531.5 769.4V777.0M1530.5 776.4h1M1531.5 774.8h1M1533.5 769.3V776.0M1532.5 772.6h1M1533.5 772.3h1M1536.5 770.5V776.1M1535.5 776.1h1M1536.5 773.0h1M1538.5 767.4V776.4M1537.5 772.2h1M1538.5 768.5h1M1541.5 770.4V778.0M1540.5 773.4h1M1541.5 773.8h1M1544.5 771.9V775.0M1543.5 774.2h1M1544.5 774.5h1M1546.5 771.3V773.9M1545.5 771.6h1M1546.5 772.0h1M1549.5 771.5V775.9M1548.5 774.5h1M1549.5 773.0h1M1551.5 771.1V777.1M1550.5 773.9h1M1551.5 773.1h1M1554.5 772.5V776.1M1553.5 775.1h1M1554.5 774.0h1M1557.5 769.9V777.6M1556.5 776.6h1M1557.5 775.8h1M1559.5 770.8V775.9M1558.5 774.8h1M1559.5 775.0h1M1562.5 767.8V773.1M1561.5 767.9h1M1562.5 771.1h1M1564.5 768.1V771.2M1563.5 769.2h1M1564.5 768.2h1M1567.5 765.1V769.9M1566.5 767.7h1M1567.5 768.5h1M1570.5 766.4V769.7M1569.5 769.1h1M1570.5 768.4h1M1572.5 766.3V770.0M1571.5 767.2h1M1572.5 767.8h1M1575.5 763.0V770.2M1574.5 765.0h1M1575.5 768.1h1M1577.5 762.8V767.8M1576.5 763.6h1M1577.5 766.9h1M1580.5 759.0V769.8M1579.5 760.6h1M1580.5 761.2h1M1583.5 761.6V768.4M1582.5 767.5h1M1583.5 763.9h1M1585.5 759.5V768.3M1584.5 762.8h1M1585.5 766.2h1M1588.5 760.8V764.6M1587.5 764.6h1M1588.5 762.8h1M1590.5 760.6V765.5M1589.5 761.3h1M1590.5 765.3h1M1593.5 759.2V763.7M1592.5 761.7h1M1593.5 761.6h1M1596.5 757.5V763.1M1595.5 758.7h1M1596.5 761.4h1M1598.5 758.0V766.0M1597.5 764.2h1M1598.5 760.3h1M1601.5 759.4V766.9M1600.5 760.0h1M1601.5 766.8h1M1603.5 762.5V767.1M1602.5 763.6h1M1603.5 763.9h1M1606.5 763.1V767.6M1605.5 764.9h1M1606.5 763.9h1M1609.5 765.4V768.6M1608.5 767.8h1M1609.5 768.2h1M1611.5 766.4V769.2M1610.5 766.6h1M1611.5 767.4h1M1614.5 761.6V768.1M1613.5 768.0h1M1614.5 762.4h1M1616.5 761.9V768.3M1615.5 763.5h1M1616.5 766.7h1M1619.5 760.8V766.1M1618.5 763.0h1M1619.5 763.8h1M1622.5 760.2V767.2M1621.5 764.8h1M1622.5 763.7h1M1624.5 759.5V767.6M1623.5 766.0h1M1624.5 766.5h1M1627.5 760.8V767.1M1626.5 762.1h1M1627.5 761.2h1M1629.5 760.7V769.2M1628.5 762.1h1M1629.5 761.1h1M1632.5 759.8V766.6M1631.5 760.5h1M1632.5 764.2h1M1635.5 759.9V764.7M1634.5 764.0h1M1635.5 762.5h1M1637.5 760.4V767.8M1636.5 766.4h1M1637.5 764.1h1M1640.5 758.4V768.2M1639.5 766.7h1M1640.5 760.6h1M1642.5 760.0V768.0M1641.5 764.2h1M1642.5 765.2h1M1645.5 758.2V764.9M1644.5 763.4h1M1645.5 762.1h1M1648.5 757.5V767.1M1647.5 767.1h1M1648.5 759.8h1M1650.5 759.3V763.7M1649.5 760.4h1M1650.5 761.3h1M1653.5 756.6V765.9M1652.5 763.9h1M1653.5 762.1h1M1655.5 756.1V762.7M1654.5 759.5h1M1655.5 760.6h1M1658.5 756.6V763.5M1657.5 758.0h1M1658.5 758.7h1M1661.5 757.9V763.1M1660.5 761.6h1M1661.5 761.4h1M1663.5 757.1V765.1M1662.5 762.9h1M1663.5 760.5h1M1666.5 756.6V765.5M1665.5 758.0h1M1666.5 757.0h1M1668.5 757.2V765.6M1667.5 763.9h1M1668.5 759.9h1M1671.5 758.7V762.8M1670.5 761.7h1M1671.5 760.0h1M1674.5 760.0V764.5M1673.5 760.7h1M1674.5 762.2h1M1676.5 760.5V764.1M1675.5 761.7h1M1676.5 764.0h1M1679.5 758.6V767.6M1678.5 762.1h1M1679.5 766.9h1M1681.5 759.4V765.6M1680.5 761.1h1M1681.5 759.6h1M1684.5 761.9V767.1M1683.5 762.0h1M1684.5 763.3h1M1687.5 759.7V766.5M1686.5 761.9h1M1687.5 765.2h1M1689.5 759.4V767.2M1688.5 762.0h1M1689.5 765.9h1M1692.5 758.5V767.5M1691.5 766.7h1M1692.5 761.3h1M1694.5 760.8V768.8M1693.5 765.5h1M1694.5 765.5h1M1697.5 764.2V768.1M1696.5 766.2h1M1697.5 767.9h1M1700.5 763.4V771.6M1699.5 767.3h1M1700.5 769.5h1M1702.5 765.5V773.8M1701.5 769.4h1M1702.5 765.9h1M1705.5 768.4V774.5M1704.5 773.9h1M1705.5 773.3h1M1707.5 770.1V774.2M1706.5 772.4h1M1707.5 773.0h1M1710.5 772.6V778.7M1709.5 777.5h1M1710.5 775.3h1M1713.5 777.3V785.3M1712.5 780.3h1M1713.5 783.3h1M1715.5 778.6V787.8M1714.5 778.9h1M1715.5 786.7h1M1718.5 784.1V789.7M1717.5 784.3h1M1718.5 788.5h1M1720.5 785.8V795.0M1719.5 786.8h1M1720.5 789.9h1M1723.5 799.7V807.6M1722.5 802.6h1M1723.5 802.2h1M1726.5 794.2V799.7M1725.5 796.6h1M1726.5 799.4h1M1728.5 785.4V793.0M1727.5 792.9h1M1728.5 791.9h1M1731.5 781.9V788.5M1730.5 785.1h1M1731.5 784.4h1M1733.5 779.2V788.7M1732.5 785.4h1M1733.5 787.2h1M1736.5 782.2V785.3M1735.5 783.7h1M1736.5 785.2h1M1739.5 782.9V786.2M1738.5 784.7h1M1739.5 785.6h1M1741.5 781.8V786.8M1740.5 786.1h1M1741.5 785.2h1M1744.5 782.3V785.5M1743.5 783.3h1M1744.5 782.8h1M1746.5 781.7V790.1M1745.5 787.4h1M1746.5 783.0h1M1749.5 780.7V789.8M1748.5 789.0h1M1749.5 783.0h1M1752.5 781.7V786.4M1751.5 784.2h1M1752.5 785.6h1M1754.5 777.9V785.4M1753.5 778.8h1M1754.5 784.3h1" stroke="#00f000" stroke-width="1.25" fill="none"/><rect x="1179.5" y="754.0" width="579" height="56.5" fill="none" stroke="#fff" stroke-width="1"/><path d="M1180.5 810V816" stroke="#fff" stroke-width="1"/><path d="M1308.5 810V816" stroke="#fff" stroke-width="1"/><path d="M1436.5 810V816" stroke="#fff" stroke-width="1"/><path d="M1564.5 810V816" stroke="#fff" stroke-width="1"/><path d="M1692.5 810V816" stroke="#fff" stroke-width="1"/><path d="M1758 778.5H1763" stroke="#fff" stroke-width="1"/><rect x="1760" y="773" width="79" height="21" fill="#fff"/></svg><div style="left:0;top:0;width:2560px;height:1360px;clip-path:inset(751px 716px 516px 1177px)"><span class="t" style="left:1767.00px;top:768.43px;font-size:20.2px;color:#fff;transform:scaleX(0.8900);">111.010</span></div><div style="left:1760px;top:773px;width:79px;height:21px;background:#fff"></div><span class="t" style="left:1768.00px;top:775.03px;font-size:20.2px;color:#000;transform:scaleX(0.8800);">109.528</span><svg style="left:1183px;top:763.3px" width="14" height="8" viewBox="0 0 14 8"><path d="M0 0H13L6.5 7Z" fill="#fff"/></svg><span class="t" style="left:1205.59px;top:757.83px;font-size:20.2px;color:#fff;transform:scaleX(0.9070);">USDJPY,Daily  109.587 109.641 109.436 109.528</span><span class="t" style="left:1192.80px;top:765.53px;font-size:20.2px;color:#fff;transform:scaleX(0.9167);">#172556833 sell 0.10</span><span class="t" style="left:1179.00px;top:815.23px;font-size:20.2px;color:#fff;transform:scaleX(0.9000);">15 Dec 2017</span><span class="t" style="left:1307.00px;top:815.23px;font-size:20.2px;color:#fff;transform:scaleX(0.9000);">19 Mar 2018</span><span class="t" style="left:1435.00px;top:815.23px;font-size:20.2px;color:#fff;transform:scaleX(0.9000);">15 Jun 2018</span><span class="t" style="left:1563.00px;top:815.23px;font-size:20.2px;color:#fff;transform:scaleX(0.9000);">13 Sep 2018</span><span class="t" style="left:1691.00px;top:815.23px;font-size:20.2px;color:#fff;transform:scaleX(0.9000);">11 Dec 2018</span><div style="left:1860px;top:190px;width:696px;height:166px;background:linear-gradient(180deg,#c2cfdd 0px,#c8d5e3 40px,#d2dfec 70px,#d5e2ef 100%);border-top-left-radius:6px;border-top-right-radius:6px;box-shadow:inset 1px 1px 0 #fff"></div><svg style="left:1875px;top:210px" width="31" height="31" viewBox="0 0 31 31"><rect x="1" y="1" width="24" height="18" fill="#fffdf0" stroke="#4a8cf8" stroke-width="2"/><rect x="1" y="1" width="24" height="18" fill="none" stroke="#5a9a70" stroke-width="2" stroke-dasharray="2 4"/><path d="M5 7V13M3 9L5 7L7 9M9 9H12L14 6L16 12L18 9H21" stroke="#4a8cf8" stroke-width="1.5" fill="none"/><rect x="7" y="12" width="22" height="17" fill="#fff" stroke="#4a8cf8" stroke-width="2"/><rect x="7" y="12" width="22" height="17" fill="none" stroke="#5a9a70" stroke-width="2" stroke-dasharray="2 4"/><path d="M10.5 17L13.5 24L16.5 19L19.5 24L22.5 19L25 23" stroke="#4a8cf8" stroke-width="1.6" fill="none"/></svg><span class="t" style="left:1909.21px;top:214.94px;font-size:24.42px;color:#a39d99;transform:scaleX(0.8955);">USDJPY,Weekly</span><div style="left:2334px;top:205px;width:67px;height:39px;background:linear-gradient(180deg,#d2deeb 0,#cfdbe9 40%,#c3d1e0 40%,#c5d3e2 85%,#d3e0ed 100%);border:1px solid #97a6bb;box-sizing:border-box;border-radius:3px;box-shadow:inset 0 0 0 1px rgba(255,255,255,0.5)"></div><div style="left:2357px;top:224px;width:21.5px;height:9.5px;background:linear-gradient(180deg,#f0f0f0,#d0d0d0);border:1px solid #4a4a5a;box-sizing:border-box;border-radius:2px"></div><div style="left:2404.5px;top:205px;width:67px;height:39px;background:linear-gradient(180deg,#d2deeb 0,#cfdbe9 40%,#c3d1e0 40%,#c5d3e2 85%,#d3e0ed 100%);border:1px solid #97a6bb;box-sizing:border-box;border-radius:3px;box-shadow:inset 0 0 0 1px rgba(255,255,255,0.5)"></div><div style="left:2427.0px;top:217px;width:21.5px;height:16.5px;background:linear-gradient(180deg,#f4f4f4,#d4d4d4);border:1px solid #4a4a5a;box-sizing:border-box;border-radius:2px"></div><div style="left:2433.0px;top:222.5px;width:9.5px;height:6px;background:#9cb4d2;border:1px solid #4a4a5a;box-sizing:border-box"></div><div style="left:2475px;top:205px;width:67px;height:39px;background:linear-gradient(180deg,#d2deeb 0,#cfdbe9 40%,#c3d1e0 40%,#c5d3e2 85%,#d3e0ed 100%);border:1px solid #97a6bb;box-sizing:border-box;border-radius:3px;box-shadow:inset 0 0 0 1px rgba(255,255,255,0.5)"></div><svg style="left:2496px;top:215.5px" width="24" height="18" viewBox="0 0 24 18"><path d="M4 3.5L12 8.8L20 3.5M4 14L12 8.8L20 14" stroke="#4a4a5a" stroke-width="7" stroke-linecap="round" stroke-linejoin="round" fill="none"/><path d="M4 3.5L12 8.8L20 3.5M4 14L12 8.8L20 14" stroke="#e6e6e6" stroke-width="4.6" stroke-linecap="round" stroke-linejoin="round" fill="none"/></svg><div style="left:1872px;top:247px;width:672px;height:97px;background:#fff;box-shadow:inset 2px 2px 0 #6e6e6e"></div><div style="left:1874px;top:249px;width:668px;height:93px;background:#000"></div><svg style="left:0;top:0;clip-path:inset(249px 18px 1018px 1874px)" width="2560" height="1360"><path d="M1941.5 253V309" stroke="#8a9aab" stroke-width="1.2" stroke-dasharray="3 3" shape-rendering="crispEdges"/><path d="M2005.5 253V309" stroke="#8a9aab" stroke-width="1.2" stroke-dasharray="3 3" shape-rendering="crispEdges"/><path d="M2069.5 253V309" stroke="#8a9aab" stroke-width="1.2" stroke-dasharray="3 3" shape-rendering="crispEdges"/><path d="M2133.5 253V309" stroke="#8a9aab" stroke-width="1.2" stroke-dasharray="3 3" shape-rendering="crispEdges"/><path d="M2197.5 253V309" stroke="#8a9aab" stroke-width="1.2" stroke-dasharray="3 3" shape-rendering="crispEdges"/><path d="M2261.5 253V309" stroke="#8a9aab" stroke-width="1.2" stroke-dasharray="3 3" shape-rendering="crispEdges"/><path d="M2325.5 253V309" stroke="#8a9aab" stroke-width="1.2" stroke-dasharray="3 3" shape-rendering="crispEdges"/><path d="M2389.5 253V309" stroke="#8a9aab" stroke-width="1.2" stroke-dasharray="3 3" shape-rendering="crispEdges"/><path d="M1877 274.5H2455" stroke="#8a9aab" stroke-width="1.2" stroke-dasharray="3 3" shape-rendering="crispEdges"/><path d="M1876 284.5H2455" stroke="#8a9aab" stroke-width="1.2" shape-rendering="crispEdges"/><path d="M1876 285.5H2455" stroke="#00c000" stroke-width="1" stroke-dasharray="9 4 2 4"/><path d="M1878.5 300.0V308.0M1877.5 304.7h1M1878.5 303.4h1M1880.5 301.7V305.1M1879.5 302.5h1M1880.5 303.2h1M1883.5 300.9V304.8M1882.5 302.9h1M1883.5 303.7h1M1886.5 298.4V302.5M1885.5 301.1h1M1886.5 300.9h1M1888.5 297.4V302.9M1887.5 300.5h1M1888.5 301.0h1M1891.5 298.8V302.8M1890.5 301.2h1M1891.5 300.6h1M1893.5 297.7V301.1M1892.5 300.5h1M1893.5 298.4h1M1896.5 297.9V300.6M1895.5 299.5h1M1896.5 300.1h1M1899.5 295.4V299.8M1898.5 298.8h1M1899.5 297.8h1M1901.5 294.7V299.2M1900.5 298.5h1M1901.5 295.8h1M1904.5 290.3V300.7M1903.5 292.0h1M1904.5 300.4h1M1906.5 292.7V297.9M1905.5 296.3h1M1906.5 297.8h1M1909.5 288.6V299.1M1908.5 296.5h1M1909.5 292.2h1M1912.5 293.9V297.7M1911.5 295.7h1M1912.5 294.7h1M1914.5 293.6V300.0M1913.5 297.0h1M1914.5 294.7h1M1917.5 293.1V300.0M1916.5 299.3h1M1917.5 296.2h1M1919.5 290.1V300.8M1918.5 297.5h1M1919.5 294.5h1M1922.5 290.9V298.5M1921.5 293.1h1M1922.5 294.0h1M1925.5 289.9V297.3M1924.5 290.7h1M1925.5 294.6h1M1927.5 291.4V298.0M1926.5 297.7h1M1927.5 291.9h1M1930.5 289.1V294.9M1929.5 291.8h1M1930.5 291.7h1M1932.5 290.1V293.4M1931.5 290.5h1M1932.5 293.0h1M1935.5 289.5V295.6M1934.5 292.1h1M1935.5 290.0h1M1938.5 289.0V295.5M1937.5 292.6h1M1938.5 292.4h1M1940.5 287.7V296.0M1939.5 294.9h1M1940.5 291.9h1M1943.5 289.9V296.7M1942.5 292.1h1M1943.5 292.3h1M1945.5 290.2V298.0M1944.5 293.5h1M1945.5 296.6h1M1948.5 291.1V296.3M1947.5 291.6h1M1948.5 292.3h1M1951.5 291.4V298.3M1950.5 294.6h1M1951.5 292.2h1M1953.5 291.6V297.6M1952.5 296.7h1M1953.5 293.1h1M1956.5 290.6V297.0M1955.5 292.4h1M1956.5 292.9h1M1958.5 292.0V299.5M1957.5 295.0h1M1958.5 297.1h1M1961.5 293.6V298.1M1960.5 294.4h1M1961.5 297.9h1M1964.5 293.2V296.8M1963.5 293.7h1M1964.5 295.9h1M1966.5 292.4V300.7M1965.5 299.2h1M1966.5 297.4h1M1969.5 294.3V297.7M1968.5 297.2h1M1969.5 295.0h1M1971.5 293.0V298.3M1970.5 297.6h1M1971.5 295.3h1M1974.5 290.0V298.9M1973.5 292.8h1M1974.5 297.9h1M1977.5 289.7V296.9M1976.5 295.3h1M1977.5 295.7h1M1979.5 291.6V298.1M1978.5 295.1h1M1979.5 292.9h1M1982.5 290.9V294.0M1981.5 293.4h1M1982.5 292.7h1M1984.5 289.4V294.0M1983.5 291.4h1M1984.5 290.2h1M1987.5 288.2V296.0M1986.5 293.1h1M1987.5 291.5h1M1990.5 287.5V298.2M1989.5 292.1h1M1990.5 288.1h1M1992.5 289.2V293.4M1991.5 289.3h1M1992.5 290.8h1M1995.5 285.9V294.5M1994.5 288.2h1M1995.5 287.3h1M1997.5 287.6V291.3M1996.5 289.6h1M1997.5 288.1h1M2000.5 284.0V289.4M1999.5 285.6h1M2000.5 287.3h1M2003.5 281.2V287.2M2002.5 283.3h1M2003.5 287.0h1M2005.5 280.5V285.4M2004.5 284.4h1M2005.5 282.0h1M2008.5 278.6V282.4M2007.5 282.0h1M2008.5 279.2h1M2010.5 277.0V284.9M2009.5 284.3h1M2010.5 284.7h1M2013.5 275.6V280.9M2012.5 279.8h1M2013.5 279.4h1M2016.5 271.9V278.2M2015.5 275.5h1M2016.5 278.1h1M2018.5 269.5V277.5M2017.5 275.4h1M2018.5 270.0h1M2021.5 271.2V274.1M2020.5 273.1h1M2021.5 271.6h1M2023.5 269.3V273.1M2022.5 271.5h1M2023.5 271.5h1M2026.5 265.8V272.5M2025.5 268.2h1M2026.5 269.8h1M2029.5 262.9V272.2M2028.5 263.7h1M2029.5 265.9h1M2031.5 264.3V271.1M2030.5 269.8h1M2031.5 269.7h1M2034.5 263.6V268.4M2033.5 266.5h1M2034.5 265.6h1M2036.5 260.1V268.2M2035.5 264.9h1M2036.5 267.6h1M2039.5 259.4V267.0M2038.5 265.7h1M2039.5 264.9h1M2042.5 259.9V267.2M2041.5 262.5h1M2042.5 261.4h1M2044.5 261.7V270.1M2043.5 263.8h1M2044.5 264.8h1M2047.5 260.4V265.6M2046.5 261.7h1M2047.5 260.6h1M2049.5 258.3V269.1M2048.5 260.0h1M2049.5 264.4h1M2052.5 260.2V266.3M2051.5 265.9h1M2052.5 261.8h1M2055.5 259.4V265.6M2054.5 260.0h1M2055.5 262.1h1M2057.5 257.3V265.3M2056.5 260.3h1M2057.5 263.2h1M2060.5 258.0V266.2M2059.5 265.0h1M2060.5 264.3h1M2062.5 257.0V261.6M2061.5 259.9h1M2062.5 261.4h1M2065.5 257.9V265.0M2064.5 260.0h1M2065.5 261.6h1M2068.5 257.1V266.7M2067.5 263.0h1M2068.5 266.2h1M2070.5 258.1V265.6M2069.5 260.7h1M2070.5 259.3h1M2073.5 259.4V263.3M2072.5 261.3h1M2073.5 260.8h1M2075.5 254.9V264.2M2074.5 257.4h1M2075.5 256.0h1M2078.5 259.8V265.0M2077.5 264.4h1M2078.5 261.0h1M2081.5 259.5V266.2M2080.5 265.7h1M2081.5 266.0h1M2083.5 257.9V267.2M2082.5 264.7h1M2083.5 264.8h1M2086.5 259.5V264.9M2085.5 264.1h1M2086.5 259.7h1M2088.5 261.4V266.2M2087.5 261.7h1M2088.5 262.0h1M2091.5 260.2V266.4M2090.5 260.8h1M2091.5 264.4h1M2094.5 258.9V265.9M2093.5 264.0h1M2094.5 263.2h1M2096.5 258.1V267.7M2095.5 260.8h1M2096.5 262.9h1M2099.5 259.9V269.5M2098.5 267.8h1M2099.5 265.1h1M2101.5 264.2V267.9M2100.5 267.6h1M2101.5 267.4h1M2104.5 264.4V269.9M2103.5 265.5h1M2104.5 264.6h1M2107.5 262.5V269.3M2106.5 266.5h1M2107.5 267.6h1M2109.5 267.0V271.1M2108.5 269.5h1M2109.5 268.7h1M2112.5 268.0V271.2M2111.5 268.0h1M2112.5 269.3h1M2114.5 265.4V273.7M2113.5 267.3h1M2114.5 267.4h1M2117.5 270.3V273.8M2116.5 270.9h1M2117.5 271.0h1M2120.5 270.7V273.8M2119.5 272.9h1M2120.5 270.7h1M2122.5 269.7V275.5M2121.5 271.6h1M2122.5 272.5h1M2125.5 271.0V274.8M2124.5 274.0h1M2125.5 271.5h1M2127.5 271.5V274.6M2126.5 271.9h1M2127.5 271.7h1M2130.5 269.1V275.3M2129.5 274.2h1M2130.5 269.4h1M2133.5 270.7V276.4M2132.5 274.2h1M2133.5 275.5h1M2135.5 270.3V275.6M2134.5 270.5h1M2135.5 274.3h1M2138.5 268.8V276.5M2137.5 275.3h1M2138.5 275.1h1M2140.5 273.4V278.0M2139.5 276.6h1M2140.5 274.9h1M2143.5 272.5V279.6M2142.5 274.1h1M2143.5 274.2h1M2146.5 277.5V281.4M2145.5 279.7h1M2146.5 280.2h1M2148.5 278.6V282.3M2147.5 279.4h1M2148.5 280.2h1M2151.5 281.0V284.2M2150.5 281.9h1M2151.5 282.3h1M2153.5 278.6V286.3M2152.5 284.8h1M2153.5 280.0h1M2156.5 278.5V282.9M2155.5 279.6h1M2156.5 279.2h1M2159.5 280.5V288.4M2158.5 287.7h1M2159.5 286.4h1M2161.5 279.3V287.8M2160.5 279.5h1M2161.5 280.9h1M2164.5 285.7V289.5M2163.5 287.4h1M2164.5 289.2h1M2166.5 286.6V292.8M2165.5 291.6h1M2166.5 291.3h1M2169.5 288.7V293.6M2168.5 290.9h1M2169.5 291.8h1M2172.5 287.8V296.5M2171.5 295.3h1M2172.5 296.2h1M2174.5 293.7V298.6M2173.5 296.5h1M2174.5 296.0h1M2177.5 294.1V299.2M2176.5 294.3h1M2177.5 297.9h1M2179.5 295.8V300.7M2178.5 296.8h1M2179.5 298.4h1M2182.5 298.2V303.1M2181.5 299.8h1M2182.5 300.9h1M2185.5 297.3V300.6M2184.5 298.3h1M2185.5 298.9h1M2187.5 297.9V302.4M2186.5 300.4h1M2187.5 300.1h1M2190.5 298.2V302.4M2189.5 301.5h1M2190.5 300.7h1M2192.5 296.9V302.9M2191.5 297.6h1M2192.5 301.0h1M2195.5 295.6V301.2M2194.5 299.0h1M2195.5 295.7h1M2198.5 292.4V301.9M2197.5 301.0h1M2198.5 297.8h1M2200.5 293.0V298.4M2199.5 297.1h1M2200.5 296.7h1M2203.5 294.4V299.0M2202.5 294.9h1M2203.5 297.8h1M2205.5 291.6V296.3M2204.5 294.5h1M2205.5 292.0h1M2208.5 287.7V298.6M2207.5 295.4h1M2208.5 287.9h1M2211.5 292.0V296.0M2210.5 294.4h1M2211.5 293.5h1M2213.5 291.5V294.9M2212.5 292.3h1M2213.5 294.4h1M2216.5 289.1V298.1M2215.5 292.4h1M2216.5 297.8h1M2218.5 289.2V296.1M2217.5 291.7h1M2218.5 294.9h1M2221.5 285.4V292.6M2220.5 290.1h1M2221.5 291.4h1M2224.5 282.3V290.7M2223.5 287.1h1M2224.5 284.0h1M2226.5 278.2V283.9M2225.5 282.7h1M2226.5 283.0h1M2229.5 275.0V280.6M2228.5 277.5h1M2229.5 279.0h1M2231.5 273.6V278.0M2230.5 275.9h1M2231.5 275.6h1M2234.5 270.6V278.0M2233.5 273.6h1M2234.5 273.7h1M2237.5 271.3V275.4M2236.5 271.5h1M2237.5 271.5h1M2239.5 272.1V276.7M2238.5 273.2h1M2239.5 274.2h1M2242.5 270.9V276.1M2241.5 271.2h1M2242.5 271.0h1M2244.5 269.8V278.2M2243.5 277.9h1M2244.5 275.5h1M2247.5 271.0V276.6M2246.5 275.5h1M2247.5 273.2h1M2250.5 273.8V278.2M2249.5 275.6h1M2250.5 277.4h1M2252.5 273.6V279.4M2251.5 274.4h1M2252.5 275.3h1M2255.5 276.1V278.5M2254.5 277.2h1M2255.5 277.0h1M2257.5 273.7V278.4M2256.5 276.3h1M2257.5 275.3h1M2260.5 271.9V281.2M2259.5 278.1h1M2260.5 277.4h1M2263.5 272.6V277.8M2262.5 275.0h1M2263.5 272.9h1M2265.5 272.1V281.4M2264.5 281.3h1M2265.5 275.1h1M2268.5 274.1V279.9M2267.5 279.1h1M2268.5 274.9h1M2270.5 276.0V282.5M2269.5 276.9h1M2270.5 278.7h1M2273.5 279.0V281.4M2272.5 279.7h1M2273.5 280.0h1M2276.5 277.4V284.6M2275.5 279.7h1M2276.5 280.3h1M2278.5 280.9V284.5M2277.5 281.1h1M2278.5 282.7h1M2281.5 279.4V285.6M2280.5 283.9h1M2281.5 282.2h1M2283.5 278.0V286.2M2282.5 284.7h1M2283.5 285.3h1M2286.5 280.6V286.1M2285.5 283.8h1M2286.5 282.7h1M2289.5 282.9V287.1M2288.5 283.1h1M2289.5 286.6h1M2291.5 281.9V288.7M2290.5 282.9h1M2291.5 285.6h1M2294.5 280.9V286.4M2293.5 286.1h1M2294.5 284.1h1M2296.5 280.3V287.3M2295.5 285.8h1M2296.5 283.7h1M2299.5 279.4V286.0M2298.5 285.4h1M2299.5 282.7h1M2302.5 278.1V284.2M2301.5 280.3h1M2302.5 284.0h1M2304.5 280.0V283.3M2303.5 280.9h1M2304.5 281.5h1M2307.5 277.7V283.5M2306.5 281.5h1M2307.5 281.7h1M2309.5 277.4V280.9M2308.5 279.0h1M2309.5 280.4h1M2312.5 273.1V280.7M2311.5 279.6h1M2312.5 280.6h1M2315.5 275.0V278.1M2314.5 277.1h1M2315.5 278.0h1M2317.5 275.7V278.9M2316.5 276.3h1M2317.5 277.5h1M2320.5 275.7V282.7M2319.5 277.8h1M2320.5 278.3h1M2322.5 277.8V282.2M2321.5 277.9h1M2322.5 278.9h1M2325.5 275.2V283.6M2324.5 282.0h1M2325.5 280.7h1M2328.5 278.7V285.2M2327.5 280.4h1M2328.5 280.2h1M2330.5 280.7V285.2M2329.5 280.8h1M2330.5 281.7h1M2333.5 279.8V287.5M2332.5 284.8h1M2333.5 283.0h1M2335.5 280.0V287.3M2334.5 282.3h1M2335.5 285.0h1M2338.5 280.6V284.3M2337.5 282.6h1M2338.5 283.6h1M2341.5 282.4V288.0M2340.5 283.4h1M2341.5 286.8h1M2343.5 282.2V287.0M2342.5 285.3h1M2343.5 283.5h1M2346.5 281.8V290.0M2345.5 284.7h1M2346.5 284.1h1M2348.5 284.1V288.9M2347.5 286.0h1M2348.5 284.9h1M2351.5 285.5V289.6M2350.5 289.5h1M2351.5 286.8h1M2354.5 286.4V291.3M2353.5 287.6h1M2354.5 289.9h1M2356.5 287.0V290.5M2355.5 288.0h1M2356.5 288.9h1M2359.5 284.9V291.9M2358.5 286.1h1M2359.5 285.7h1M2361.5 287.4V292.4M2360.5 288.4h1M2361.5 290.3h1M2364.5 284.2V292.1M2363.5 290.6h1M2364.5 287.3h1M2367.5 284.5V289.3M2366.5 288.6h1M2367.5 288.3h1M2369.5 284.5V290.4M2368.5 285.5h1M2369.5 288.9h1M2372.5 284.9V289.7M2371.5 289.3h1M2372.5 287.6h1M2374.5 282.4V289.3M2373.5 286.1h1M2374.5 287.9h1M2377.5 280.8V288.6M2376.5 281.9h1M2377.5 284.8h1M2380.5 279.9V283.8M2379.5 283.4h1M2380.5 282.9h1M2382.5 277.5V284.3M2381.5 280.7h1M2382.5 282.1h1M2385.5 279.9V283.3M2384.5 282.4h1M2385.5 281.5h1M2387.5 275.7V283.9M2386.5 281.4h1M2387.5 277.9h1M2390.5 276.4V286.5M2389.5 281.8h1M2390.5 277.1h1M2393.5 277.4V283.3M2392.5 279.1h1M2393.5 280.0h1M2395.5 276.2V282.0M2394.5 277.2h1M2395.5 279.5h1M2398.5 279.5V283.6M2397.5 282.6h1M2398.5 281.5h1M2400.5 277.5V283.5M2399.5 279.1h1M2400.5 280.4h1M2403.5 275.5V282.5M2402.5 278.0h1M2403.5 282.1h1M2406.5 278.2V283.1M2405.5 282.0h1M2406.5 281.5h1M2408.5 277.3V285.3M2407.5 278.9h1M2408.5 279.1h1M2411.5 276.4V280.7M2410.5 278.4h1M2411.5 278.7h1M2413.5 273.4V283.6M2412.5 278.5h1M2413.5 274.0h1M2416.5 276.5V281.9M2415.5 277.2h1M2416.5 278.3h1M2419.5 275.2V282.9M2418.5 280.6h1M2419.5 278.4h1M2421.5 274.6V281.5M2420.5 279.6h1M2421.5 279.8h1M2424.5 275.5V282.1M2423.5 279.4h1M2424.5 277.9h1M2426.5 275.1V280.5M2425.5 275.5h1M2426.5 275.5h1M2429.5 274.8V279.0M2428.5 276.5h1M2429.5 278.6h1M2432.5 271.2V281.9M2431.5 279.8h1M2432.5 272.0h1M2434.5 273.9V282.6M2433.5 282.2h1M2434.5 282.5h1M2437.5 275.2V280.8M2436.5 275.7h1M2437.5 279.7h1M2439.5 276.0V283.0M2438.5 282.1h1M2439.5 282.1h1M2442.5 276.4V282.0M2441.5 277.6h1M2442.5 278.4h1M2445.5 279.6V282.4M2444.5 281.2h1M2445.5 279.8h1M2447.5 277.9V285.5M2446.5 283.7h1M2447.5 284.1h1M2450.5 278.0V285.5M2449.5 284.3h1M2450.5 278.1h1M2452.5 278.6V288.3M2451.5 282.4h1M2452.5 282.6h1" stroke="#00f000" stroke-width="1.25" fill="none"/><rect x="1876.5" y="252.5" width="579" height="57" fill="none" stroke="#fff" stroke-width="1"/><path d="M1877.5 309V315" stroke="#fff" stroke-width="1"/><path d="M2005.5 309V315" stroke="#fff" stroke-width="1"/><path d="M2133.5 309V315" stroke="#fff" stroke-width="1"/><path d="M2261.5 309V315" stroke="#fff" stroke-width="1"/><path d="M2389.5 309V315" stroke="#fff" stroke-width="1"/><path d="M2455 276.5H2460" stroke="#fff" stroke-width="1"/><rect x="2457" y="273" width="80" height="23" fill="#fff"/></svg><div style="left:0;top:0;width:2560px;height:1360px;clip-path:inset(249px 18px 1018px 1874px)"><span class="t" style="left:2464.00px;top:266.43px;font-size:20.2px;color:#fff;transform:scaleX(0.8900);">115.290</span></div><div style="left:2457px;top:273px;width:80px;height:23px;background:#fff"></div><span class="t" style="left:2465.00px;top:275.03px;font-size:20.2px;color:#000;transform:scaleX(0.8800);">109.528</span><svg style="left:1880px;top:262px" width="14" height="8" viewBox="0 0 14 8"><path d="M0 0H13L6.5 7Z" fill="#fff"/></svg><span class="t" style="left:1903.09px;top:256.53px;font-size:20.2px;color:#fff;transform:scaleX(0.9058);">USDJPY,Weekly  109.692 109.998 109.144 109.528</span><span class="t" style="left:1890.00px;top:264.23px;font-size:20.2px;color:#fff;transform:scaleX(0.9167);">#172556833 sell 0.10</span><span class="t" style="left:1876.00px;top:314.13px;font-size:20.2px;color:#fff;transform:scaleX(0.9000);">28 Jul 2013</span><span class="t" style="left:2004.00px;top:314.13px;font-size:20.2px;color:#fff;transform:scaleX(0.9000);">19 Oct 2014</span><span class="t" style="left:2132.00px;top:314.13px;font-size:20.2px;color:#fff;transform:scaleX(0.9000);">10 Jan 2016</span><span class="t" style="left:2260.00px;top:314.13px;font-size:20.2px;color:#fff;transform:scaleX(0.9000);">2 Apr 2017</span><span class="t" style="left:2388.00px;top:314.13px;font-size:20.2px;color:#fff;transform:scaleX(0.9000);">24 Jun 2018</span><div style="left:1860px;top:358px;width:696px;height:165px;background:linear-gradient(180deg,#c2cfdd 0px,#c8d5e3 40px,#d2dfec 70px,#d5e2ef 100%);border-top-left-radius:6px;border-top-right-radius:6px;box-shadow:inset 1px 1px 0 #fff"></div><svg style="left:1875px;top:378px" width="31" height="31" viewBox="0 0 31 31"><rect x="1" y="1" width="24" height="18" fill="#fffdf0" stroke="#4a8cf8" stroke-width="2"/><rect x="1" y="1" width="24" height="18" fill="none" stroke="#5a9a70" stroke-width="2" stroke-dasharray="2 4"/><path d="M5 7V13M3 9L5 7L7 9M9 9H12L14 6L16 12L18 9H21" stroke="#4a8cf8" stroke-width="1.5" fill="none"/><rect x="7" y="12" width="22" height="17" fill="#fff" stroke="#4a8cf8" stroke-width="2"/><rect x="7" y="12" width="22" height="17" fill="none" stroke="#5a9a70" stroke-width="2" stroke-dasharray="2 4"/><path d="M10.5 17L13.5 24L16.5 19L19.5 24L22.5 19L25 23" stroke="#4a8cf8" stroke-width="1.6" fill="none"/></svg><span class="t" style="left:1909.12px;top:382.94px;font-size:24.42px;color:#a39d99;transform:scaleX(0.9393);">USDJPY,Monthly</span><div style="left:2334px;top:373px;width:67px;height:39px;background:linear-gradient(180deg,#d2deeb 0,#cfdbe9 40%,#c3d1e0 40%,#c5d3e2 85%,#d3e0ed 100%);border:1px solid #97a6bb;box-sizing:border-box;border-radius:3px;box-shadow:inset 0 0 0 1px rgba(255,255,255,0.5)"></div><div style="left:2357px;top:392px;width:21.5px;height:9.5px;background:linear-gradient(180deg,#f0f0f0,#d0d0d0);border:1px solid #4a4a5a;box-sizing:border-box;border-radius:2px"></div><div style="left:2404.5px;top:373px;width:67px;height:39px;background:linear-gradient(180deg,#d2deeb 0,#cfdbe9 40%,#c3d1e0 40%,#c5d3e2 85%,#d3e0ed 100%);border:1px solid #97a6bb;box-sizing:border-box;border-radius:3px;box-shadow:inset 0 0 0 1px rgba(255,255,255,0.5)"></div><div style="left:2427.0px;top:385px;width:21.5px;height:16.5px;background:linear-gradient(180deg,#f4f4f4,#d4d4d4);border:1px solid #4a4a5a;box-sizing:border-box;border-radius:2px"></div><div style="left:2433.0px;top:390.5px;width:9.5px;height:6px;background:#9cb4d2;border:1px solid #4a4a5a;box-sizing:border-box"></div><div style="left:2475px;top:373px;width:67px;height:39px;background:linear-gradient(180deg,#d2deeb 0,#cfdbe9 40%,#c3d1e0 40%,#c5d3e2 85%,#d3e0ed 100%);border:1px solid #97a6bb;box-sizing:border-box;border-radius:3px;box-shadow:inset 0 0 0 1px rgba(255,255,255,0.5)"></div><svg style="left:2496px;top:383.5px" width="24" height="18" viewBox="0 0 24 18"><path d="M4 3.5L12 8.8L20 3.5M4 14L12 8.8L20 14" stroke="#4a4a5a" stroke-width="7" stroke-linecap="round" stroke-linejoin="round" fill="none"/><path d="M4 3.5L12 8.8L20 3.5M4 14L12 8.8L20 14" stroke="#e6e6e6" stroke-width="4.6" stroke-linecap="round" stroke-linejoin="round" fill="none"/></svg><div style="left:1872px;top:415px;width:672px;height:96px;background:#fff;box-shadow:inset 2px 2px 0 #6e6e6e"></div><div style="left:1874px;top:417px;width:668px;height:92px;background:#000"></div><svg style="left:0;top:0;clip-path:inset(417px 18px 851px 1874px)" width="2560" height="1360"><path d="M1941.5 420.5V476" stroke="#8a9aab" stroke-width="1.2" stroke-dasharray="3 3" shape-rendering="crispEdges"/><path d="M2005.5 420.5V476" stroke="#8a9aab" stroke-width="1.2" stroke-dasharray="3 3" shape-rendering="crispEdges"/><path d="M2069.5 420.5V476" stroke="#8a9aab" stroke-width="1.2" stroke-dasharray="3 3" shape-rendering="crispEdges"/><path d="M2133.5 420.5V476" stroke="#8a9aab" stroke-width="1.2" stroke-dasharray="3 3" shape-rendering="crispEdges"/><path d="M2197.5 420.5V476" stroke="#8a9aab" stroke-width="1.2" stroke-dasharray="3 3" shape-rendering="crispEdges"/><path d="M2261.5 420.5V476" stroke="#8a9aab" stroke-width="1.2" stroke-dasharray="3 3" shape-rendering="crispEdges"/><path d="M2325.5 420.5V476" stroke="#8a9aab" stroke-width="1.2" stroke-dasharray="3 3" shape-rendering="crispEdges"/><path d="M2389.5 420.5V476" stroke="#8a9aab" stroke-width="1.2" stroke-dasharray="3 3" shape-rendering="crispEdges"/><path d="M1877 440.5H2455" stroke="#8a9aab" stroke-width="1.2" stroke-dasharray="3 3" shape-rendering="crispEdges"/><path d="M1876 440.5H2455" stroke="#8a9aab" stroke-width="1.2" shape-rendering="crispEdges"/><path d="M1876.5 423.6V430.3M1875.5 427.0h1M1876.5 425.9h1M1879.5 422.0V430.8M1878.5 424.0h1M1879.5 425.1h1M1882.5 424.7V431.0M1881.5 429.3h1M1882.5 427.5h1M1884.5 425.6V433.1M1883.5 429.8h1M1884.5 427.1h1M1887.5 426.8V432.1M1886.5 429.0h1M1887.5 431.0h1M1889.5 425.5V436.0M1888.5 432.2h1M1889.5 429.6h1M1892.5 424.7V434.2M1891.5 428.2h1M1892.5 426.0h1M1895.5 429.1V434.1M1894.5 431.2h1M1895.5 432.4h1M1897.5 427.0V437.4M1896.5 436.1h1M1897.5 434.3h1M1900.5 428.9V438.7M1899.5 431.6h1M1900.5 438.4h1M1902.5 431.1V441.7M1901.5 432.7h1M1902.5 440.8h1M1905.5 427.6V439.6M1904.5 431.3h1M1905.5 427.7h1M1908.5 431.0V443.0M1907.5 431.1h1M1908.5 433.1h1M1910.5 434.8V438.6M1909.5 436.7h1M1910.5 435.3h1M1913.5 434.1V438.8M1912.5 438.1h1M1913.5 435.0h1M1915.5 432.2V440.6M1914.5 439.7h1M1915.5 438.6h1M1918.5 434.1V443.2M1917.5 440.4h1M1918.5 441.3h1M1921.5 435.4V442.0M1920.5 437.3h1M1921.5 439.8h1M1923.5 434.4V442.0M1922.5 439.4h1M1923.5 437.4h1M1926.5 436.2V442.9M1925.5 442.8h1M1926.5 438.4h1M1928.5 435.8V444.8M1927.5 437.9h1M1928.5 444.1h1M1931.5 439.5V447.4M1930.5 439.7h1M1931.5 444.5h1M1934.5 438.3V447.4M1933.5 441.1h1M1934.5 439.3h1M1936.5 437.0V442.6M1935.5 440.4h1M1936.5 441.0h1M1939.5 438.4V443.9M1938.5 440.4h1M1939.5 442.9h1M1941.5 436.9V442.1M1940.5 438.7h1M1941.5 438.9h1M1944.5 433.5V443.7M1943.5 443.5h1M1944.5 434.2h1M1947.5 431.8V445.1M1946.5 434.7h1M1947.5 433.5h1M1949.5 433.3V444.0M1948.5 440.3h1M1949.5 441.2h1M1952.5 434.7V440.3M1951.5 439.2h1M1952.5 438.9h1M1954.5 431.3V440.8M1953.5 432.5h1M1954.5 437.9h1M1957.5 432.9V443.2M1956.5 433.1h1M1957.5 435.3h1M1960.5 432.7V441.8M1959.5 434.6h1M1960.5 436.7h1M1962.5 432.6V440.5M1961.5 434.5h1M1962.5 438.3h1M1965.5 435.2V441.4M1964.5 438.4h1M1965.5 440.7h1M1967.5 431.7V440.2M1966.5 435.7h1M1967.5 434.3h1M1970.5 433.5V443.3M1969.5 434.9h1M1970.5 436.1h1M1973.5 433.8V442.8M1972.5 439.0h1M1973.5 434.4h1M1975.5 432.6V441.2M1974.5 435.2h1M1975.5 434.1h1M1978.5 432.2V440.2M1977.5 435.9h1M1978.5 433.1h1M1980.5 435.3V438.7M1979.5 435.3h1M1980.5 438.7h1M1983.5 432.2V443.1M1982.5 438.8h1M1983.5 439.4h1M1986.5 434.6V440.0M1985.5 438.6h1M1986.5 438.1h1M1988.5 430.5V438.8M1987.5 430.5h1M1988.5 432.7h1M1991.5 430.8V440.0M1990.5 437.5h1M1991.5 432.7h1M1993.5 432.2V438.7M1992.5 434.3h1M1993.5 434.0h1M1996.5 432.2V436.7M1995.5 433.4h1M1996.5 432.8h1M1999.5 429.4V437.1M1998.5 434.0h1M1999.5 436.9h1M2001.5 431.3V437.3M2000.5 432.6h1M2001.5 432.5h1M2004.5 433.7V438.9M2003.5 436.5h1M2004.5 436.5h1M2006.5 432.9V440.2M2005.5 434.0h1M2006.5 433.9h1M2009.5 435.7V441.0M2008.5 440.6h1M2009.5 438.9h1M2012.5 436.8V441.8M2011.5 440.6h1M2012.5 439.5h1M2014.5 439.6V443.5M2013.5 441.9h1M2014.5 443.5h1M2017.5 439.0V445.2M2016.5 442.0h1M2017.5 443.9h1M2019.5 442.8V449.9M2018.5 447.7h1M2019.5 446.0h1M2022.5 440.7V452.6M2021.5 452.5h1M2022.5 443.9h1M2025.5 443.1V450.3M2024.5 444.2h1M2025.5 449.2h1M2027.5 443.4V452.7M2026.5 443.7h1M2027.5 452.1h1M2030.5 447.7V452.8M2029.5 447.9h1M2030.5 452.0h1M2032.5 444.3V457.7M2031.5 444.9h1M2032.5 448.9h1M2035.5 450.3V453.9M2034.5 452.0h1M2035.5 452.7h1M2038.5 452.1V457.9M2037.5 456.1h1M2038.5 457.2h1M2040.5 453.0V459.4M2039.5 457.5h1M2040.5 457.7h1M2043.5 453.1V459.0M2042.5 458.8h1M2043.5 458.5h1M2045.5 453.9V461.4M2044.5 460.2h1M2045.5 458.5h1M2048.5 456.4V460.7M2047.5 459.7h1M2048.5 456.6h1M2051.5 455.3V459.5M2050.5 458.1h1M2051.5 457.3h1M2053.5 454.2V463.6M2052.5 461.5h1M2053.5 461.4h1M2056.5 456.7V467.0M2055.5 460.3h1M2056.5 457.9h1M2058.5 457.1V468.6M2057.5 460.8h1M2058.5 457.7h1M2061.5 460.4V465.2M2060.5 464.4h1M2061.5 461.2h1M2064.5 460.2V465.9M2063.5 465.3h1M2064.5 463.1h1M2066.5 458.0V467.3M2065.5 464.2h1M2066.5 467.2h1M2069.5 457.1V467.2M2068.5 466.2h1M2069.5 459.0h1M2071.5 460.2V469.3M2070.5 461.6h1M2071.5 465.1h1M2074.5 464.2V469.5M2073.5 467.0h1M2074.5 467.1h1M2077.5 460.7V471.1M2076.5 464.1h1M2077.5 465.8h1M2079.5 460.2V469.3M2078.5 462.5h1M2079.5 469.0h1M2082.5 462.6V468.8M2081.5 462.8h1M2082.5 466.9h1M2084.5 464.4V470.9M2083.5 464.6h1M2084.5 467.6h1M2087.5 465.6V472.3M2086.5 467.9h1M2087.5 470.7h1M2090.5 461.9V473.9M2089.5 473.3h1M2090.5 467.2h1M2092.5 462.0V473.5M2091.5 465.7h1M2092.5 466.1h1M2095.5 466.5V471.1M2094.5 466.8h1M2095.5 469.9h1M2097.5 466.2V472.5M2096.5 470.1h1M2097.5 469.4h1M2100.5 465.7V470.8M2099.5 468.6h1M2100.5 466.1h1M2103.5 467.8V474.1M2102.5 469.1h1M2103.5 472.1h1M2105.5 466.3V474.9M2104.5 469.8h1M2105.5 468.7h1M2108.5 469.0V472.6M2107.5 469.9h1M2108.5 470.4h1M2110.5 467.5V475.0M2109.5 472.4h1M2110.5 467.7h1M2113.5 467.3V474.4M2112.5 467.3h1M2113.5 470.5h1M2116.5 464.2V474.0M2115.5 464.6h1M2116.5 465.9h1M2118.5 467.7V474.3M2117.5 468.4h1M2118.5 472.8h1M2121.5 465.9V472.5M2120.5 468.2h1M2121.5 470.0h1M2123.5 469.1V474.3M2122.5 470.4h1M2123.5 470.3h1M2126.5 466.0V473.2M2125.5 469.1h1M2126.5 467.9h1M2129.5 467.4V472.9M2128.5 469.7h1M2129.5 468.6h1M2131.5 462.0V469.3M2130.5 464.5h1M2131.5 465.1h1M2134.5 460.1V465.6M2133.5 463.8h1M2134.5 461.7h1M2136.5 453.3V462.8M2135.5 461.3h1M2136.5 455.5h1M2139.5 451.5V462.3M2138.5 456.0h1M2139.5 452.0h1M2142.5 448.4V456.2M2141.5 450.9h1M2142.5 453.6h1M2144.5 446.5V454.6M2143.5 447.0h1M2144.5 454.4h1M2147.5 444.0V452.8M2146.5 447.5h1M2147.5 445.4h1M2149.5 447.6V453.2M2148.5 452.0h1M2149.5 451.1h1M2152.5 447.7V455.1M2151.5 450.8h1M2152.5 453.4h1M2155.5 443.1V453.5M2154.5 452.4h1M2155.5 451.2h1M2157.5 444.4V451.8M2156.5 451.3h1M2157.5 444.8h1M2160.5 445.0V450.8M2159.5 448.3h1M2160.5 448.9h1M2162.5 441.3V454.2M2161.5 443.6h1M2162.5 449.1h1M2165.5 444.6V449.0M2164.5 445.2h1M2165.5 447.7h1M2168.5 440.7V450.1M2167.5 442.0h1M2168.5 444.5h1M2170.5 443.4V447.4M2169.5 443.8h1M2170.5 445.6h1M2173.5 438.3V447.9M2172.5 438.6h1M2173.5 443.4h1M2175.5 436.5V443.6M2174.5 440.2h1M2175.5 440.0h1M2178.5 436.1V440.3M2177.5 437.4h1M2178.5 438.1h1M2181.5 432.6V441.8M2180.5 439.4h1M2181.5 440.5h1M2183.5 429.0V439.2M2182.5 436.4h1M2183.5 437.8h1M2186.5 426.8V433.8M2185.5 427.1h1M2186.5 432.0h1M2188.5 425.3V429.4M2187.5 427.9h1M2188.5 429.1h1M2191.5 421.9V427.7M2190.5 422.8h1M2191.5 424.4h1M2194.5 421.9V429.1M2193.5 423.1h1M2194.5 425.2h1M2196.5 424.8V435.4M2195.5 434.4h1M2196.5 433.8h1M2199.5 428.8V435.0M2198.5 434.1h1M2199.5 434.1h1M2201.5 434.2V439.1M2200.5 436.3h1M2201.5 434.5h1M2204.5 437.0V443.2M2203.5 441.2h1M2204.5 442.1h1M2207.5 435.3V446.3M2206.5 437.9h1M2207.5 445.2h1M2209.5 440.6V445.1M2208.5 444.5h1M2209.5 442.5h1M2212.5 444.6V447.9M2211.5 445.0h1M2212.5 446.0h1M2214.5 442.7V450.0M2213.5 448.6h1M2214.5 447.9h1M2217.5 443.5V451.0M2216.5 448.3h1M2217.5 446.9h1M2220.5 444.1V450.2M2219.5 447.5h1M2220.5 445.4h1M2222.5 442.3V446.8M2221.5 443.4h1M2222.5 443.3h1M2225.5 440.3V446.3M2224.5 444.1h1M2225.5 443.3h1M2227.5 438.3V444.0M2226.5 441.2h1M2227.5 439.7h1M2230.5 437.5V441.7M2229.5 439.6h1M2230.5 438.0h1M2233.5 436.3V441.6M2232.5 438.6h1M2233.5 440.2h1M2235.5 436.3V442.0M2234.5 440.9h1M2235.5 437.0h1M2238.5 432.2V441.3M2237.5 433.3h1M2238.5 433.6h1M2240.5 429.9V440.0M2239.5 438.8h1M2240.5 438.9h1M2243.5 432.6V439.3M2242.5 434.9h1M2243.5 432.7h1M2246.5 431.8V436.3M2245.5 435.3h1M2246.5 432.7h1M2248.5 433.3V438.7M2247.5 434.9h1M2248.5 434.4h1M2251.5 431.2V439.0M2250.5 434.3h1M2251.5 435.5h1M2253.5 431.5V438.2M2252.5 432.5h1M2253.5 434.5h1M2256.5 431.1V439.7M2255.5 438.7h1M2256.5 439.3h1M2259.5 432.6V440.5M2258.5 438.4h1M2259.5 438.5h1M2261.5 434.4V444.3M2260.5 437.7h1M2261.5 441.0h1M2264.5 433.7V441.5M2263.5 438.4h1M2264.5 437.8h1M2266.5 432.0V441.6M2265.5 436.3h1M2266.5 435.0h1M2269.5 436.5V442.0M2268.5 437.5h1M2269.5 439.4h1M2272.5 437.2V442.3M2271.5 437.4h1M2272.5 442.0h1M2274.5 441.3V446.3M2273.5 443.5h1M2274.5 446.0h1" stroke="#00f000" stroke-width="1.25" fill="none"/><rect x="1876.5" y="420.0" width="579" height="56.5" fill="none" stroke="#fff" stroke-width="1"/><path d="M1877.5 476V482" stroke="#fff" stroke-width="1"/><path d="M2005.5 476V482" stroke="#fff" stroke-width="1"/><path d="M2133.5 476V482" stroke="#fff" stroke-width="1"/><path d="M2261.5 476V482" stroke="#fff" stroke-width="1"/><path d="M2389.5 476V482" stroke="#fff" stroke-width="1"/><rect x="2457" y="429" width="80" height="22" fill="#fff"/></svg><div style="left:0;top:0;width:2560px;height:1360px;clip-path:inset(417px 18px 851px 1874px)"></div><div style="left:2457px;top:429px;width:80px;height:22px;background:#fff"></div><span class="t" style="left:2465.00px;top:431.03px;font-size:20.2px;color:#000;transform:scaleX(0.8800);">109.528</span><svg style="left:1880px;top:428.6px" width="14" height="8" viewBox="0 0 14 8"><path d="M0 0H13L6.5 7Z" fill="#fff"/></svg><span class="t" style="left:1903.09px;top:423.13px;font-size:20.2px;color:#fff;transform:scaleX(0.9110);">USDJPY,Monthly  109.546 109.998 104.775 109.528</span><span class="t" style="left:1890.00px;top:416.53px;font-size:20.2px;color:#fff;transform:scaleX(0.9167);">#172556833 sell 0.10</span><span class="t" style="left:1876.00px;top:481.93px;font-size:20.2px;color:#fff;transform:scaleX(0.9000);">1 Jun 2002</span><span class="t" style="left:2004.00px;top:481.93px;font-size:20.2px;color:#fff;transform:scaleX(0.9000);">1 Oct 2007</span><span class="t" style="left:2132.00px;top:481.93px;font-size:20.2px;color:#fff;transform:scaleX(0.9000);">1 Feb 2013</span><span class="t" style="left:2260.00px;top:481.93px;font-size:20.2px;color:#fff;transform:scaleX(0.9000);">1 Jun 2018</span><div style="left:1860px;top:525px;width:696px;height:165px;background:linear-gradient(180deg,#c2cfdd 0px,#c8d5e3 40px,#d2dfec 70px,#d5e2ef 100%);border-top-left-radius:6px;border-top-right-radius:6px;box-shadow:inset 1px 1px 0 #fff"></div><svg style="left:1875px;top:545px" width="31" height="31" viewBox="0 0 31 31"><rect x="1" y="1" width="24" height="18" fill="#fffdf0" stroke="#4a8cf8" stroke-width="2"/><rect x="1" y="1" width="24" height="18" fill="none" stroke="#5a9a70" stroke-width="2" stroke-dasharray="2 4"/><path d="M5 7V13M3 9L5 7L7 9M9 9H12L14 6L16 12L18 9H21" stroke="#4a8cf8" stroke-width="1.5" fill="none"/><rect x="7" y="12" width="22" height="17" fill="#fff" stroke="#4a8cf8" stroke-width="2"/><rect x="7" y="12" width="22" height="17" fill="none" stroke="#5a9a70" stroke-width="2" stroke-dasharray="2 4"/><path d="M10.5 17L13.5 24L16.5 19L19.5 24L22.5 19L25 23" stroke="#4a8cf8" stroke-width="1.6" fill="none"/></svg><span class="t" style="left:1909.14px;top:549.94px;font-size:24.42px;color:#a39d99;transform:scaleX(0.9317);">USDJPY_30S,M1 (offline)</span><div style="left:2334px;top:540px;width:67px;height:39px;background:linear-gradient(180deg,#d2deeb 0,#cfdbe9 40%,#c3d1e0 40%,#c5d3e2 85%,#d3e0ed 100%);border:1px solid #97a6bb;box-sizing:border-box;border-radius:3px;box-shadow:inset 0 0 0 1px rgba(255,255,255,0.5)"></div><div style="left:2357px;top:559px;width:21.5px;height:9.5px;background:linear-gradient(180deg,#f0f0f0,#d0d0d0);border:1px solid #4a4a5a;box-sizing:border-box;border-radius:2px"></div><div style="left:2404.5px;top:540px;width:67px;height:39px;background:linear-gradient(180deg,#d2deeb 0,#cfdbe9 40%,#c3d1e0 40%,#c5d3e2 85%,#d3e0ed 100%);border:1px solid #97a6bb;box-sizing:border-box;border-radius:3px;box-shadow:inset 0 0 0 1px rgba(255,255,255,0.5)"></div><div style="left:2427.0px;top:552px;width:21.5px;height:16.5px;background:linear-gradient(180deg,#f4f4f4,#d4d4d4);border:1px solid #4a4a5a;box-sizing:border-box;border-radius:2px"></div><div style="left:2433.0px;top:557.5px;width:9.5px;height:6px;background:#9cb4d2;border:1px solid #4a4a5a;box-sizing:border-box"></div><div style="left:2475px;top:540px;width:67px;height:39px;background:linear-gradient(180deg,#d2deeb 0,#cfdbe9 40%,#c3d1e0 40%,#c5d3e2 85%,#d3e0ed 100%);border:1px solid #97a6bb;box-sizing:border-box;border-radius:3px;box-shadow:inset 0 0 0 1px rgba(255,255,255,0.5)"></div><svg style="left:2496px;top:550.5px" width="24" height="18" viewBox="0 0 24 18"><path d="M4 3.5L12 8.8L20 3.5M4 14L12 8.8L20 14" stroke="#4a4a5a" stroke-width="7" stroke-linecap="round" stroke-linejoin="round" fill="none"/><path d="M4 3.5L12 8.8L20 3.5M4 14L12 8.8L20 14" stroke="#e6e6e6" stroke-width="4.6" stroke-linecap="round" stroke-linejoin="round" fill="none"/></svg><div style="left:1872px;top:582px;width:672px;height:96px;background:#fff;box-shadow:inset 2px 2px 0 #6e6e6e"></div><div style="left:1874px;top:584px;width:668px;height:92px;background:#000"></div><svg style="left:0;top:0;clip-path:inset(584px 18px 684px 1874px)" width="2560" height="1360"><path d="M1941.5 587V643" stroke="#8a9aab" stroke-width="1.2" stroke-dasharray="3 3" shape-rendering="crispEdges"/><path d="M2005.5 587V643" stroke="#8a9aab" stroke-width="1.2" stroke-dasharray="3 3" shape-rendering="crispEdges"/><path d="M2069.5 587V643" stroke="#8a9aab" stroke-width="1.2" stroke-dasharray="3 3" shape-rendering="crispEdges"/><path d="M2133.5 587V643" stroke="#8a9aab" stroke-width="1.2" stroke-dasharray="3 3" shape-rendering="crispEdges"/><path d="M2197.5 587V643" stroke="#8a9aab" stroke-width="1.2" stroke-dasharray="3 3" shape-rendering="crispEdges"/><path d="M2261.5 587V643" stroke="#8a9aab" stroke-width="1.2" stroke-dasharray="3 3" shape-rendering="crispEdges"/><path d="M2325.5 587V643" stroke="#8a9aab" stroke-width="1.2" stroke-dasharray="3 3" shape-rendering="crispEdges"/><path d="M2389.5 587V643" stroke="#8a9aab" stroke-width="1.2" stroke-dasharray="3 3" shape-rendering="crispEdges"/><path d="M1877 608.5H2455" stroke="#8a9aab" stroke-width="1.2" stroke-dasharray="3 3" shape-rendering="crispEdges"/><path d="M1876 632.5H2455" stroke="#8a9aab" stroke-width="1.2" shape-rendering="crispEdges"/><path d="M1876.3 593.5H2038.6" stroke="#00f000" stroke-width="1.2" stroke-dasharray="1 2"/><path d="M2116.2 641.5H2203.6" stroke="#00f000" stroke-width="1.2" stroke-dasharray="1 2"/><path d="M2206.4 637.5H2442.1" stroke="#00f000" stroke-width="1.2" stroke-dasharray="1 2"/><path d="M2443.5 632.5H2451.8" stroke="#00f000" stroke-width="1.2" stroke-dasharray="1 2"/><rect x="1876.5" y="586.5" width="579" height="57" fill="none" stroke="#fff" stroke-width="1"/><path d="M1877.5 643V649" stroke="#fff" stroke-width="1"/><path d="M2005.5 643V649" stroke="#fff" stroke-width="1"/><path d="M2133.5 643V649" stroke="#fff" stroke-width="1"/><path d="M2261.5 643V649" stroke="#fff" stroke-width="1"/><path d="M2389.5 643V649" stroke="#fff" stroke-width="1"/><path d="M2455 609.5H2460" stroke="#fff" stroke-width="1"/><rect x="2457" y="621" width="80" height="22.5" fill="#fff"/></svg><div style="left:0;top:0;width:2560px;height:1360px;clip-path:inset(584px 18px 684px 1874px)"><span class="t" style="left:2464.00px;top:599.73px;font-size:20.2px;color:#fff;transform:scaleX(0.8900);">112.110</span></div><div style="left:2457px;top:621px;width:80px;height:22.5px;background:#fff"></div><span class="t" style="left:2465.00px;top:623.03px;font-size:20.2px;color:#000;transform:scaleX(0.8800);">109.528</span><span class="t" style="left:1880.10px;top:591.53px;font-size:20.2px;color:#fff;transform:scaleX(0.8998);">USDJPY_30S,M1  109.523 109.530 109.523 109.528</span><span class="t" style="left:1876.00px;top:647.73px;font-size:20.2px;color:#fff;transform:scaleX(0.9000);">8 Nov 2018</span><span class="t" style="left:2004.00px;top:647.73px;font-size:20.2px;color:#fff;transform:scaleX(0.9000);">9 Nov 02:29</span><span class="t" style="left:2132.00px;top:647.73px;font-size:20.2px;color:#fff;transform:scaleX(0.9000);">16 Jan 09:28</span><span class="t" style="left:2260.00px;top:647.73px;font-size:20.2px;color:#fff;transform:scaleX(0.9000);">17 Jan 06:35</span><span class="t" style="left:2388.00px;top:647.73px;font-size:20.2px;color:#fff;transform:scaleX(0.9000);">17 Jan 07:13</span><div style="left:1860px;top:692px;width:696px;height:166px;background:linear-gradient(180deg,#c2cfdd 0px,#c8d5e3 40px,#d2dfec 70px,#d5e2ef 100%);border-top-left-radius:6px;border-top-right-radius:6px;box-shadow:inset 1px 1px 0 #fff"></div><svg style="left:1875px;top:712px" width="31" height="31" viewBox="0 0 31 31"><rect x="1" y="1" width="24" height="18" fill="#fffdf0" stroke="#4a8cf8" stroke-width="2"/><rect x="1" y="1" width="24" height="18" fill="none" stroke="#5a9a70" stroke-width="2" stroke-dasharray="2 4"/><path d="M5 7V13M3 9L5 7L7 9M9 9H12L14 6L16 12L18 9H21" stroke="#4a8cf8" stroke-width="1.5" fill="none"/><rect x="7" y="12" width="22" height="17" fill="#fff" stroke="#4a8cf8" stroke-width="2"/><rect x="7" y="12" width="22" height="17" fill="none" stroke="#5a9a70" stroke-width="2" stroke-dasharray="2 4"/><path d="M10.5 17L13.5 24L16.5 19L19.5 24L22.5 19L25 23" stroke="#4a8cf8" stroke-width="1.6" fill="none"/></svg><span class="t" style="left:1909.14px;top:716.94px;font-size:24.42px;color:#a39d99;transform:scaleX(0.9317);">USDJPY_10S,M1 (offline)</span><div style="left:2334px;top:707px;width:67px;height:39px;background:linear-gradient(180deg,#d2deeb 0,#cfdbe9 40%,#c3d1e0 40%,#c5d3e2 85%,#d3e0ed 100%);border:1px solid #97a6bb;box-sizing:border-box;border-radius:3px;box-shadow:inset 0 0 0 1px rgba(255,255,255,0.5)"></div><div style="left:2357px;top:726px;width:21.5px;height:9.5px;background:linear-gradient(180deg,#f0f0f0,#d0d0d0);border:1px solid #4a4a5a;box-sizing:border-box;border-radius:2px"></div><div style="left:2404.5px;top:707px;width:67px;height:39px;background:linear-gradient(180deg,#d2deeb 0,#cfdbe9 40%,#c3d1e0 40%,#c5d3e2 85%,#d3e0ed 100%);border:1px solid #97a6bb;box-sizing:border-box;border-radius:3px;box-shadow:inset 0 0 0 1px rgba(255,255,255,0.5)"></div><div style="left:2427.0px;top:719px;width:21.5px;height:16.5px;background:linear-gradient(180deg,#f4f4f4,#d4d4d4);border:1px solid #4a4a5a;box-sizing:border-box;border-radius:2px"></div><div style="left:2433.0px;top:724.5px;width:9.5px;height:6px;background:#9cb4d2;border:1px solid #4a4a5a;box-sizing:border-box"></div><div style="left:2475px;top:707px;width:67px;height:39px;background:linear-gradient(180deg,#d2deeb 0,#cfdbe9 40%,#c3d1e0 40%,#c5d3e2 85%,#d3e0ed 100%);border:1px solid #97a6bb;box-sizing:border-box;border-radius:3px;box-shadow:inset 0 0 0 1px rgba(255,255,255,0.5)"></div><svg style="left:2496px;top:717.5px" width="24" height="18" viewBox="0 0 24 18"><path d="M4 3.5L12 8.8L20 3.5M4 14L12 8.8L20 14" stroke="#4a4a5a" stroke-width="7" stroke-linecap="round" stroke-linejoin="round" fill="none"/><path d="M4 3.5L12 8.8L20 3.5M4 14L12 8.8L20 14" stroke="#e6e6e6" stroke-width="4.6" stroke-linecap="round" stroke-linejoin="round" fill="none"/></svg><div style="left:1872px;top:749px;width:672px;height:97px;background:#fff;box-shadow:inset 2px 2px 0 #6e6e6e"></div><div style="left:1874px;top:751px;width:668px;height:93px;background:#000"></div><svg style="left:0;top:0;clip-path:inset(751px 18px 516px 1874px)" width="2560" height="1360"><path d="M1941.5 754V810" stroke="#8a9aab" stroke-width="1.2" stroke-dasharray="3 3" shape-rendering="crispEdges"/><path d="M2005.5 754V810" stroke="#8a9aab" stroke-width="1.2" stroke-dasharray="3 3" shape-rendering="crispEdges"/><path d="M2069.5 754V810" stroke="#8a9aab" stroke-width="1.2" stroke-dasharray="3 3" shape-rendering="crispEdges"/><path d="M2133.5 754V810" stroke="#8a9aab" stroke-width="1.2" stroke-dasharray="3 3" shape-rendering="crispEdges"/><path d="M2197.5 754V810" stroke="#8a9aab" stroke-width="1.2" stroke-dasharray="3 3" shape-rendering="crispEdges"/><path d="M2261.5 754V810" stroke="#8a9aab" stroke-width="1.2" stroke-dasharray="3 3" shape-rendering="crispEdges"/><path d="M2325.5 754V810" stroke="#8a9aab" stroke-width="1.2" stroke-dasharray="3 3" shape-rendering="crispEdges"/><path d="M2389.5 754V810" stroke="#8a9aab" stroke-width="1.2" stroke-dasharray="3 3" shape-rendering="crispEdges"/><path d="M1877 775.5H2455" stroke="#8a9aab" stroke-width="1.2" stroke-dasharray="3 3" shape-rendering="crispEdges"/><path d="M1876 798.5H2455" stroke="#8a9aab" stroke-width="1.2" shape-rendering="crispEdges"/><path d="M1876.3 808.5H1977.6" stroke="#00f000" stroke-width="1.2" stroke-dasharray="1 2"/><path d="M1980.3 803.5H2127.3" stroke="#00f000" stroke-width="1.2" stroke-dasharray="1 2"/><path d="M2127.3 804.5H2440.7" stroke="#00f000" stroke-width="1.2" stroke-dasharray="1 2"/><path d="M2442.1 798.5H2450.4" stroke="#00f000" stroke-width="1.2" stroke-dasharray="1 2"/><rect x="1876.5" y="753.5" width="579" height="57" fill="none" stroke="#fff" stroke-width="1"/><path d="M1877.5 810V816" stroke="#fff" stroke-width="1"/><path d="M2005.5 810V816" stroke="#fff" stroke-width="1"/><path d="M2133.5 810V816" stroke="#fff" stroke-width="1"/><path d="M2261.5 810V816" stroke="#fff" stroke-width="1"/><path d="M2389.5 810V816" stroke="#fff" stroke-width="1"/><path d="M2455 776.5H2460" stroke="#fff" stroke-width="1"/><rect x="2457" y="787.5" width="80" height="22.5" fill="#fff"/></svg><div style="left:0;top:0;width:2560px;height:1360px;clip-path:inset(751px 18px 516px 1874px)"><span class="t" style="left:2464.00px;top:766.13px;font-size:20.2px;color:#fff;transform:scaleX(0.8900);">111.860</span></div><div style="left:2457px;top:787.5px;width:80px;height:22.5px;background:#fff"></div><span class="t" style="left:2465.00px;top:789.53px;font-size:20.2px;color:#000;transform:scaleX(0.8800);">109.528</span><span class="t" style="left:1880.10px;top:757.23px;font-size:20.2px;color:#fff;transform:scaleX(0.8998);">USDJPY_10S,M1  109.526 109.530 109.526 109.528</span><span class="t" style="left:1876.00px;top:815.53px;font-size:20.2px;color:#fff;transform:scaleX(0.9000);">16 Jan 2019</span><span class="t" style="left:2004.00px;top:815.53px;font-size:20.2px;color:#fff;transform:scaleX(0.9000);">17 Jan 06:24</span><span class="t" style="left:2132.00px;top:815.53px;font-size:20.2px;color:#fff;transform:scaleX(0.9000);">17 Jan 06:42</span><span class="t" style="left:2260.00px;top:815.53px;font-size:20.2px;color:#fff;transform:scaleX(0.9000);">17 Jan 07:00</span><span class="t" style="left:2388.00px;top:815.53px;font-size:20.2px;color:#fff;transform:scaleX(0.9000);">17 Jan 07:18</span><div style="left:1096px;top:599px;width:108px;height:37px;background:#fff;border:1px solid #a0a0a0;box-sizing:border-box;box-shadow:2px 2px 2px rgba(0,0,0,0.25)"></div><span class="t" style="left:1102.00px;top:608.50px;font-size:21.51px;color:#575757;transform:scaleX(1.0805);">縦軸目盛</span><div style="left:464px;top:859px;width:2096px;height:52px;background:#f0f0f0"></div><div style="left:464px;top:859px;width:2096px;height:2px;background:#fff"></div><div style="left:463px;top:861px;width:9px;height:1px;background:#000"></div><div style="left:634px;top:861px;width:1921px;height:1px;background:#000"></div><div style="left:464px;top:861px;width:1px;height:40px;background:#6a6a6a"></div><div style="left:471px;top:861px;width:164px;height:40px;background:#fff;box-sizing:border-box;border:1px solid #000;border-top:none"></div><span class="t" style="left:493.82px;top:868.69px;font-size:24.13px;color:#000;transform:scaleX(0.8907);">USDJPY,M1</span><span class="t" style="left:656.19px;top:868.69px;font-size:24.13px;color:#6d6d6d;transform:scaleX(0.9070);">USDJPY,M5</span><span class="t" style="left:819.18px;top:868.69px;font-size:24.13px;color:#6d6d6d;transform:scaleX(0.9091);">USDJPY,M15</span><span class="t" style="left:995.18px;top:868.69px;font-size:24.13px;color:#6d6d6d;transform:scaleX(0.9091);">USDJPY,M30</span><span class="t" style="left:1172.24px;top:868.69px;font-size:24.13px;color:#6d6d6d;transform:scaleX(0.8819);">USDJPY,H1</span><span class="t" style="left:1332.24px;top:868.69px;font-size:24.13px;color:#6d6d6d;transform:scaleX(0.8819);">USDJPY,H4</span><span class="t" style="left:1491.20px;top:868.69px;font-size:24.13px;color:#6d6d6d;transform:scaleX(0.9000);">USDJPY,Daily</span><span class="t" style="left:1673.18px;top:868.69px;font-size:24.13px;color:#6d6d6d;transform:scaleX(0.9086);">USDJPY,Weekly</span><span class="t" style="left:1880.10px;top:868.69px;font-size:24.13px;color:#6d6d6d;transform:scaleX(0.9503);">USDJPY,Monthly</span><span class="t" style="left:2099.12px;top:868.69px;font-size:24.13px;color:#6d6d6d;transform:scaleX(0.9418);">USDJPY_30S,M1 (offline)</span><span class="t" style="left:2403.22px;top:868.69px;font-size:24.13px;color:#6d6d6d;transform:scaleX(0.8913);">USDJPY</span><div style="left:800px;top:864px;width:1px;height:35px;background:#505050"></div><div style="left:975px;top:864px;width:1px;height:35px;background:#505050"></div><div style="left:1151px;top:864px;width:1px;height:35px;background:#505050"></div><div style="left:1310px;top:864px;width:1px;height:35px;background:#505050"></div><div style="left:1472px;top:864px;width:1px;height:35px;background:#505050"></div><div style="left:1651px;top:864px;width:1px;height:35px;background:#505050"></div><div style="left:1859px;top:864px;width:1px;height:35px;background:#505050"></div><div style="left:2079px;top:864px;width:1px;height:35px;background:#505050"></div><div style="left:2383px;top:864px;width:1px;height:35px;background:#505050"></div><svg style="left:2492px;top:870px" width="12" height="20" viewBox="0 0 12 20"><path d="M10 4L4 10L10 16Z" fill="#a0a0a0"/></svg><svg style="left:2532px;top:870px" width="12" height="20" viewBox="0 0 12 20"><path d="M3 4L9 10L3 16Z" fill="#000"/></svg><div style="left:464px;top:910px;width:2096px;height:1px;background:#a0a0a0"></div><svg style="left:0;top:0" width="0" height="0"><defs><linearGradient id="gw" x1="0" y1="0" x2="0" y2="1"><stop offset="0" stop-color="#f4f070"/><stop offset="1" stop-color="#c8c020"/></linearGradient><radialGradient id="gc" cx="0.35" cy="0.35" r="0.7"><stop offset="0" stop-color="#f0f0f0"/><stop offset="1" stop-color="#a0a0a0"/></radialGradient></defs></svg><div style="left:0px;top:902px;width:2560px;height:412px;background:#f0f0f0"></div><svg style="left:10px;top:915px" width="11" height="11" viewBox="0 0 11 11"><path d="M1 1L10 10M10 1L1 10" stroke="#000" stroke-width="1.8"/></svg><div style="left:4px;top:939px;width:26px;height:368px;background:linear-gradient(180deg,#d3e0ee,#c3d3e4)"></div><div style="left:4px;top:1303px;width:84px;height:26px;transform-origin:0 0;transform:rotate(-90deg)"><span style="position:absolute;left:0;top:2px;white-space:pre;font-size:21px;line-height:1;transform-origin:0 0;transform:scaleX(0.8);color:#000">ターミナル</span></div><div style="left:32px;top:911px;width:2521px;height:357px;background:#fff;box-sizing:border-box;border-top:1px solid #a0a0a0;border-left:1px solid #a0a0a0"></div><div style="left:33px;top:952px;width:2486px;height:39px;background:#ebebeb"></div><div style="left:33px;top:1030px;width:2486px;height:39px;background:#ebebeb"></div><div style="left:33px;top:1107px;width:2486px;height:39px;background:#ebebeb"></div><div style="left:33px;top:1185px;width:2486px;height:39px;background:#ebebeb"></div><div style="left:33px;top:952px;width:2486px;height:1px;background:#cdcdcd"></div><div style="left:33px;top:991px;width:2486px;height:1px;background:#cdcdcd"></div><div style="left:33px;top:1030px;width:2486px;height:1px;background:#cdcdcd"></div><div style="left:33px;top:1069px;width:2486px;height:1px;background:#cdcdcd"></div><div style="left:33px;top:1107px;width:2486px;height:1px;background:#cdcdcd"></div><div style="left:33px;top:1146px;width:2486px;height:1px;background:#cdcdcd"></div><div style="left:33px;top:1185px;width:2486px;height:1px;background:#cdcdcd"></div><div style="left:33px;top:1224px;width:2486px;height:1px;background:#cdcdcd"></div><div style="left:33px;top:1263px;width:2486px;height:1px;background:#cdcdcd"></div><div style="left:351px;top:912px;width:1px;height:356px;background:#d8d8d8"></div><span class="t" style="left:39.48px;top:923.40px;font-size:21.35px;color:#000;transform:scaleX(1.1150);">時間</span><span class="t" style="left:357.68px;top:918.70px;font-size:25.46px;color:#000;transform:scaleX(0.7057);">メッセージ</span><svg style="left:39px;top:959px" width="26" height="24" viewBox="0 0 26 24"><path d="M13 1.5L25 22.5H1Z" fill="url(#gw)" stroke="#8a8a10" stroke-width="1.6" stroke-linejoin="round"/><path d="M13 9V15" stroke="#9a9a20" stroke-width="2"/><circle cx="13" cy="18.5" r="1.2" fill="#9a9a20"/></svg><span class="t" style="left:73.07px;top:960.94px;font-size:24.42px;color:#000;transform:scaleX(0.9331);">2019.01.24 13:19:23.002</span><span class="t" style="left:360.56px;top:960.94px;font-size:24.42px;color:#000;transform:scaleX(0.9356);">Script TradeAI3 USDJPY,M1: loaded successfully</span><svg style="left:42px;top:1002px" width="18" height="18" viewBox="0 0 18 18"><circle cx="9" cy="9" r="7.5" fill="url(#gc)" stroke="#8a8a8a" stroke-width="1.2"/></svg><span class="t" style="left:73.07px;top:999.84px;font-size:24.42px;color:#000;transform:scaleX(0.9331);">2019.01.24 13:19:15.868</span><span class="t" style="left:360.52px;top:999.84px;font-size:24.42px;color:#000;transform:scaleX(0.9807);">&#x27;3387925&#x27;: previous successful authorization performed from 133.55.175.99</span><svg style="left:42px;top:1041px" width="18" height="18" viewBox="0 0 18 18"><circle cx="9" cy="9" r="7.5" fill="url(#gc)" stroke="#8a8a8a" stroke-width="1.2"/></svg><span class="t" style="left:73.07px;top:1038.74px;font-size:24.42px;color:#000;transform:scaleX(0.9331);">2019.01.24 13:19:14.226</span><span class="t" style="left:359.55px;top:1038.74px;font-size:24.42px;color:#000;transform:scaleX(0.9775);">LiveUpdate: new version 4.00 build 1170 is available</span><svg style="left:42px;top:1080px" width="18" height="18" viewBox="0 0 18 18"><circle cx="9" cy="9" r="7.5" fill="url(#gc)" stroke="#8a8a8a" stroke-width="1.2"/></svg><span class="t" style="left:73.07px;top:1077.64px;font-size:24.42px;color:#000;transform:scaleX(0.9331);">2019.01.24 13:19:13.927</span><span class="t" style="left:360.53px;top:1077.64px;font-size:24.42px;color:#000;transform:scaleX(0.9708);">&#x27;3387925&#x27;: login on OANDA-Japan Practice through OANDA-MT4 Practice JP (ping: 181.75 ms)</span><svg style="left:39px;top:1114px" width="26" height="24" viewBox="0 0 26 24"><path d="M13 1.5L25 22.5H1Z" fill="url(#gw)" stroke="#8a8a10" stroke-width="1.6" stroke-linejoin="round"/><path d="M13 9V15" stroke="#9a9a20" stroke-width="2"/><circle cx="13" cy="18.5" r="1.2" fill="#9a9a20"/></svg><span class="t" style="left:73.07px;top:1116.54px;font-size:24.42px;color:#000;transform:scaleX(0.9331);">2019.01.24 13:19:08.843</span><span class="t" style="left:360.56px;top:1116.54px;font-size:24.42px;color:#000;transform:scaleX(0.9404);">Custom indicator CSV_Updater USDJPY_10S,M1: loaded successfully</span><svg style="left:39px;top:1153px" width="26" height="24" viewBox="0 0 26 24"><path d="M13 1.5L25 22.5H1Z" fill="url(#gw)" stroke="#8a8a10" stroke-width="1.6" stroke-linejoin="round"/><path d="M13 9V15" stroke="#9a9a20" stroke-width="2"/><circle cx="13" cy="18.5" r="1.2" fill="#9a9a20"/></svg><span class="t" style="left:73.07px;top:1155.44px;font-size:24.42px;color:#000;transform:scaleX(0.9331);">2019.01.24 13:19:08.757</span><span class="t" style="left:360.56px;top:1155.44px;font-size:24.42px;color:#000;transform:scaleX(0.9404);">Custom indicator CSV_Updater USDJPY_30S,M1: loaded successfully</span><svg style="left:39px;top:1192px" width="26" height="24" viewBox="0 0 26 24"><path d="M13 1.5L25 22.5H1Z" fill="url(#gw)" stroke="#8a8a10" stroke-width="1.6" stroke-linejoin="round"/><path d="M13 9V15" stroke="#9a9a20" stroke-width="2"/><circle cx="13" cy="18.5" r="1.2" fill="#9a9a20"/></svg><span class="t" style="left:73.07px;top:1194.34px;font-size:24.42px;color:#000;transform:scaleX(0.9331);">2019.01.24 13:19:08.675</span><span class="t" style="left:360.55px;top:1194.34px;font-size:24.42px;color:#000;transform:scaleX(0.9542);">Custom indicator CSV_Updater USDJPY,Monthly: loaded successfully</span><svg style="left:39px;top:1231px" width="26" height="24" viewBox="0 0 26 24"><path d="M13 1.5L25 22.5H1Z" fill="url(#gw)" stroke="#8a8a10" stroke-width="1.6" stroke-linejoin="round"/><path d="M13 9V15" stroke="#9a9a20" stroke-width="2"/><circle cx="13" cy="18.5" r="1.2" fill="#9a9a20"/></svg><span class="t" style="left:73.07px;top:1233.24px;font-size:24.42px;color:#000;transform:scaleX(0.9331);">2019.01.24 13:19:08.602</span><span class="t" style="left:360.56px;top:1233.24px;font-size:24.42px;color:#000;transform:scaleX(0.9441);">Custom indicator CSV_Updater USDJPY,Weekly: loaded successfully</span><div style="left:2519px;top:912px;width:33px;height:356px;background:#f0f0f0"></div><div style="left:2520px;top:946px;width:31px;height:115px;background:#cdcdcd"></div><svg style="left:2527px;top:926px" width="16" height="10" viewBox="0 0 16 10"><path d="M1.5 8.5L8 2L14.5 8.5" stroke="#606060" stroke-width="2.4" fill="none"/></svg><svg style="left:2527px;top:1246px" width="16" height="10" viewBox="0 0 16 10"><path d="M1.5 1.5L8 8L14.5 1.5" stroke="#606060" stroke-width="2.4" fill="none"/></svg><div style="left:2552px;top:911px;width:1px;height:357px;background:#e0e0e0"></div><div style="left:32px;top:1263px;width:2487px;height:5px;background:#ebebeb"></div><div style="left:32px;top:1268px;width:2521px;height:1px;background:#000"></div><div style="left:32px;top:1270px;width:2521px;height:38px;background:#f0f0f0"></div><div style="left:31px;top:1270px;width:1px;height:38px;background:#fff"></div><span class="t" style="left:54.93px;top:1274.99px;font-size:24.13px;color:#707070;transform:scaleX(1.0714);">取引</span><span class="t" style="left:143.01px;top:1274.99px;font-size:24.13px;color:#707070;transform:scaleX(0.9894);">運用比率</span><span class="t" style="left:277.98px;top:1274.99px;font-size:24.13px;color:#707070;transform:scaleX(1.0108);">口座履歴</span><span class="t" style="left:413.58px;top:1274.99px;font-size:24.13px;color:#707070;transform:scaleX(0.7097);">ニュース</span><span class="t" style="left:549.39px;top:1274.99px;font-size:24.13px;color:#707070;transform:scaleX(0.8042);">アラーム設定</span><span class="t" style="left:705.79px;top:1274.99px;font-size:24.13px;color:#707070;transform:scaleX(0.7365);">メールボックス</span><span class="t" style="left:887.57px;top:1274.99px;font-size:24.13px;color:#707070;transform:scaleX(0.7130);">マーケット</span><span class="t" style="left:1041.66px;top:1274.99px;font-size:24.13px;color:#707070;transform:scaleX(0.7812);">シグナル</span><span class="t" style="left:1157.78px;top:1274.99px;font-size:24.13px;color:#707070;transform:scaleX(0.7391);">ライブラリ</span><span class="t" style="left:1284.51px;top:1274.99px;font-size:24.13px;color:#707070;transform:scaleX(0.7429);">エキスパート</span><span class="t" style="left:484.95px;top:1281.90px;font-size:20.35px;color:#ee0018;transform:scaleX(1.0476);">99</span><span class="t" style="left:835.00px;top:1281.90px;font-size:20.35px;color:#ee0018;">8</span><span class="t" style="left:974.10px;top:1281.90px;font-size:20.35px;color:#ee0018;transform:scaleX(0.9032);">115</span><div style="left:123px;top:1272px;width:1px;height:31px;background:#505050"></div><div style="left:259px;top:1272px;width:1px;height:31px;background:#505050"></div><div style="left:395px;top:1272px;width:1px;height:31px;background:#505050"></div><div style="left:530px;top:1272px;width:1px;height:31px;background:#505050"></div><div style="left:688px;top:1272px;width:1px;height:31px;background:#505050"></div><div style="left:868px;top:1272px;width:1px;height:31px;background:#505050"></div><div style="left:1024px;top:1272px;width:1px;height:31px;background:#505050"></div><div style="left:1140px;top:1272px;width:1px;height:31px;background:#505050"></div><div style="left:1266px;top:1272px;width:1px;height:31px;background:#505050"></div><div style="left:1411px;top:1268px;width:136px;height:37px;background:#fff;box-sizing:border-box;border:1px solid #000;border-top:none"></div><span class="t" style="left:1431.00px;top:1274.99px;font-size:24.13px;color:#000;transform:scaleX(0.9895);">操作履歴</span><div style="left:2554px;top:911px;width:1px;height:397px;background:#fff"></div><div style="left:4px;top:1307px;width:2551px;height:1px;background:#fff"></div><div style="left:0px;top:1313px;width:2560px;height:1px;background:#a0a0a0"></div><div style="left:0px;top:1314px;width:2560px;height:46px;background:#f0f0f0"></div><span class="t" style="left:1.71px;top:1327.94px;font-size:24.42px;color:#000;transform:scaleX(0.7939);">F1キーでヘルプが表示されます</span><div style="left:1163px;top:1318px;width:1px;height:42px;background:#a0a0a0"></div><div style="left:1402px;top:1318px;width:1px;height:42px;background:#a0a0a0"></div><div style="left:1610px;top:1318px;width:1px;height:42px;background:#a0a0a0"></div><div style="left:1752px;top:1318px;width:1px;height:42px;background:#a0a0a0"></div><div style="left:1893px;top:1318px;width:1px;height:42px;background:#a0a0a0"></div><div style="left:2028px;top:1318px;width:1px;height:42px;background:#a0a0a0"></div><div style="left:2167px;top:1318px;width:1px;height:42px;background:#a0a0a0"></div><div style="left:2303px;top:1318px;width:1px;height:42px;background:#a0a0a0"></div><span class="t" style="left:1166.92px;top:1327.94px;font-size:24.42px;color:#000;transform:scaleX(1.0400);">Default</span><svg style="left:2307px;top:1326px" width="48" height="23" viewBox="0 0 48 23"><rect x="0" y="10.0" width="3.5" height="5.9" fill="#5a8a10"/><rect x="0" y="15.8" width="3.5" height="7.2" fill="#c01808"/><rect x="6" y="8.8" width="3.5" height="6.4" fill="#5a8a10"/><rect x="6" y="15.2" width="3.5" height="7.8" fill="#c01808"/><rect x="12" y="7.6" width="3.5" height="6.9" fill="#5a8a10"/><rect x="12" y="14.5" width="3.5" height="8.5" fill="#c01808"/><rect x="18" y="6.4" width="3.5" height="7.5" fill="#5a8a10"/><rect x="18" y="13.9" width="3.5" height="9.1" fill="#c01808"/><rect x="24" y="5.2" width="3.5" height="8.0" fill="#5a8a10"/><rect x="24" y="13.2" width="3.5" height="9.8" fill="#c01808"/><rect x="30" y="4.0" width="3.5" height="8.6" fill="#5a8a10"/><rect x="30" y="12.5" width="3.5" height="10.5" fill="#c01808"/><rect x="36" y="2.8" width="3.5" height="9.1" fill="#5a8a10"/><rect x="36" y="11.9" width="3.5" height="11.1" fill="#c01808"/><rect x="42" y="1.6" width="3.5" height="9.6" fill="#5a8a10"/><rect x="42" y="11.2" width="3.5" height="11.8" fill="#c01808"/></svg><span class="t" style="left:2360.99px;top:1327.94px;font-size:24.42px;color:#000;transform:scaleX(1.0109);">371/0 kb</span><svg style="left:0;top:0" width="2560" height="1360"><path d="M352.8 953.4 C338.5 955.5 342.4 959.4 339.9 963.9 C337.4 968.4 337.0 975.2 337.6 980.3 C338.2 985.4 340.9 991.5 343.4 994.4 C345.9 997.3 348.3 997.1 352.8 997.9 C357.3 998.7 360.2 998.3 370.4 999.1 C380.5 999.9 398.7 1001.8 413.7 1002.6 C428.7 1003.4 441.1 1003.3 460.6 1003.7 C480.1 1004.1 507.5 1004.9 530.9 1004.9 C554.3 1004.9 577.8 1002.7 601.2 1003.7 C624.6 1004.7 646.1 1008.2 671.5 1010.8 C696.9 1013.3 726.2 1018.2 753.6 1019.0 C781.0 1019.8 816.1 1017.6 835.6 1015.5 C855.1 1013.4 860.9 1010.4 870.7 1006.1 C880.5 1001.8 889.5 994.8 894.2 989.7 C898.9 984.6 899.3 981.1 898.9 975.6 C898.5 970.1 896.5 962.0 891.8 956.9 C887.1 951.8 884.0 947.8 870.7 945.2 C857.4 942.7 825.8 943.0 812.1 941.6 C798.4 940.2 796.5 939.7 788.7 937.0 C780.9 934.3 773.1 927.4 765.3 925.2 C757.5 923.1 749.6 922.9 741.8 924.1 C734.0 925.3 734.0 929.6 718.4 932.3 C702.8 935.0 675.4 939.0 648.1 940.5 C620.8 942.0 577.8 941.4 554.4 941.6 C531.0 941.8 523.1 942.0 507.5 941.6 C491.9 941.2 474.3 937.7 460.6 939.3 C446.9 940.9 443.5 948.6 425.5 951.0 C407.5 953.4 367.1 951.2 352.8 953.4" stroke="#e9505c" stroke-width="6.5" fill="none" stroke-linecap="round" stroke-linejoin="round" opacity="0.95"/></svg></body></html>
